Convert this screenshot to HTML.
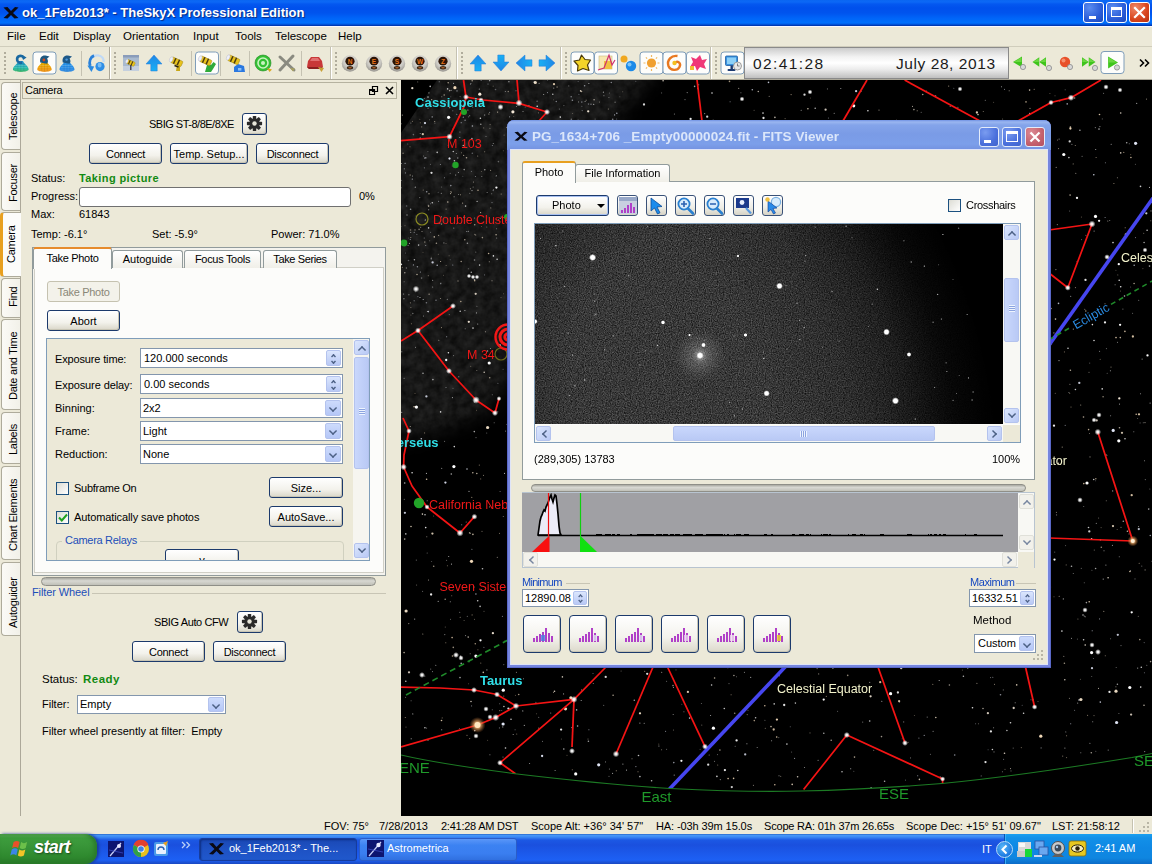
<!DOCTYPE html>
<html><head><meta charset="utf-8"><title>TheSkyX</title>
<style>
*{box-sizing:border-box;margin:0;padding:0}
html,body{width:1152px;height:864px;overflow:hidden;background:#ece9d8;font-family:"Liberation Sans",sans-serif;font-size:11px;color:#000}
.abs{position:absolute}
div,span,i,b{position:absolute;white-space:nowrap}
#title{left:0;top:0;width:1152px;height:26px;background:linear-gradient(#0a66f2 0,#0c68f6 2px,#0458f0 4px,#0050ec 8px,#0054ee 13px,#0064f8 18px,#0070fc 23px,#0046cc 25px,#002c98 26px)}
#title .t{left:22px;top:5px;color:#fff;font-weight:bold;font-size:13px;text-shadow:1px 1px 1px #0a2a80}
.wb{top:2px;width:21px;height:21px;border:1px solid #fff;border-radius:3px;background:radial-gradient(circle at 30% 25%,#5a8cf0,#2a5cd8 60%,#1c48b8)}
.wb.cl{background:radial-gradient(circle at 30% 25%,#f08868,#d8441c 60%,#b83010)}
#menu{left:0;top:26px;width:1152px;height:20px;background:#ece9d8;border-top:1px solid #f8f8ff}
#menu span{top:3px;font-size:11.5px}
#tb{left:0;top:46px;width:1152px;height:34px;background:#ece9d8;border-top:1px solid #d0cdbc}
#sky{left:401px;top:80px;width:751px;height:736px;background:#000;overflow:hidden}
#dock{left:0;top:80px;width:401px;height:736px;background:#ece9d8}
#status{left:0;top:816px;width:1152px;height:18px;background:#ece9d8}
#status span{top:4px;font-size:11px}
#task{left:0;top:834px;width:1152px;height:30px;background:linear-gradient(#1a54b8 0,#4a9af8 1px,#3a88f4 3px,#1c58e4 6px,#1a50de 11px,#1c5aec 20px,#1d60f4 26px,#1a48c0 30px)}
.btn{height:21px;border:1px solid #1c3a6c;border-radius:3px;background:linear-gradient(#fff,#f3f2ec 60%,#d9d6c8);text-align:center;font-size:11px;line-height:20px;box-shadow:inset -1px -1px 0 #c8c5b5}
.btn.dis{color:#8a8878;border-color:#c5c2b0;background:#f3f2ea;box-shadow:none}
.lbl{font-size:11px;line-height:13px}
.fld{background:#fff;border:1px solid #8396ad;height:20px;font-size:11px;line-height:18px;padding-left:3px}
.spin{right:1px;top:1px;width:15px;height:16px;background:linear-gradient(#dbe6fd,#b9c9f5);border:1px solid #b4c3ee;border-radius:2px}
.cb{width:13px;height:13px;border:1px solid #1c5180;background:linear-gradient(135deg,#dcdcd4,#fff)}
</style></head><body>
<div id="title">
<svg class="abs" style="left:3px;top:6px" width="16" height="14" viewBox="0 0 16 14"><path d="M0.5 1.5 L4.5 1 L8 5 L12 1 L15.5 1.5 L10 7 L15.5 12 L11.5 12.5 L8 9 L4.5 12.5 L0.5 12 L6 7 Z" fill="#0a0a14"/></svg>
<div class="t">ok_1Feb2013* - TheSkyX Professional Edition</div>
<div class="wb" style="left:1083px"><i style="position:absolute;left:5px;top:13px;width:7px;height:3px;background:#fff"></i></div>
<div class="wb" style="left:1106px"><i style="position:absolute;left:4px;top:4px;width:11px;height:10px;border:1px solid #fff;border-top:3px solid #fff"></i></div>
<div class="wb cl" style="left:1129px"><svg width="19" height="19" viewBox="0 0 19 19" style="position:absolute;left:0;top:0"><path d="M5 5 L14 14 M14 5 L5 14" stroke="#fff" stroke-width="2.2" stroke-linecap="square"/></svg></div>
</div>
<div id="menu">
<span style="left:7px">File</span><span style="left:39px">Edit</span><span style="left:73px">Display</span><span style="left:123px">Orientation</span><span style="left:193px">Input</span><span style="left:235px">Tools</span><span style="left:275px">Telescope</span><span style="left:338px">Help</span>
</div>
<div id="tb">
<svg class="abs" style="left:0;top:-1px" width="1152" height="34" viewBox="0 46 1152 34">
<defs>
<linearGradient id="gTeal" x1="0" y1="0" x2="0" y2="1"><stop offset="0" stop-color="#2a8fd0"/><stop offset="0.6" stop-color="#22b8b0"/><stop offset="1" stop-color="#1fae5c"/></linearGradient>
<linearGradient id="gOr" x1="0" y1="0" x2="0" y2="1"><stop offset="0" stop-color="#e8b800"/><stop offset="1" stop-color="#f08a00"/></linearGradient>
<linearGradient id="gBl" x1="0" y1="0" x2="0" y2="1"><stop offset="0" stop-color="#2d9cf0"/><stop offset="1" stop-color="#1c7fe0"/></linearGradient>
<linearGradient id="gArr" x1="0" y1="0" x2="0" y2="1"><stop offset="0" stop-color="#1f86e6"/><stop offset="1" stop-color="#18b0f4"/></linearGradient>
<radialGradient id="gBall" cx="0.5" cy="0.35" r="0.7"><stop offset="0" stop-color="#f4f4f2"/><stop offset="0.6" stop-color="#c8c6c0"/><stop offset="1" stop-color="#8c8a84"/></radialGradient>
<linearGradient id="gTime" x1="0" y1="0" x2="0" y2="1"><stop offset="0" stop-color="#c9c9c9"/><stop offset="0.3" stop-color="#f2f2f2"/><stop offset="0.5" stop-color="#ffffff"/><stop offset="0.7" stop-color="#ececec"/><stop offset="1" stop-color="#bdbdbd"/></linearGradient>
<g id="grip"><rect x="0" y="0" width="2" height="2" fill="#b0ac9c"/><rect x="0" y="4" width="2" height="2" fill="#b0ac9c"/><rect x="0" y="8" width="2" height="2" fill="#b0ac9c"/><rect x="0" y="12" width="2" height="2" fill="#b0ac9c"/><rect x="0" y="16" width="2" height="2" fill="#b0ac9c"/><rect x="0" y="20" width="2" height="2" fill="#b0ac9c"/></g>
<g id="pbox"><rect x="-11.5" y="-11" width="23" height="22" rx="3" fill="#fdfdfb" stroke="#7f9db9" stroke-width="1"/></g>
<g id="blob"><path d="M-2.2 -2 C-3 1 -7.8 3 -7.8 6.4 C-7.8 9.4 7.8 9.4 7.8 6.4 C7.8 3 3 1 2.2 -2 Z"/><path d="M-5.5 2.6 H5.5 M-6.8 4.8 H6.8 M-7 7 H7" stroke="#fff" stroke-opacity=".28" stroke-width=".8" fill="none"/><path d="M-3 0 V8.5 M0 -1 V8.8 M3 0 V8.5" stroke="#000" stroke-opacity=".12" stroke-width=".7" fill="none"/></g>
<g id="tele"><g transform="rotate(24) scale(.9)"><rect x="-7" y="-3.2" width="13" height="6.4" rx="1.2" fill="#e8c21c" stroke="#a88a08" stroke-width="0.6"/><rect x="-3.6" y="-3.4" width="1.6" height="6.8" fill="#4a3a10"/><rect x="0.8" y="-3.4" width="1.6" height="6.8" fill="#4a3a10"/><ellipse cx="-7" cy="0" rx="1.8" ry="3.2" fill="#eef0fa" stroke="#b8b8c8" stroke-width="0.5"/></g></g>
<g id="ball"><circle cx="0" cy="0.5" r="8.2" fill="url(#gBall)"/><ellipse cx="0" cy="-1.8" rx="4.6" ry="4.4" fill="#2c1406"/><ellipse cx="0" cy="4.8" rx="3.2" ry="1.7" fill="#3a2614"/><ellipse cx="0" cy="4.8" rx="1.8" ry="0.8" fill="#b0602a"/></g>
<g id="arrU"><path d="M0 -8 L8 1 L3.2 1 L3.2 8 L-3.2 8 L-3.2 1 L-8 1 Z" fill="url(#gArr)" stroke="#2a7ad8" stroke-width="0.5"/></g>
<g id="gtri"><path d="M-5 0 L4 -5.5 L4 5.5 Z" fill="#3fc41c"/><path d="M-4 0 L3.5 -4.5 L3.5 0 Z" fill="#7ee050" opacity=".7"/></g>
<g id="clk"><circle cx="0" cy="0" r="2.6" fill="#d8d8d8" stroke="#8a8a8a" stroke-width="0.8"/></g>
</defs>
<!-- lines -->
<rect x="0" y="79" width="1152" height="1" fill="#aca899"/>
<rect x="109" y="47" width="1" height="32" fill="#aca899"/><rect x="110" y="47" width="1" height="32" fill="#fff"/>
<rect x="330" y="47" width="1" height="32" fill="#c5c2b2"/><rect x="331" y="47" width="1" height="32" fill="#fff"/>
<rect x="456" y="47" width="1" height="32" fill="#c5c2b2"/><rect x="457" y="47" width="1" height="32" fill="#fff"/>
<rect x="560" y="47" width="1" height="32" fill="#c5c2b2"/><rect x="561" y="47" width="1" height="32" fill="#fff"/>
<rect x="710" y="47" width="1" height="32" fill="#c5c2b2"/><rect x="711" y="47" width="1" height="32" fill="#fff"/>
<use href="#grip" x="4" y="52"/><use href="#grip" x="114" y="52"/><use href="#grip" x="335" y="52"/><use href="#grip" x="461" y="52"/><use href="#grip" x="565" y="52"/><use href="#grip" x="715" y="52"/>
<!-- thin separators -->
<rect x="81" y="51" width="1" height="25" fill="#c5c2b2"/><rect x="191" y="51" width="1" height="25" fill="#c5c2b2"/><rect x="220" y="51" width="1" height="25" fill="#c5c2b2"/><rect x="249" y="51" width="1" height="25" fill="#c5c2b2"/><rect x="301" y="51" width="1" height="25" fill="#c5c2b2"/>
<!-- icon1 teal -->
<g transform="translate(20.8,63)"><use href="#blob" fill="url(#gTeal)"/><path d="M3.2 -5 C1 -8.6 -4.4 -7.2 -3.6 -2.8 C-3.2 -0.8 -1 0.2 1.4 -0.4" fill="none" stroke="#1a68a0" stroke-width="2.6"/><path d="M1.2 -8 L5.8 -5.6 L2.2 -3 Z" fill="#1a68a0"/></g>
<!-- icon2 orange pressed -->
<g transform="translate(44.5,63)"><use href="#pbox"/><g transform="scale(.92 1)"><use href="#blob" fill="url(#gOr)"/></g><path d="M-4.2 -0.5 C-5.4 -5.6 -2 -8 1 -7.4 L5 -6.6 L2.6 -4.4 C4 -2 3.6 0 2.2 0.8 Z" fill="#1d5880"/><circle cx="-0.6" cy="-3" r="1.4" fill="#d04a20"/></g>
<!-- icon3 blue -->
<g transform="translate(67,63)"><g transform="scale(.96 1)"><use href="#blob" fill="url(#gBl)"/></g><path d="M-4.2 -0.5 C-5.4 -5.6 -2 -8 1 -7.4 L5 -6.6 L2.6 -4.4 C4 -2 3.6 0 2.2 0.8 Z" fill="#1d5888"/><circle cx="-0.4" cy="-3.4" r="1.2" fill="#4a9ae0"/></g>
<!-- icon4 circular arrow -->
<g transform="translate(96,63)"><path d="M-6 2 C-7 -5 -2 -8 2 -7.6 C6 -7 8 -4 7.6 -1" fill="none" stroke="#c0daf6" stroke-width="2.4"/><path d="M-5.8 3 C-7.2 -2 -5.4 -6 -2 -7.4" fill="none" stroke="#2a80d8" stroke-width="2.8"/><path d="M-8.6 2.4 L-1.8 3.4 L-4.6 9 Z" fill="#2a8ae0"/><circle cx="4" cy="3.6" r="4.6" fill="#2f8fe6"/><ellipse cx="3.6" cy="2" rx="2" ry="2.6" fill="#8cc8f8" opacity=".8"/></g>
<!-- icon5 picture telescope -->
<g transform="translate(131,63)"><rect x="-8" y="-8" width="16" height="16" fill="#a9bacf"/><rect x="-8" y="-8" width="16" height="2.5" fill="#8a9cba"/><rect x="-8" y="3" width="16" height="5" fill="#c5d0de"/><g transform="scale(0.72)"><use href="#tele"/></g><rect x="-1" y="2" width="1.5" height="5" fill="#4a4a5a"/></g>
<!-- icon6 up arrow -->
<g transform="translate(154,63)"><use href="#arrU"/></g>
<!-- icon7 telescope -->
<g transform="translate(177,62)"><use href="#tele"/><path d="M0 3 L-1 9 L3 9 L3 3Z" fill="#c8a818"/><path d="M-2.5 3.5 L1.5 5" stroke="#2a2210" stroke-width="1.4"/></g>
<!-- icon8 telescope green pressed -->
<g transform="translate(207,63)"><use href="#pbox"/><path d="M-2 9 L0 2 L4 2 L6.5 -1 L9 1 L6 6 L4 9 Z" fill="#2eaa3a"/><g transform="translate(-1,-2)"><use href="#tele"/></g></g>
<!-- icon9 telescope blue -->
<g transform="translate(236,63)"><path d="M-2 9 L-2 4 L2 1 L8 3 L9 9 Z" fill="#2a78e0"/><rect x="2" y="5" width="3.4" height="2.6" fill="#8cc0f8"/><g transform="translate(-2,-3)"><use href="#tele"/></g></g>
<!-- icon10 green @ -->
<g transform="translate(263,63)"><circle r="8" fill="#34c034"/><circle r="8" fill="none" stroke="#228a22" stroke-width="0.6"/><circle r="5" fill="none" stroke="#c8f4c0" stroke-width="1.6"/><circle r="2" fill="#c8f4c0"/><path d="M4 5 L9 6.5 L6.5 9Z" fill="#d8a820"/></g>
<!-- icon11 gray X -->
<g transform="translate(287,63)"><path d="M-7 -6 L7 7 M6 -7 L-7 7" stroke="#8a8a80" stroke-width="3" stroke-linecap="round"/><path d="M3 5 L8 5.5 L6 8.5Z" fill="#a8a060"/></g>
<!-- icon12 red -->
<g transform="translate(315,63)"><path d="M-8 4 L-7 -2 L-4 -6 L4 -6 L7 -2 L8 4 L5 6 L-6 6 Z" fill="#c83838"/><path d="M-5 -2 L-3 -5 L3 -5 L5 -2Z" fill="#e07070"/><path d="M-8 4 L8 4 L5 6 L-6 6Z" fill="#8a2020"/><path d="M3 4 L9 5 L6.5 9Z" fill="#c8a038"/></g>
<!-- balls -->
<use href="#ball" x="350" y="63"/><text x="350" y="63.6" text-anchor="middle" font-family="Liberation Sans, sans-serif" font-weight="bold" font-size="6.5" fill="#e8741c">N</text><use href="#ball" x="374" y="63"/><text x="374" y="63.6" text-anchor="middle" font-family="Liberation Sans, sans-serif" font-weight="bold" font-size="6.5" fill="#e8741c">E</text><use href="#ball" x="397" y="63"/><text x="397" y="63.6" text-anchor="middle" font-family="Liberation Sans, sans-serif" font-weight="bold" font-size="6.5" fill="#e8741c">S</text><use href="#ball" x="420" y="63"/><text x="420" y="63.6" text-anchor="middle" font-family="Liberation Sans, sans-serif" font-weight="bold" font-size="6.5" fill="#e8741c">W</text><use href="#ball" x="443" y="63"/><text x="443" y="63.6" text-anchor="middle" font-family="Liberation Sans, sans-serif" font-weight="bold" font-size="6.5" fill="#e8741c">Z</text>
<!-- arrows -->
<g transform="translate(478,63)"><use href="#arrU"/></g>
<g transform="translate(501,63) rotate(180)"><use href="#arrU"/></g>
<g transform="translate(524,63) rotate(-90)"><use href="#arrU"/></g>
<g transform="translate(547,63) rotate(90)"><use href="#arrU"/></g>
<!-- star -->
<g transform="translate(582.5,63)"><use href="#pbox"/><path d="M-1 -8 L2.5 -3.5 L8 -3 L5 2 L6.5 7.5 L0.5 5.5 L-5 8 L-4.5 2.5 L-8.5 -2 L-3 -3 Z" fill="#f4d428" stroke="#4a3a08" stroke-width="1.2" stroke-linejoin="round"/></g>
<!-- chart -->
<g transform="translate(606,63)"><use href="#pbox"/><rect x="-7" y="-7" width="13" height="13" fill="#f8e8b0" stroke="#c8b880" stroke-width="0.6"/><rect x="-2" y="-2" width="8" height="8" fill="#f0c040"/><path d="M-8 7 L-2 5 L3 -8 L6 2 L9 -3" fill="none" stroke="#d03070" stroke-width="1.2"/></g>
<!-- two balls -->
<g transform="translate(628,63)"><circle cx="-4" cy="-4" r="3.5" fill="#f0a820"/><circle cx="3" cy="3" r="5.2" fill="#1c8ae8"/><circle cx="1.5" cy="1.5" r="2" fill="#7cc4f8"/></g>
<!-- sun -->
<g transform="translate(651.5,63)"><use href="#pbox"/><circle r="4.6" fill="#f0a030"/><g stroke="#f0b860" stroke-width="1.2"><path d="M0 -8 V-6 M0 8 V6 M-8 0 H-6 M8 0 H6 M-5.6 -5.6 L-4.4 -4.4 M5.6 5.6 L4.4 4.4 M-5.6 5.6 L-4.4 4.4 M5.6 -5.6 L4.4 -4.4"/></g></g>
<!-- spiral -->
<g transform="translate(674.5,63)"><use href="#pbox"/><path d="M0 0 C3 -3 7 0 5 4 C3 8 -4 8 -6 3 C-8 -3 -3 -8 3 -7" fill="none" stroke="#e87820" stroke-width="2.4"/><circle r="2.2" fill="#f4c020"/></g>
<!-- splat -->
<g transform="translate(698,63)"><use href="#pbox"/><path d="M-7 -6 L-2 -4 L2 -8 L4 -3 L9 -4 L6 1 L8 6 L2 4 L-1 8 L-3 3 L-8 4 L-5 -1 Z" fill="#f03878"/><rect x="-8" y="3" width="4" height="4" fill="#f0c030"/></g>
<!-- monitor -->
<g transform="translate(732.5,63)"><use href="#pbox"/><rect x="-7" y="-7" width="12" height="9.5" rx="1" fill="#3a94e0" stroke="#1c5aa0" stroke-width="0.8"/><rect x="-5.5" y="-5.5" width="9" height="6.5" fill="#8cd0f8"/><rect x="-2" y="2.5" width="2.4" height="4" fill="#1c3a70"/><rect x="-5" y="6" width="8" height="2" rx="1" fill="#1c3a70"/><circle cx="5" cy="3" r="4" fill="#e8e8e8" stroke="#8a8a8a" stroke-width="0.8"/><path d="M5 0.5 V3 H7" fill="none" stroke="#555" stroke-width="0.7"/></g>
<!-- time box -->
<rect x="744.5" y="47.5" width="264" height="31" fill="url(#gTime)" stroke="#8a8a8a" stroke-width="1"/>
<text x="753" y="68.5" font-family="Liberation Sans, sans-serif" font-size="15.5" fill="#1a1a1a" textLength="70">02:41:28</text>
<text x="896" y="68.5" font-family="Liberation Sans, sans-serif" font-size="15.5" fill="#1a1a1a" textLength="99">July 28, 2013</text>
<!-- right arrows -->
<g transform="translate(1018,62)"><use href="#gtri"/><use href="#clk" x="5" y="5"/></g>
<g transform="translate(1040,62) scale(0.75 0.85)"><use href="#gtri" x="-5"/><use href="#gtri" x="4"/></g><use href="#clk" x="1049" y="68"/>
<g transform="translate(1065,62)"><circle r="5.2" fill="#e8502a"/><circle cx="-1.5" cy="-1.5" r="2" fill="#f49070"/><use href="#clk" x="5" y="5"/></g>
<g transform="translate(1088,62) scale(-0.75 0.85)"><use href="#gtri" x="-5"/><use href="#gtri" x="4"/></g><use href="#clk" x="1095" y="68"/>
<g transform="translate(1112.5,62.5)"><use href="#pbox"/><g transform="scale(-1.1 1.1)"><use href="#gtri"/></g><use href="#clk" x="4.5" y="5"/></g>
<path d="M1140 59.5 L1143.5 63 L1140 66.5 M1145 59.5 L1148.5 63 L1145 66.5" fill="none" stroke="#000" stroke-width="1.6"/>
</svg>
</div>
<div id="dock">
<style>
.vt{left:1px;width:20px;background:linear-gradient(90deg,#fbfaf6,#f1f0e8);border:1px solid #aeab9b;border-right:none;border-radius:4px 0 0 4px}
.vt span{left:5px;font-size:11px;letter-spacing:-.25px;transform-origin:0 0;transform:rotate(-90deg);line-height:13px}
.tab{top:170px;height:18px;border:1px solid #919b9c;border-bottom:none;border-radius:3px 3px 0 0;background:linear-gradient(#fff,#f0efe8);font-size:11px;line-height:16px;text-align:center}
.dd{right:1px;top:1px;width:16px;height:16px;background:linear-gradient(#cddbfc,#b5c7f7);border:1px solid #b4c3ee;border-radius:2px}
.dd:after{content:"";position:absolute;left:3px;top:3px;width:6px;height:6px;border-right:2.6px solid #4d6185;border-bottom:2.6px solid #4d6185;transform:rotate(45deg) scale(.72)}
.sp i{left:3.5px;width:5px;height:5px;border-left:2.4px solid #4d6185;border-top:2.4px solid #4d6185}
</style>
<!-- vertical tabs -->
<div class="vt" style="top:2px;height:68px"><span style="top:57px">Telescope</span></div>
<div class="vt" style="top:72px;height:59px"><span style="top:49px">Focuser</span></div>
<div class="vt" style="top:132px;height:65px;background:#fcfcfa;border-left:3px solid #e8a020;width:21px;left:0;z-index:2"><span style="top:50px;left:2px">Camera</span></div>
<div class="vt" style="top:198px;height:40px"><span style="top:28px">Find</span></div>
<div class="vt" style="top:239px;height:91px"><span style="top:80px">Date and Time</span></div>
<div class="vt" style="top:332px;height:52px"><span style="top:42px">Labels</span></div>
<div class="vt" style="top:386px;height:94px"><span style="top:84px">Chart Elements</span></div>
<div class="vt" style="top:482px;height:74px"><span style="top:65px">Autoguider</span></div>
<div style="left:20px;top:0;width:1px;height:736px;background:#aca899"></div>
<!-- header -->
<div style="left:22px;top:2px;width:375px;height:17px;border:1px solid #b5b29f;background:#ece9d8"></div>
<span class="lbl" style="left:25px;top:4px;font-size:11px;letter-spacing:-.3px">Camera</span>
<svg class="abs" style="left:369px;top:6px" width="26" height="10" viewBox="0 0 26 10"><path d="M3.5 0.5 H8.5 V5.5 H3.5 Z M0.5 3.5 H5.5 V8.5 H0.5 Z" fill="#ece9d8" stroke="#000" stroke-width="1.2"/><rect x="0" y="3" width="6" height="2" fill="#000"/><path d="M17 1 L24 8 M24 1 L17 8" stroke="#000" stroke-width="1.6"/></svg>
<!-- camera -->
<span class="lbl" style="left:149px;top:38px;letter-spacing:-0.5px">SBIG ST-8/8E/8XE</span>
<div class="btn" style="left:242px;top:33px;width:25px;height:22px"></div>
<svg class="abs gear" style="left:246px;top:35px" width="17" height="17" viewBox="-8.5 -8.5 17 17"><g fill="#2a2a2a"><circle r="5.2"/><g id="gt"><rect x="-1.7" y="-7.6" width="3.4" height="15.2" rx=".6"/><rect x="-1.7" y="-7.6" width="3.4" height="15.2" rx=".6" transform="rotate(45)"/><rect x="-1.7" y="-7.6" width="3.4" height="15.2" rx=".6" transform="rotate(90)"/><rect x="-1.7" y="-7.6" width="3.4" height="15.2" rx=".6" transform="rotate(135)"/></g></g><circle r="2.2" fill="#e8e6da"/></svg>
<div class="btn" style="left:89px;top:63px;width:73px;letter-spacing:-0.3px">Connect</div>
<div class="btn" style="left:170px;top:63px;width:78px">Temp. Setup...</div>
<div class="btn" style="left:256px;top:63px;width:73px;letter-spacing:-0.27px">Disconnect</div>
<span class="lbl" style="left:31px;top:92px">Status:</span>
<span class="lbl" style="left:79px;top:92px;font-weight:bold;color:#128a12;letter-spacing:0.4px">Taking picture</span>
<span class="lbl" style="left:31px;top:110px">Progress:</span>
<div style="left:79px;top:107px;width:272px;height:20px;background:#fff;border:1px solid #707070;border-radius:3px"></div>
<span class="lbl" style="left:359px;top:110px">0%</span>
<span class="lbl" style="left:31px;top:128px">Max:</span><span class="lbl" style="left:79px;top:128px">61843</span>
<span class="lbl" style="left:31px;top:148px">Temp: -6.1°</span><span class="lbl" style="left:152px;top:148px">Set: -5.9°</span><span class="lbl" style="left:271px;top:148px">Power: 71.0%</span>
<!-- tab widget -->
<div style="left:32px;top:167px;width:354px;height:329px;border:1px solid #919b9c;background:#f4f3ee"></div>
<div style="left:34px;top:187px;width:350px;height:306px;border:1px solid #d0cfc6;background:#fcfcfa"></div>
<div class="tab" style="left:112px;width:71px">Autoguide</div>
<div class="tab" style="left:184px;width:77px;letter-spacing:-0.3px">Focus Tools</div>
<div class="tab" style="left:263px;width:74px;letter-spacing:-0.37px">Take Series</div>
<div class="tab" style="left:33px;top:167px;width:79px;height:22px;background:#fcfcfa;border-top:2px solid #e68b2c;line-height:18px;letter-spacing:-0.3px">Take Photo</div>
<div class="btn dis" style="left:47px;top:201px;width:73px;letter-spacing:-0.3px">Take Photo</div>
<div class="btn" style="left:47px;top:230px;width:73px">Abort</div>
<!-- scroll area -->
<div style="left:46px;top:258px;width:324px;height:223px;border:1px solid #7f9db9;background:#ece9d8;overflow:hidden">
 <span class="lbl" style="left:8px;top:14px;letter-spacing:-0.15px">Exposure time:</span>
 <div class="fld" style="left:93px;top:9px;width:203px">120.000 seconds<div class="spin sp"><i style="top:3px;transform:rotate(45deg) scale(.7)"></i><i style="top:8px;transform:rotate(225deg) scale(.7)"></i></div></div>
 <span class="lbl" style="left:8px;top:40px;letter-spacing:-0.1px">Exposure delay:</span>
 <div class="fld" style="left:93px;top:35px;width:203px">0.00 seconds<div class="spin sp"><i style="top:3px;transform:rotate(45deg) scale(.7)"></i><i style="top:8px;transform:rotate(225deg) scale(.7)"></i></div></div>
 <span class="lbl" style="left:8px;top:63px">Binning:</span>
 <div class="fld" style="left:93px;top:59px;width:203px;padding-left:2px">2x2<div class="dd"></div></div>
 <span class="lbl" style="left:8px;top:86px">Frame:</span>
 <div class="fld" style="left:93px;top:82px;width:203px;padding-left:2px">Light<div class="dd"></div></div>
 <span class="lbl" style="left:8px;top:109px">Reduction:</span>
 <div class="fld" style="left:93px;top:105px;width:203px;padding-left:2px">None<div class="dd"></div></div>
 <div class="cb" style="left:9px;top:143px"></div><span class="lbl" style="left:27px;top:143px;letter-spacing:-0.27px">Subframe On</span>
 <div class="btn" style="left:222px;top:138px;width:74px">Size...</div>
 <div class="cb" style="left:9px;top:172px"></div><svg class="abs" style="left:11px;top:174px" width="10" height="10" viewBox="0 0 10 10"><path d="M1 4.5 L3.8 7.5 L9 1.5" fill="none" stroke="#21a121" stroke-width="2"/></svg>
 <span class="lbl" style="left:27px;top:172px;letter-spacing:-0.1px">Automatically save photos</span>
 <div class="btn" style="left:222px;top:167px;width:74px">AutoSave...</div>
 <div style="left:9px;top:202px;width:288px;height:40px;border:1px solid #d0d0bf;border-radius:4px"></div>
 <span class="lbl" style="left:15px;top:195px;color:#1c4fb8;background:#ece9d8;padding:0 3px;letter-spacing:-0.3px">Camera Relays</span>
 <div class="btn" style="left:118px;top:210px;width:74px">v</div>
 <!-- scrollbar -->
 <div style="left:306px;top:0;width:17px;height:221px;background:#f6f5f0"></div>
 <div class="sbb" style="left:307px;top:1px"></div>
 <div class="sbb dn" style="left:307px;top:204px"></div>
 <div style="left:307px;top:18px;width:15px;height:112px;border:1px solid #b4c3ee;border-radius:2px;background:linear-gradient(90deg,#c9d7fc,#b9c9f5)"><i style="left:4px;top:50px;width:6px;height:1px;background:#eef4fe;box-shadow:0 2px #eef4fe,0 4px #eef4fe,0 6px #eef4fe,0 1px #8ca4e0,0 3px #8ca4e0,0 5px #8ca4e0"></i></div>
</div>
<style>
.sbb{width:15px;height:15px;border:1px solid #b4c3ee;border-radius:2px;background:linear-gradient(135deg,#dbe6fd,#b9c9f5)}
.sbb:after{content:"";position:absolute;left:3px;top:4.5px;width:6px;height:6px;border-left:2.6px solid #4d6185;border-top:2.6px solid #4d6185;transform:rotate(45deg) scale(.72)}
.sbb.dn:after{top:0.5px;transform:rotate(225deg) scale(.72)}
.sbb.lf:after{left:4.5px;top:2.5px;transform:rotate(-45deg) scale(.72)}
.sbb.rt:after{left:1px;top:2.5px;transform:rotate(135deg) scale(.72)}
</style>
<!-- splitter -->
<div style="left:41px;top:497px;width:335px;height:9px;border-radius:5px;background:linear-gradient(#a8a8a0,#d8d8d2 40%,#c0c0b8);border:1px solid #8f8f88"></div>
<!-- filter wheel -->
<div style="left:92px;top:513px;width:294px;height:1px;background:#c8c5b5"></div>
<span class="lbl" style="left:32px;top:506px;color:#1c4fb8;font-size:11px;letter-spacing:-.1px">Filter Wheel</span>
<span class="lbl" style="left:154px;top:536px;letter-spacing:-0.4px">SBIG Auto CFW</span>
<div class="btn" style="left:237px;top:531px;width:26px;height:22px"></div>
<svg class="abs" style="left:241px;top:533px" width="17" height="17" viewBox="-8.5 -8.5 17 17"><g fill="#2a2a2a"><circle r="5.2"/><rect x="-1.7" y="-7.6" width="3.4" height="15.2" rx=".6"/><rect x="-1.7" y="-7.6" width="3.4" height="15.2" rx=".6" transform="rotate(45)"/><rect x="-1.7" y="-7.6" width="3.4" height="15.2" rx=".6" transform="rotate(90)"/><rect x="-1.7" y="-7.6" width="3.4" height="15.2" rx=".6" transform="rotate(135)"/></g><circle r="2.2" fill="#e8e6da"/></svg>
<div class="btn" style="left:132px;top:561px;width:73px;letter-spacing:-0.3px">Connect</div>
<div class="btn" style="left:213px;top:561px;width:73px;letter-spacing:-0.27px">Disconnect</div>
<span class="lbl" style="left:42px;top:593px;font-size:11.5px">Status:</span><span class="lbl" style="left:83px;top:593px;font-weight:bold;color:#128a12;font-size:11.5px;letter-spacing:0.5px">Ready</span>
<span class="lbl" style="left:42px;top:618px">Filter:</span>
<div class="fld" style="left:77px;top:615px;width:149px;height:19px;line-height:17px;padding-left:2px">Empty<div class="dd" style="height:15px"></div></div>
<span class="lbl" style="left:42px;top:645px">Filter wheel presently at filter:&nbsp; Empty</span>
</div>
<div id="sky"><svg class="abs" style="left:0;top:0" width="751" height="736" viewBox="401 80 751 736">
<defs><filter id="bl" x="-20%" y="-20%" width="140%" height="140%"><feGaussianBlur stdDeviation="9"/></filter><filter id="b1" x="0" y="0" width="100%" height="100%"><feGaussianBlur stdDeviation="0.45"/></filter><radialGradient id="sg"><stop offset="0" stop-color="#fff"/><stop offset="0.35" stop-color="#fff" stop-opacity=".9"/><stop offset="1" stop-color="#fff" stop-opacity="0"/></radialGradient><radialGradient id="so"><stop offset="0" stop-color="#fff0d0"/><stop offset="0.35" stop-color="#f0b070" stop-opacity=".9"/><stop offset="1" stop-color="#c07030" stop-opacity="0"/></radialGradient><filter id="mw" x="0" y="0" width="100%" height="100%" color-interpolation-filters="sRGB"><feTurbulence type="fractalNoise" baseFrequency="0.12" numOctaves="3" seed="4"/><feColorMatrix type="matrix" values="0.14 0 0 0 0.022  0.14 0 0 0 0.022  0.14 0 0 0 0.020  0 0 0 0 1"/></filter><filter id="bl2" x="-20%" y="-20%" width="140%" height="140%"><feGaussianBlur stdDeviation="9"/></filter><mask id="mwm"><polygon points="380,60 665,60 625,110 565,180 528,300 512,370 488,410 445,430 380,445" fill="#fff" filter="url(#bl2)"/></mask></defs>
<clipPath id="mwc"><polygon points="437,80 1152,80 1152,816 401,816 401,133"/></clipPath>
<g clip-path="url(#mwc)"><g mask="url(#mwm)"><rect x="401" y="80" width="400" height="450" fill="#171717"/><rect x="401" y="80" width="400" height="450" filter="url(#mw)"/></g></g>
<g filter="url(#b1)"><circle cx="444.6" cy="441.3" r="0.55" fill="#fff" opacity="0.50"/><circle cx="445.4" cy="482.6" r="1.15" fill="#dfe4f4" opacity="0.93"/><circle cx="1112.7" cy="490.9" r="0.55" fill="#fff" opacity="0.69"/><circle cx="474.2" cy="587.0" r="0.55" fill="#e8d8c0" opacity="0.57"/><circle cx="795.4" cy="703.1" r="0.80" fill="#fff" opacity="0.69"/><circle cx="489.7" cy="377.7" r="0.80" fill="#e8d8c0" opacity="0.65"/><circle cx="717.7" cy="765.0" r="0.55" fill="#f0d8b8" opacity="0.55"/><circle cx="1058.5" cy="303.4" r="0.80" fill="#dfe4f4" opacity="0.78"/><circle cx="471.3" cy="272.2" r="0.80" fill="#fff" opacity="0.62"/><circle cx="1146.8" cy="665.2" r="0.55" fill="#fff" opacity="0.49"/><circle cx="661.6" cy="749.7" r="0.55" fill="#e8d8c0" opacity="0.56"/><circle cx="445.3" cy="627.0" r="0.55" fill="#e8d8c0" opacity="0.44"/><circle cx="1089.5" cy="433.5" r="0.55" fill="#f4e8d8" opacity="0.49"/><circle cx="1064.4" cy="663.3" r="0.80" fill="#e8d8c0" opacity="0.68"/><circle cx="1141.8" cy="566.1" r="0.55" fill="#fff" opacity="0.43"/><circle cx="404.1" cy="378.3" r="0.55" fill="#fff" opacity="0.55"/><circle cx="441.5" cy="720.5" r="0.80" fill="#f0d8b8" opacity="0.86"/><circle cx="1140.5" cy="393.7" r="0.55" fill="#fff" opacity="0.56"/><circle cx="401.2" cy="187.7" r="0.55" fill="#fff" opacity="0.48"/><circle cx="453.8" cy="228.1" r="0.55" fill="#f4e8d8" opacity="0.57"/><circle cx="487.6" cy="427.5" r="1.60" fill="#e8d8c0" opacity="1.00"/><circle cx="477.7" cy="324.0" r="0.55" fill="#fff" opacity="0.64"/><circle cx="1116.0" cy="337.6" r="0.80" fill="#f0d8b8" opacity="0.87"/><circle cx="797.6" cy="776.7" r="0.80" fill="#f4e8d8" opacity="0.81"/><circle cx="790.3" cy="726.7" r="0.55" fill="#dfe4f4" opacity="0.43"/><circle cx="1140.7" cy="687.1" r="0.80" fill="#fff" opacity="0.85"/><circle cx="1144.2" cy="642.6" r="0.55" fill="#dfe4f4" opacity="0.42"/><circle cx="1119.3" cy="398.4" r="1.15" fill="#f4e8d8" opacity="1.00"/><circle cx="461.5" cy="152.7" r="0.55" fill="#e8d8c0" opacity="0.47"/><circle cx="869.7" cy="721.0" r="0.80" fill="#fff" opacity="0.74"/><circle cx="550.7" cy="713.0" r="0.55" fill="#fff" opacity="0.57"/><circle cx="1002.4" cy="771.8" r="0.55" fill="#fff" opacity="0.49"/><circle cx="496.4" cy="187.6" r="1.15" fill="#fff" opacity="0.96"/><circle cx="757.2" cy="747.5" r="0.55" fill="#fff" opacity="0.54"/><circle cx="1102.2" cy="388.9" r="0.80" fill="#fff" opacity="0.85"/><circle cx="422.0" cy="231.5" r="0.55" fill="#f4e8d8" opacity="0.62"/><circle cx="499.4" cy="727.9" r="0.55" fill="#dfe4f4" opacity="0.51"/><circle cx="1022.2" cy="705.3" r="0.55" fill="#dfe4f4" opacity="0.40"/><circle cx="415.0" cy="393.4" r="0.55" fill="#f0d8b8" opacity="0.35"/><circle cx="447.4" cy="565.8" r="0.55" fill="#f0d8b8" opacity="0.52"/><circle cx="480.7" cy="478.9" r="0.55" fill="#f0d8b8" opacity="0.45"/><circle cx="474.4" cy="401.9" r="0.55" fill="#fff" opacity="0.66"/><circle cx="1108.1" cy="577.8" r="0.80" fill="#f4e8d8" opacity="0.88"/><circle cx="1094.0" cy="715.6" r="0.55" fill="#e8d8c0" opacity="0.51"/><circle cx="492.3" cy="394.8" r="0.55" fill="#fff" opacity="0.43"/><circle cx="492.9" cy="633.2" r="1.15" fill="#f4e8d8" opacity="0.93"/><circle cx="508.4" cy="708.6" r="1.15" fill="#fff" opacity="0.84"/><circle cx="1144.4" cy="672.7" r="0.55" fill="#dfe4f4" opacity="0.50"/><circle cx="622.9" cy="764.1" r="0.55" fill="#fff" opacity="0.67"/><circle cx="1130.7" cy="154.6" r="0.55" fill="#f0d8b8" opacity="0.36"/><circle cx="1016.7" cy="684.9" r="0.80" fill="#e8d8c0" opacity="0.88"/><circle cx="513.2" cy="734.5" r="0.55" fill="#fff" opacity="0.60"/><circle cx="538.7" cy="717.4" r="0.55" fill="#fff" opacity="0.36"/><circle cx="1048.9" cy="403.1" r="0.55" fill="#f4e8d8" opacity="0.54"/><circle cx="867.9" cy="110.8" r="0.80" fill="#fff" opacity="0.88"/><circle cx="1101.1" cy="527.6" r="0.55" fill="#e8d8c0" opacity="0.42"/><circle cx="661.6" cy="92.9" r="0.55" fill="#fff" opacity="0.36"/><circle cx="780.7" cy="776.4" r="0.55" fill="#e8d8c0" opacity="0.44"/><circle cx="480.8" cy="663.1" r="0.55" fill="#f0d8b8" opacity="0.52"/><circle cx="1063.3" cy="598.9" r="0.55" fill="#fff" opacity="0.70"/><circle cx="1029.6" cy="90.1" r="0.80" fill="#e8d8c0" opacity="0.86"/><circle cx="1032.8" cy="699.8" r="0.80" fill="#fff" opacity="0.68"/><circle cx="921.2" cy="112.2" r="0.55" fill="#fff" opacity="0.44"/><circle cx="598.7" cy="764.8" r="1.60" fill="#dfe4f4" opacity="1.00"/><circle cx="644.0" cy="104.5" r="1.15" fill="#fff" opacity="0.84"/><circle cx="401.8" cy="351.7" r="0.55" fill="#fff" opacity="0.53"/><circle cx="469.2" cy="661.7" r="0.55" fill="#e8d8c0" opacity="0.56"/><circle cx="417.9" cy="296.6" r="0.55" fill="#dfe4f4" opacity="0.55"/><circle cx="1071.5" cy="638.2" r="0.55" fill="#fff" opacity="0.62"/><circle cx="1140.5" cy="186.4" r="0.80" fill="#fff" opacity="0.79"/><circle cx="1084.3" cy="616.0" r="0.55" fill="#fff" opacity="0.63"/><circle cx="1071.5" cy="566.2" r="0.80" fill="#fff" opacity="0.67"/><circle cx="432.4" cy="533.6" r="1.15" fill="#e8d8c0" opacity="0.88"/><circle cx="768.5" cy="82.4" r="0.80" fill="#dfe4f4" opacity="0.82"/><circle cx="1075.3" cy="145.5" r="0.55" fill="#e8d8c0" opacity="0.61"/><circle cx="1133.8" cy="431.7" r="0.55" fill="#fff" opacity="0.52"/><circle cx="616.8" cy="113.3" r="0.80" fill="#dfe4f4" opacity="0.66"/><circle cx="827.4" cy="88.9" r="0.55" fill="#fff" opacity="0.44"/><circle cx="475.7" cy="235.0" r="0.55" fill="#f4e8d8" opacity="0.60"/><circle cx="490.0" cy="716.3" r="0.55" fill="#e8d8c0" opacity="0.69"/><circle cx="414.1" cy="406.8" r="0.80" fill="#e8d8c0" opacity="0.89"/><circle cx="1147.5" cy="355.4" r="1.15" fill="#fff" opacity="0.99"/><circle cx="794.6" cy="758.4" r="0.55" fill="#dfe4f4" opacity="0.64"/><circle cx="1059.0" cy="360.6" r="0.55" fill="#fff" opacity="0.68"/><circle cx="506.7" cy="324.9" r="0.55" fill="#fff" opacity="0.64"/><circle cx="700.1" cy="749.2" r="0.55" fill="#fff" opacity="0.35"/><circle cx="437.2" cy="152.4" r="0.80" fill="#fff" opacity="0.69"/><circle cx="681.4" cy="760.8" r="1.15" fill="#fff" opacity="0.96"/><circle cx="701.4" cy="703.5" r="0.55" fill="#fff" opacity="0.42"/><circle cx="438.2" cy="601.4" r="0.55" fill="#fff" opacity="0.61"/><circle cx="1054.0" cy="425.7" r="1.15" fill="#fff" opacity="0.91"/><circle cx="1134.2" cy="265.2" r="0.80" fill="#dfe4f4" opacity="0.69"/><circle cx="552.8" cy="94.3" r="0.80" fill="#fff" opacity="0.71"/><circle cx="609.4" cy="769.0" r="0.55" fill="#fff" opacity="0.53"/><circle cx="994.5" cy="684.2" r="0.55" fill="#e8d8c0" opacity="0.66"/><circle cx="1117.4" cy="684.3" r="0.80" fill="#fff" opacity="0.61"/><circle cx="1005.0" cy="769.4" r="0.55" fill="#f0d8b8" opacity="0.38"/><circle cx="1130.9" cy="157.5" r="0.80" fill="#f0d8b8" opacity="0.81"/><circle cx="815.2" cy="108.2" r="0.80" fill="#fff" opacity="0.67"/><circle cx="497.1" cy="259.3" r="0.80" fill="#fff" opacity="0.81"/><circle cx="475.7" cy="293.8" r="1.15" fill="#f4e8d8" opacity="0.84"/><circle cx="408.9" cy="294.7" r="0.55" fill="#fff" opacity="0.69"/><circle cx="423.0" cy="373.2" r="0.80" fill="#fff" opacity="0.62"/><circle cx="902.2" cy="738.7" r="0.55" fill="#f4e8d8" opacity="0.36"/><circle cx="698.7" cy="84.8" r="0.55" fill="#fff" opacity="0.65"/><circle cx="555.1" cy="770.5" r="0.55" fill="#fff" opacity="0.64"/><circle cx="1068.9" cy="157.6" r="0.80" fill="#fff" opacity="0.78"/><circle cx="765.3" cy="728.2" r="0.55" fill="#e8d8c0" opacity="0.56"/><circle cx="441.8" cy="96.8" r="0.55" fill="#fff" opacity="0.50"/><circle cx="446.2" cy="360.0" r="1.15" fill="#fff" opacity="0.98"/><circle cx="486.0" cy="136.5" r="0.55" fill="#fff" opacity="0.42"/><circle cx="1103.8" cy="611.4" r="0.55" fill="#e8d8c0" opacity="0.58"/><circle cx="459.8" cy="137.5" r="0.55" fill="#dfe4f4" opacity="0.66"/><circle cx="1125.2" cy="227.7" r="0.55" fill="#f0d8b8" opacity="0.64"/><circle cx="447.6" cy="218.8" r="0.55" fill="#f4e8d8" opacity="0.56"/><circle cx="605.5" cy="761.9" r="0.55" fill="#fff" opacity="0.44"/><circle cx="918.9" cy="738.1" r="0.55" fill="#dfe4f4" opacity="0.60"/><circle cx="1089.3" cy="531.4" r="1.15" fill="#fff" opacity="0.80"/><circle cx="481.6" cy="589.5" r="0.55" fill="#f0d8b8" opacity="0.62"/><circle cx="771.6" cy="740.8" r="0.55" fill="#fff" opacity="0.63"/><circle cx="1047.8" cy="408.1" r="0.80" fill="#dfe4f4" opacity="0.78"/><circle cx="426.4" cy="473.4" r="0.55" fill="#fff" opacity="0.69"/><circle cx="1142.9" cy="268.6" r="0.55" fill="#e8d8c0" opacity="0.38"/><circle cx="747.2" cy="714.6" r="0.55" fill="#f0d8b8" opacity="0.54"/><circle cx="516.1" cy="709.5" r="0.55" fill="#e8d8c0" opacity="0.46"/><circle cx="476.5" cy="410.3" r="0.55" fill="#f0d8b8" opacity="0.35"/><circle cx="681.8" cy="704.3" r="0.55" fill="#dfe4f4" opacity="0.37"/><circle cx="1131.7" cy="495.2" r="1.15" fill="#f0d8b8" opacity="0.87"/><circle cx="405.8" cy="533.9" r="0.80" fill="#fff" opacity="0.70"/><circle cx="553.8" cy="88.1" r="0.55" fill="#fff" opacity="0.59"/><circle cx="424.6" cy="432.9" r="0.55" fill="#f0d8b8" opacity="0.49"/><circle cx="632.0" cy="758.7" r="0.55" fill="#f4e8d8" opacity="0.55"/><circle cx="712.0" cy="93.0" r="0.80" fill="#fff" opacity="0.84"/><circle cx="554.0" cy="84.2" r="1.15" fill="#f0d8b8" opacity="0.88"/><circle cx="469.0" cy="491.4" r="0.55" fill="#fff" opacity="0.62"/><circle cx="412.1" cy="472.7" r="0.80" fill="#fff" opacity="0.87"/><circle cx="831.2" cy="740.2" r="0.80" fill="#f4e8d8" opacity="0.65"/><circle cx="1096.1" cy="157.5" r="0.55" fill="#f0d8b8" opacity="0.63"/><circle cx="763.5" cy="118.0" r="1.15" fill="#fff" opacity="0.88"/><circle cx="866.9" cy="667.1" r="0.55" fill="#fff" opacity="0.63"/><circle cx="825.6" cy="109.7" r="1.15" fill="#f4e8d8" opacity="0.83"/><circle cx="493.4" cy="255.9" r="0.80" fill="#fff" opacity="0.87"/><circle cx="1064.8" cy="679.8" r="0.80" fill="#f4e8d8" opacity="0.80"/><circle cx="489.4" cy="506.9" r="0.55" fill="#f4e8d8" opacity="0.57"/><circle cx="535.3" cy="82.5" r="1.60" fill="#e8d8c0" opacity="1.00"/><circle cx="481.4" cy="171.5" r="0.55" fill="#e8d8c0" opacity="0.38"/><circle cx="431.5" cy="172.8" r="1.15" fill="#fff" opacity="0.86"/><circle cx="785.1" cy="118.6" r="0.55" fill="#f0d8b8" opacity="0.48"/><circle cx="503.3" cy="690.2" r="1.60" fill="#fff" opacity="1.00"/><circle cx="499.8" cy="710.6" r="0.55" fill="#f0d8b8" opacity="0.63"/><circle cx="1099.9" cy="126.6" r="0.55" fill="#fff" opacity="0.61"/><circle cx="1080.7" cy="405.0" r="0.55" fill="#e8d8c0" opacity="0.69"/><circle cx="428.7" cy="209.7" r="0.55" fill="#fff" opacity="0.68"/><circle cx="978.0" cy="114.6" r="0.80" fill="#e8d8c0" opacity="0.89"/><circle cx="1063.8" cy="154.5" r="1.60" fill="#fff" opacity="1.00"/><circle cx="1120.4" cy="291.0" r="0.55" fill="#f0d8b8" opacity="0.46"/><circle cx="635.8" cy="81.3" r="0.55" fill="#dfe4f4" opacity="0.40"/><circle cx="674.4" cy="114.0" r="0.55" fill="#fff" opacity="0.56"/><circle cx="417.7" cy="81.9" r="0.55" fill="#f4e8d8" opacity="0.39"/><circle cx="676.0" cy="669.9" r="0.55" fill="#f0d8b8" opacity="0.35"/><circle cx="472.9" cy="534.4" r="0.80" fill="#e8d8c0" opacity="0.83"/><circle cx="1010.5" cy="768.6" r="0.55" fill="#f4e8d8" opacity="0.64"/><circle cx="401.3" cy="123.8" r="0.55" fill="#fff" opacity="0.41"/><circle cx="444.8" cy="634.6" r="0.55" fill="#fff" opacity="0.54"/><circle cx="507.8" cy="222.1" r="0.55" fill="#fff" opacity="0.53"/><circle cx="871.1" cy="787.8" r="0.80" fill="#dfe4f4" opacity="0.74"/><circle cx="405.8" cy="681.2" r="0.80" fill="#fff" opacity="0.74"/><circle cx="1149.5" cy="266.1" r="0.80" fill="#fff" opacity="0.64"/><circle cx="1095.8" cy="751.3" r="0.55" fill="#fff" opacity="0.37"/><circle cx="1125.8" cy="234.5" r="1.15" fill="#f4e8d8" opacity="0.80"/><circle cx="1080.4" cy="679.3" r="0.55" fill="#f4e8d8" opacity="0.41"/><circle cx="1040.8" cy="736.2" r="1.60" fill="#f0d8b8" opacity="1.00"/><circle cx="1136.2" cy="414.3" r="0.80" fill="#f0d8b8" opacity="0.81"/><circle cx="576.6" cy="709.9" r="0.80" fill="#dfe4f4" opacity="0.72"/><circle cx="459.4" cy="728.5" r="0.55" fill="#fff" opacity="0.36"/><circle cx="1135.0" cy="578.9" r="0.55" fill="#fff" opacity="0.40"/><circle cx="1070.4" cy="127.0" r="0.80" fill="#e8d8c0" opacity="0.87"/><circle cx="481.4" cy="226.5" r="0.55" fill="#f0d8b8" opacity="0.36"/><circle cx="1085.2" cy="616.7" r="0.55" fill="#fff" opacity="0.61"/><circle cx="474.5" cy="619.2" r="0.55" fill="#e8d8c0" opacity="0.46"/><circle cx="1099.5" cy="114.5" r="0.80" fill="#f0d8b8" opacity="0.87"/><circle cx="1125.0" cy="438.7" r="0.80" fill="#fff" opacity="0.79"/><circle cx="993.6" cy="102.2" r="0.55" fill="#e8d8c0" opacity="0.38"/><circle cx="563.6" cy="693.9" r="0.55" fill="#fff" opacity="0.64"/><circle cx="441.5" cy="327.6" r="0.55" fill="#f0d8b8" opacity="0.59"/><circle cx="661.7" cy="672.3" r="0.55" fill="#f4e8d8" opacity="0.68"/><circle cx="1013.2" cy="748.1" r="0.55" fill="#fff" opacity="0.41"/><circle cx="1145.3" cy="479.6" r="0.55" fill="#fff" opacity="0.46"/><circle cx="1069.7" cy="141.4" r="1.15" fill="#fff" opacity="0.81"/><circle cx="1138.8" cy="529.1" r="1.15" fill="#dfe4f4" opacity="0.83"/><circle cx="748.0" cy="710.2" r="0.55" fill="#f4e8d8" opacity="0.42"/><circle cx="967.8" cy="668.5" r="0.55" fill="#fff" opacity="0.60"/><circle cx="1118.8" cy="264.2" r="1.15" fill="#fff" opacity="1.00"/><circle cx="1123.8" cy="152.4" r="0.55" fill="#f0d8b8" opacity="0.69"/><circle cx="1085.5" cy="279.9" r="1.15" fill="#fff" opacity="0.89"/><circle cx="507.5" cy="509.8" r="0.55" fill="#f0d8b8" opacity="0.61"/><circle cx="1061.9" cy="631.1" r="0.80" fill="#fff" opacity="0.86"/><circle cx="927.2" cy="717.1" r="0.55" fill="#fff" opacity="0.49"/><circle cx="908.1" cy="742.3" r="0.55" fill="#f0d8b8" opacity="0.58"/><circle cx="409.0" cy="672.3" r="1.15" fill="#f4e8d8" opacity="0.82"/><circle cx="988.1" cy="749.7" r="0.55" fill="#dfe4f4" opacity="0.39"/><circle cx="758.3" cy="91.5" r="0.80" fill="#f4e8d8" opacity="0.71"/><circle cx="709.2" cy="755.0" r="0.55" fill="#e8d8c0" opacity="0.59"/><circle cx="786.9" cy="744.1" r="0.80" fill="#fff" opacity="0.78"/><circle cx="443.5" cy="275.3" r="0.55" fill="#e8d8c0" opacity="0.35"/><circle cx="1088.5" cy="527.5" r="0.80" fill="#fff" opacity="0.77"/><circle cx="1106.9" cy="455.3" r="0.55" fill="#e8d8c0" opacity="0.63"/><circle cx="1099.0" cy="129.1" r="0.80" fill="#fff" opacity="0.66"/><circle cx="1124.9" cy="331.4" r="0.80" fill="#f0d8b8" opacity="0.85"/><circle cx="1139.2" cy="563.3" r="0.55" fill="#f0d8b8" opacity="0.63"/><circle cx="1098.5" cy="688.4" r="0.55" fill="#f4e8d8" opacity="0.64"/><circle cx="412.3" cy="88.2" r="1.15" fill="#f4e8d8" opacity="0.93"/><circle cx="917.7" cy="775.7" r="0.55" fill="#dfe4f4" opacity="0.67"/><circle cx="992.8" cy="677.2" r="0.55" fill="#dfe4f4" opacity="0.59"/><circle cx="460.0" cy="677.6" r="0.80" fill="#fff" opacity="0.64"/><circle cx="505.6" cy="431.1" r="0.55" fill="#fff" opacity="0.51"/><circle cx="1152.0" cy="561.3" r="0.55" fill="#fff" opacity="0.48"/><circle cx="422.4" cy="514.1" r="0.80" fill="#f4e8d8" opacity="0.88"/><circle cx="471.9" cy="549.2" r="0.55" fill="#dfe4f4" opacity="0.62"/><circle cx="817.1" cy="668.6" r="0.55" fill="#e8d8c0" opacity="0.64"/><circle cx="651.6" cy="780.8" r="0.80" fill="#fff" opacity="0.70"/><circle cx="431.1" cy="594.5" r="1.15" fill="#fff" opacity="0.91"/><circle cx="435.8" cy="665.2" r="0.55" fill="#fff" opacity="0.62"/><circle cx="993.6" cy="727.8" r="0.55" fill="#fff" opacity="0.57"/><circle cx="1059.1" cy="139.1" r="0.55" fill="#fff" opacity="0.57"/><circle cx="537.2" cy="106.3" r="0.80" fill="#fff" opacity="0.87"/><circle cx="411.1" cy="700.8" r="0.55" fill="#fff" opacity="0.46"/><circle cx="1102.3" cy="118.9" r="0.55" fill="#fff" opacity="0.36"/><circle cx="451.5" cy="564.1" r="0.55" fill="#fff" opacity="0.70"/><circle cx="1137.6" cy="418.5" r="0.55" fill="#fff" opacity="0.39"/><circle cx="755.6" cy="717.8" r="0.80" fill="#fff" opacity="0.73"/><circle cx="1126.7" cy="142.8" r="0.80" fill="#fff" opacity="0.64"/><circle cx="1094.0" cy="340.5" r="0.80" fill="#fff" opacity="0.81"/><circle cx="746.9" cy="743.8" r="0.55" fill="#fff" opacity="0.69"/><circle cx="425.0" cy="123.1" r="1.15" fill="#dfe4f4" opacity="0.94"/><circle cx="460.8" cy="301.5" r="0.80" fill="#f0d8b8" opacity="0.65"/><circle cx="638.5" cy="755.5" r="0.80" fill="#fff" opacity="0.74"/><circle cx="1110.6" cy="638.7" r="0.55" fill="#fff" opacity="0.45"/><circle cx="1054.0" cy="596.7" r="0.55" fill="#f0d8b8" opacity="0.40"/><circle cx="1068.0" cy="348.2" r="0.80" fill="#fff" opacity="0.78"/><circle cx="402.3" cy="267.3" r="0.55" fill="#f0d8b8" opacity="0.56"/><circle cx="1138.7" cy="300.3" r="0.55" fill="#fff" opacity="0.49"/><circle cx="1074.6" cy="710.2" r="0.55" fill="#dfe4f4" opacity="0.52"/><circle cx="470.2" cy="653.8" r="0.55" fill="#f4e8d8" opacity="0.55"/><circle cx="512.9" cy="111.8" r="1.60" fill="#f4e8d8" opacity="1.00"/><circle cx="1051.6" cy="344.6" r="0.55" fill="#f4e8d8" opacity="0.38"/><circle cx="791.1" cy="94.6" r="0.55" fill="#f0d8b8" opacity="0.70"/><circle cx="561.4" cy="739.0" r="0.55" fill="#e8d8c0" opacity="0.38"/><circle cx="1124.6" cy="260.8" r="0.55" fill="#fff" opacity="0.42"/><circle cx="685.0" cy="99.6" r="0.55" fill="#fff" opacity="0.48"/><circle cx="745.2" cy="754.4" r="1.15" fill="#dfe4f4" opacity="0.81"/><circle cx="881.5" cy="736.6" r="0.80" fill="#f4e8d8" opacity="0.63"/><circle cx="1119.3" cy="556.8" r="0.55" fill="#fff" opacity="0.51"/><circle cx="1108.2" cy="750.1" r="0.55" fill="#fff" opacity="0.54"/><circle cx="1029.8" cy="113.5" r="0.80" fill="#fff" opacity="0.81"/><circle cx="476.9" cy="306.2" r="0.55" fill="#fff" opacity="0.42"/><circle cx="494.2" cy="422.7" r="0.55" fill="#fff" opacity="0.43"/><circle cx="1087.6" cy="715.2" r="0.55" fill="#f0d8b8" opacity="0.67"/><circle cx="428.0" cy="740.5" r="0.55" fill="#f0d8b8" opacity="0.68"/><circle cx="985.5" cy="762.1" r="1.15" fill="#fff" opacity="0.88"/><circle cx="656.2" cy="666.0" r="0.55" fill="#fff" opacity="0.57"/><circle cx="1068.9" cy="392.5" r="0.55" fill="#fff" opacity="0.50"/><circle cx="639.9" cy="723.1" r="0.55" fill="#fff" opacity="0.69"/><circle cx="1095.8" cy="478.7" r="0.80" fill="#f0d8b8" opacity="0.64"/><circle cx="1095.7" cy="149.5" r="0.55" fill="#fff" opacity="0.66"/><circle cx="994.0" cy="751.9" r="0.55" fill="#fff" opacity="0.48"/><circle cx="1085.9" cy="235.4" r="0.55" fill="#fff" opacity="0.40"/><circle cx="1023.6" cy="713.2" r="0.80" fill="#fff" opacity="0.83"/><circle cx="450.3" cy="601.7" r="0.55" fill="#fff" opacity="0.60"/><circle cx="1111.2" cy="144.3" r="0.55" fill="#fff" opacity="0.62"/><circle cx="1055.9" cy="269.6" r="0.55" fill="#f4e8d8" opacity="0.64"/><circle cx="428.5" cy="580.0" r="0.55" fill="#f4e8d8" opacity="0.65"/><circle cx="1051.0" cy="308.5" r="0.80" fill="#f0d8b8" opacity="0.71"/><circle cx="1075.4" cy="287.6" r="0.55" fill="#e8d8c0" opacity="0.61"/><circle cx="804.5" cy="94.7" r="1.15" fill="#fff" opacity="0.84"/><circle cx="818.1" cy="760.2" r="0.55" fill="#fff" opacity="0.67"/><circle cx="547.5" cy="92.6" r="0.55" fill="#dfe4f4" opacity="0.55"/><circle cx="492.3" cy="709.7" r="0.55" fill="#fff" opacity="0.43"/><circle cx="1021.3" cy="747.6" r="0.55" fill="#f0d8b8" opacity="0.50"/><circle cx="853.7" cy="105.8" r="1.60" fill="#fff" opacity="1.00"/><circle cx="728.1" cy="778.6" r="0.80" fill="#f0d8b8" opacity="0.87"/><circle cx="1054.7" cy="552.1" r="0.55" fill="#fff" opacity="0.39"/><circle cx="453.0" cy="388.3" r="0.55" fill="#fff" opacity="0.36"/><circle cx="1150.1" cy="403.1" r="0.55" fill="#fff" opacity="0.69"/><circle cx="426.8" cy="536.8" r="0.55" fill="#f4e8d8" opacity="0.59"/><circle cx="427.9" cy="151.6" r="0.55" fill="#fff" opacity="0.35"/><circle cx="1115.1" cy="284.7" r="0.55" fill="#fff" opacity="0.58"/><circle cx="1092.7" cy="721.8" r="0.55" fill="#fff" opacity="0.56"/><circle cx="1065.8" cy="731.9" r="0.55" fill="#fff" opacity="0.45"/><circle cx="467.0" cy="469.0" r="0.80" fill="#dfe4f4" opacity="0.78"/><circle cx="1070.7" cy="296.2" r="0.55" fill="#fff" opacity="0.64"/><circle cx="840.8" cy="88.5" r="0.55" fill="#fff" opacity="0.65"/><circle cx="603.7" cy="705.4" r="0.55" fill="#fff" opacity="0.37"/><circle cx="1055.3" cy="393.3" r="0.55" fill="#e8d8c0" opacity="0.49"/><circle cx="792.2" cy="784.4" r="0.80" fill="#e8d8c0" opacity="0.88"/><circle cx="933.1" cy="731.3" r="0.55" fill="#fff" opacity="0.65"/><circle cx="489.2" cy="363.0" r="1.60" fill="#fff" opacity="1.00"/><circle cx="1056.4" cy="512.4" r="0.55" fill="#e8d8c0" opacity="0.51"/><circle cx="406.1" cy="611.0" r="1.60" fill="#e8d8c0" opacity="1.00"/><circle cx="467.0" cy="735.2" r="0.55" fill="#f0d8b8" opacity="0.65"/><circle cx="1131.1" cy="714.6" r="1.15" fill="#f4e8d8" opacity="0.81"/><circle cx="1092.2" cy="630.7" r="0.55" fill="#dfe4f4" opacity="0.70"/><circle cx="431.6" cy="561.5" r="0.55" fill="#fff" opacity="0.35"/><circle cx="639.9" cy="776.6" r="0.80" fill="#fff" opacity="0.75"/><circle cx="658.9" cy="746.0" r="0.55" fill="#fff" opacity="0.69"/><circle cx="879.0" cy="110.1" r="0.55" fill="#f4e8d8" opacity="0.63"/><circle cx="1089.7" cy="363.1" r="0.55" fill="#fff" opacity="0.36"/><circle cx="1149.8" cy="489.0" r="0.55" fill="#fff" opacity="0.39"/><circle cx="422.8" cy="134.2" r="1.15" fill="#e8d8c0" opacity="0.90"/><circle cx="447.6" cy="88.9" r="0.80" fill="#fff" opacity="0.70"/><circle cx="425.7" cy="527.6" r="0.80" fill="#fff" opacity="0.88"/><circle cx="690.6" cy="118.9" r="1.15" fill="#fff" opacity="0.92"/><circle cx="588.2" cy="111.3" r="1.15" fill="#f4e8d8" opacity="0.97"/><circle cx="405.6" cy="697.3" r="0.55" fill="#f4e8d8" opacity="0.50"/><circle cx="1122.0" cy="432.8" r="1.15" fill="#e8d8c0" opacity="0.85"/><circle cx="935.5" cy="96.0" r="0.80" fill="#fff" opacity="0.63"/><circle cx="1130.6" cy="287.0" r="0.55" fill="#dfe4f4" opacity="0.39"/><circle cx="1055.5" cy="319.1" r="0.80" fill="#e8d8c0" opacity="0.89"/><circle cx="427.2" cy="553.0" r="0.55" fill="#fff" opacity="0.40"/><circle cx="498.5" cy="219.8" r="0.55" fill="#dfe4f4" opacity="0.63"/><circle cx="733.9" cy="675.5" r="0.80" fill="#f4e8d8" opacity="0.65"/><circle cx="554.5" cy="691.2" r="0.80" fill="#f4e8d8" opacity="0.88"/><circle cx="1144.5" cy="460.7" r="0.55" fill="#fff" opacity="0.53"/><circle cx="1056.2" cy="167.4" r="0.55" fill="#f4e8d8" opacity="0.54"/><circle cx="422.6" cy="591.4" r="0.55" fill="#fff" opacity="0.36"/><circle cx="465.6" cy="206.1" r="0.80" fill="#fff" opacity="0.70"/><circle cx="1070.4" cy="128.5" r="1.15" fill="#f0d8b8" opacity="0.96"/><circle cx="495.7" cy="590.3" r="0.55" fill="#e8d8c0" opacity="0.49"/><circle cx="983.0" cy="708.5" r="0.80" fill="#f4e8d8" opacity="0.64"/><circle cx="1074.6" cy="98.0" r="0.80" fill="#f0d8b8" opacity="0.74"/><circle cx="701.8" cy="725.1" r="0.55" fill="#f4e8d8" opacity="0.45"/><circle cx="1086.4" cy="602.6" r="0.80" fill="#fff" opacity="0.61"/><circle cx="873.7" cy="750.4" r="0.55" fill="#e8d8c0" opacity="0.43"/><circle cx="663.1" cy="80.7" r="0.80" fill="#f4e8d8" opacity="0.83"/><circle cx="1077.7" cy="703.1" r="0.55" fill="#fff" opacity="0.59"/><circle cx="912.5" cy="106.4" r="0.55" fill="#f4e8d8" opacity="0.62"/><circle cx="962.4" cy="670.1" r="0.55" fill="#e8d8c0" opacity="0.38"/><circle cx="1116.2" cy="667.5" r="0.55" fill="#fff" opacity="0.41"/><circle cx="1129.0" cy="533.9" r="0.55" fill="#fff" opacity="0.44"/><circle cx="470.5" cy="533.2" r="0.55" fill="#e8d8c0" opacity="0.59"/><circle cx="735.2" cy="746.3" r="0.55" fill="#fff" opacity="0.45"/><circle cx="507.6" cy="481.0" r="0.55" fill="#dfe4f4" opacity="0.64"/><circle cx="719.9" cy="750.1" r="0.80" fill="#e8d8c0" opacity="0.65"/><circle cx="410.3" cy="426.5" r="0.55" fill="#f4e8d8" opacity="0.66"/><circle cx="454.9" cy="87.7" r="1.60" fill="#f0d8b8" opacity="1.00"/><circle cx="1119.5" cy="427.7" r="0.80" fill="#f4e8d8" opacity="0.70"/><circle cx="1091.6" cy="538.9" r="0.80" fill="#fff" opacity="0.88"/><circle cx="459.7" cy="612.2" r="0.55" fill="#fff" opacity="0.49"/><circle cx="880.2" cy="682.2" r="1.15" fill="#f0d8b8" opacity="0.83"/><circle cx="1091.7" cy="676.5" r="0.55" fill="#fff" opacity="0.37"/><circle cx="1080.8" cy="752.8" r="0.55" fill="#fff" opacity="0.52"/><circle cx="1148.7" cy="509.1" r="0.80" fill="#fff" opacity="0.64"/><circle cx="1129.3" cy="143.8" r="0.55" fill="#fff" opacity="0.50"/><circle cx="425.0" cy="514.8" r="0.80" fill="#fff" opacity="0.75"/><circle cx="901.2" cy="668.2" r="1.15" fill="#f4e8d8" opacity="0.83"/><circle cx="404.1" cy="652.6" r="0.80" fill="#e8d8c0" opacity="0.77"/><circle cx="464.9" cy="310.5" r="0.55" fill="#fff" opacity="0.69"/><circle cx="1123.3" cy="521.3" r="0.80" fill="#fff" opacity="0.62"/><circle cx="503.8" cy="696.1" r="0.55" fill="#f0d8b8" opacity="0.57"/><circle cx="536.6" cy="713.7" r="0.55" fill="#f0d8b8" opacity="0.39"/><circle cx="1083.8" cy="483.6" r="0.80" fill="#f0d8b8" opacity="0.80"/><circle cx="731.1" cy="694.8" r="0.55" fill="#f0d8b8" opacity="0.60"/><circle cx="1113.0" cy="526.1" r="1.15" fill="#e8d8c0" opacity="0.90"/><circle cx="529.6" cy="763.5" r="0.55" fill="#fff" opacity="0.62"/><circle cx="704.7" cy="113.6" r="0.55" fill="#fff" opacity="0.60"/><circle cx="502.8" cy="726.9" r="0.55" fill="#fff" opacity="0.70"/><circle cx="823.8" cy="733.3" r="0.80" fill="#fff" opacity="0.65"/><circle cx="953.8" cy="88.3" r="0.55" fill="#dfe4f4" opacity="0.43"/><circle cx="954.7" cy="755.0" r="0.80" fill="#dfe4f4" opacity="0.61"/><circle cx="426.6" cy="728.1" r="0.55" fill="#fff" opacity="0.47"/><circle cx="736.5" cy="676.8" r="0.55" fill="#fff" opacity="0.39"/><circle cx="1100.3" cy="702.1" r="0.80" fill="#dfe4f4" opacity="0.85"/><circle cx="1058.4" cy="463.4" r="0.80" fill="#e8d8c0" opacity="0.84"/><circle cx="411.4" cy="323.8" r="0.55" fill="#f0d8b8" opacity="0.53"/><circle cx="424.8" cy="676.1" r="0.55" fill="#fff" opacity="0.57"/><circle cx="1056.6" cy="514.9" r="0.55" fill="#fff" opacity="0.47"/><circle cx="1105.0" cy="303.8" r="0.55" fill="#fff" opacity="0.52"/><circle cx="416.4" cy="407.1" r="1.60" fill="#fff" opacity="1.00"/><circle cx="508.9" cy="353.7" r="0.55" fill="#f4e8d8" opacity="0.70"/><circle cx="426.6" cy="479.2" r="0.80" fill="#f0d8b8" opacity="0.86"/><circle cx="475.3" cy="643.8" r="0.80" fill="#f0d8b8" opacity="0.67"/><circle cx="1105.9" cy="565.1" r="0.55" fill="#fff" opacity="0.62"/><circle cx="673.4" cy="687.5" r="0.55" fill="#fff" opacity="0.66"/><circle cx="1143.3" cy="422.8" r="0.55" fill="#fff" opacity="0.44"/><circle cx="1149.5" cy="187.4" r="0.55" fill="#fff" opacity="0.66"/><circle cx="1105.0" cy="322.4" r="1.15" fill="#fff" opacity="0.92"/><circle cx="1129.9" cy="571.5" r="0.80" fill="#f0d8b8" opacity="0.88"/><circle cx="764.9" cy="720.2" r="0.55" fill="#fff" opacity="0.44"/><circle cx="578.9" cy="94.3" r="0.55" fill="#dfe4f4" opacity="0.51"/><circle cx="475.8" cy="252.1" r="0.55" fill="#fff" opacity="0.40"/><circle cx="460.6" cy="656.3" r="0.80" fill="#fff" opacity="0.70"/><circle cx="404.8" cy="272.7" r="0.80" fill="#f4e8d8" opacity="0.60"/><circle cx="1094.1" cy="231.1" r="0.55" fill="#fff" opacity="0.61"/><circle cx="1049.3" cy="646.9" r="0.55" fill="#f0d8b8" opacity="0.56"/><circle cx="411.2" cy="738.8" r="0.55" fill="#fff" opacity="0.70"/><circle cx="415.0" cy="229.9" r="0.55" fill="#f4e8d8" opacity="0.64"/><circle cx="981.2" cy="775.9" r="0.55" fill="#dfe4f4" opacity="0.45"/><circle cx="475.9" cy="656.1" r="1.60" fill="#fff" opacity="1.00"/><circle cx="1144.1" cy="242.5" r="0.80" fill="#fff" opacity="0.63"/><circle cx="1079.0" cy="700.0" r="0.80" fill="#dfe4f4" opacity="0.83"/><circle cx="422.8" cy="634.0" r="0.55" fill="#e8d8c0" opacity="0.69"/><circle cx="561.1" cy="729.6" r="1.15" fill="#fff" opacity="0.88"/><circle cx="644.2" cy="723.3" r="0.55" fill="#fff" opacity="0.61"/><circle cx="1006.9" cy="730.5" r="0.80" fill="#fff" opacity="0.71"/><circle cx="1091.3" cy="752.8" r="0.80" fill="#f4e8d8" opacity="0.67"/><circle cx="416.6" cy="585.0" r="0.55" fill="#f4e8d8" opacity="0.47"/><circle cx="518.7" cy="694.5" r="0.80" fill="#f0d8b8" opacity="0.68"/><circle cx="503.5" cy="293.7" r="0.55" fill="#f0d8b8" opacity="0.35"/><circle cx="1070.1" cy="195.1" r="0.80" fill="#e8d8c0" opacity="0.78"/><circle cx="560.3" cy="117.1" r="0.80" fill="#fff" opacity="0.86"/><circle cx="1049.4" cy="209.8" r="0.80" fill="#f4e8d8" opacity="0.90"/><circle cx="515.1" cy="729.8" r="0.55" fill="#dfe4f4" opacity="0.46"/><circle cx="468.8" cy="321.8" r="1.15" fill="#f4e8d8" opacity="0.94"/><circle cx="1136.7" cy="103.4" r="0.55" fill="#fff" opacity="0.63"/><circle cx="412.5" cy="176.0" r="0.55" fill="#fff" opacity="0.55"/><circle cx="479.8" cy="94.2" r="1.60" fill="#f4e8d8" opacity="1.00"/><circle cx="449.5" cy="158.6" r="1.15" fill="#dfe4f4" opacity="0.99"/><circle cx="485.4" cy="331.7" r="0.55" fill="#f4e8d8" opacity="0.67"/><circle cx="1129.8" cy="687.5" r="1.60" fill="#fff" opacity="1.00"/><circle cx="452.8" cy="110.8" r="0.55" fill="#dfe4f4" opacity="0.49"/><circle cx="1115.9" cy="270.3" r="0.55" fill="#e8d8c0" opacity="0.36"/><circle cx="919.4" cy="779.4" r="0.80" fill="#e8d8c0" opacity="0.82"/><circle cx="972.5" cy="707.8" r="0.80" fill="#fff" opacity="0.87"/><circle cx="404.9" cy="512.8" r="1.15" fill="#dfe4f4" opacity="0.85"/><circle cx="466.2" cy="522.0" r="0.55" fill="#e8d8c0" opacity="0.60"/><circle cx="638.0" cy="771.8" r="0.55" fill="#f0d8b8" opacity="0.61"/><circle cx="1053.9" cy="332.9" r="0.55" fill="#f4e8d8" opacity="0.69"/><circle cx="1083.5" cy="417.0" r="0.80" fill="#e8d8c0" opacity="0.76"/><circle cx="450.5" cy="619.2" r="0.55" fill="#fff" opacity="0.42"/><circle cx="530.4" cy="665.2" r="0.55" fill="#f0d8b8" opacity="0.57"/><circle cx="1084.8" cy="309.2" r="0.55" fill="#e8d8c0" opacity="0.65"/><circle cx="493.4" cy="189.5" r="0.55" fill="#f4e8d8" opacity="0.39"/><circle cx="405.4" cy="172.9" r="0.55" fill="#dfe4f4" opacity="0.58"/><circle cx="687.2" cy="92.6" r="0.55" fill="#fff" opacity="0.55"/><circle cx="810.0" cy="732.9" r="0.55" fill="#e8d8c0" opacity="0.44"/><circle cx="469.6" cy="532.9" r="0.80" fill="#e8d8c0" opacity="0.66"/><circle cx="1120.7" cy="286.8" r="0.80" fill="#fff" opacity="0.88"/><circle cx="1095.5" cy="216.4" r="1.60" fill="#fff" opacity="1.00"/><circle cx="553.5" cy="692.4" r="0.55" fill="#e8d8c0" opacity="0.51"/><circle cx="1077.9" cy="619.0" r="0.55" fill="#e8d8c0" opacity="0.56"/><circle cx="1103.2" cy="579.1" r="0.55" fill="#fff" opacity="0.70"/><circle cx="1069.7" cy="393.2" r="0.55" fill="#f0d8b8" opacity="0.53"/><circle cx="408.1" cy="245.5" r="0.55" fill="#fff" opacity="0.54"/><circle cx="468.6" cy="683.7" r="0.55" fill="#e8d8c0" opacity="0.36"/><circle cx="467.3" cy="616.4" r="0.55" fill="#fff" opacity="0.37"/><circle cx="1049.1" cy="471.9" r="0.80" fill="#fff" opacity="0.85"/><circle cx="1150.6" cy="661.6" r="0.80" fill="#f4e8d8" opacity="0.64"/><circle cx="1066.2" cy="564.9" r="0.55" fill="#e8d8c0" opacity="0.44"/><circle cx="1003.3" cy="689.9" r="0.55" fill="#fff" opacity="0.42"/><circle cx="1101.3" cy="547.3" r="0.80" fill="#f0d8b8" opacity="0.64"/><circle cx="948.7" cy="86.1" r="0.55" fill="#f0d8b8" opacity="0.68"/><circle cx="1103.1" cy="396.8" r="0.80" fill="#e8d8c0" opacity="0.62"/><circle cx="503.9" cy="706.5" r="0.80" fill="#fff" opacity="0.75"/><circle cx="1093.7" cy="479.5" r="0.80" fill="#fff" opacity="0.75"/><circle cx="469.7" cy="115.8" r="0.55" fill="#fff" opacity="0.64"/><circle cx="1081.3" cy="568.4" r="0.55" fill="#fff" opacity="0.37"/><circle cx="501.2" cy="194.0" r="0.55" fill="#f0d8b8" opacity="0.62"/><circle cx="1085.8" cy="311.0" r="0.80" fill="#f0d8b8" opacity="0.65"/><circle cx="1132.6" cy="313.3" r="0.55" fill="#fff" opacity="0.45"/><circle cx="486.9" cy="669.9" r="0.55" fill="#fff" opacity="0.67"/><circle cx="1106.5" cy="454.8" r="0.55" fill="#f0d8b8" opacity="0.47"/><circle cx="987.9" cy="713.2" r="1.15" fill="#f4e8d8" opacity="0.84"/><circle cx="1049.9" cy="505.6" r="0.55" fill="#fff" opacity="0.38"/><circle cx="975.6" cy="723.8" r="0.55" fill="#dfe4f4" opacity="0.45"/><circle cx="850.7" cy="768.8" r="0.55" fill="#fff" opacity="0.68"/><circle cx="483.3" cy="672.4" r="0.80" fill="#e8d8c0" opacity="0.82"/><circle cx="472.8" cy="472.7" r="0.80" fill="#e8d8c0" opacity="0.78"/><circle cx="428.0" cy="108.2" r="0.55" fill="#fff" opacity="0.49"/><circle cx="500.1" cy="491.5" r="0.55" fill="#fff" opacity="0.48"/><circle cx="404.7" cy="539.1" r="0.80" fill="#f4e8d8" opacity="0.69"/><circle cx="471.6" cy="705.9" r="0.55" fill="#dfe4f4" opacity="0.52"/><circle cx="432.6" cy="262.4" r="1.15" fill="#dfe4f4" opacity="0.86"/><circle cx="581.2" cy="700.5" r="0.55" fill="#fff" opacity="0.66"/><circle cx="480.4" cy="118.2" r="0.80" fill="#fff" opacity="0.81"/><circle cx="599.4" cy="102.0" r="0.55" fill="#f4e8d8" opacity="0.53"/><circle cx="464.1" cy="620.5" r="0.55" fill="#f4e8d8" opacity="0.41"/><circle cx="1107.2" cy="373.3" r="0.55" fill="#fff" opacity="0.38"/><circle cx="1095.6" cy="568.5" r="0.80" fill="#fff" opacity="0.62"/><circle cx="1083.0" cy="615.0" r="0.80" fill="#fff" opacity="0.66"/><circle cx="438.8" cy="340.3" r="0.55" fill="#f4e8d8" opacity="0.58"/><circle cx="440.6" cy="411.9" r="0.80" fill="#fff" opacity="0.80"/><circle cx="727.9" cy="667.5" r="0.80" fill="#f4e8d8" opacity="0.86"/><circle cx="452.1" cy="637.6" r="0.80" fill="#f0d8b8" opacity="0.83"/><circle cx="771.0" cy="726.6" r="0.80" fill="#e8d8c0" opacity="0.81"/><circle cx="1113.0" cy="242.6" r="0.80" fill="#fff" opacity="0.84"/><circle cx="847.7" cy="675.4" r="0.80" fill="#e8d8c0" opacity="0.60"/><circle cx="854.5" cy="757.1" r="0.80" fill="#e8d8c0" opacity="0.74"/><circle cx="666.6" cy="681.3" r="0.55" fill="#fff" opacity="0.45"/><circle cx="1146.3" cy="213.3" r="1.15" fill="#dfe4f4" opacity="0.88"/><circle cx="913.9" cy="109.6" r="0.80" fill="#f4e8d8" opacity="0.66"/><circle cx="1013.7" cy="708.0" r="1.15" fill="#f4e8d8" opacity="0.86"/><circle cx="1118.8" cy="440.8" r="1.60" fill="#fff" opacity="1.00"/><circle cx="694.6" cy="86.4" r="0.80" fill="#fff" opacity="0.63"/><circle cx="476.8" cy="473.5" r="0.80" fill="#e8d8c0" opacity="0.75"/><circle cx="502.4" cy="616.4" r="0.55" fill="#dfe4f4" opacity="0.50"/><circle cx="1120.3" cy="337.6" r="0.80" fill="#e8d8c0" opacity="0.79"/><circle cx="1105.3" cy="655.8" r="0.55" fill="#e8d8c0" opacity="0.58"/><circle cx="674.2" cy="775.1" r="0.55" fill="#fff" opacity="0.64"/><circle cx="490.4" cy="348.5" r="0.55" fill="#fff" opacity="0.53"/><circle cx="427.4" cy="311.5" r="0.55" fill="#f4e8d8" opacity="0.68"/><circle cx="834.2" cy="113.2" r="0.55" fill="#fff" opacity="0.61"/><circle cx="1138.6" cy="526.6" r="0.55" fill="#fff" opacity="0.62"/><circle cx="716.9" cy="776.4" r="0.80" fill="#fff" opacity="0.84"/><circle cx="1132.9" cy="336.5" r="1.15" fill="#f0d8b8" opacity="0.86"/><circle cx="832.9" cy="668.0" r="0.80" fill="#fff" opacity="0.70"/><circle cx="447.3" cy="299.3" r="0.55" fill="#fff" opacity="0.59"/><circle cx="842.0" cy="771.7" r="0.80" fill="#fff" opacity="0.71"/><circle cx="1109.7" cy="220.5" r="0.55" fill="#fff" opacity="0.50"/><circle cx="1096.3" cy="523.4" r="0.55" fill="#fff" opacity="0.49"/><circle cx="1090.0" cy="456.9" r="0.55" fill="#f4e8d8" opacity="0.57"/><circle cx="738.7" cy="88.4" r="0.55" fill="#f4e8d8" opacity="0.59"/><circle cx="666.6" cy="749.2" r="0.55" fill="#fff" opacity="0.44"/><circle cx="1058.6" cy="148.6" r="0.55" fill="#f0d8b8" opacity="0.64"/><circle cx="1127.4" cy="531.3" r="0.80" fill="#e8d8c0" opacity="0.83"/><circle cx="1050.6" cy="587.1" r="0.55" fill="#e8d8c0" opacity="0.61"/><circle cx="903.7" cy="721.9" r="0.55" fill="#fff" opacity="0.47"/><circle cx="1095.3" cy="127.6" r="0.55" fill="#fff" opacity="0.55"/><circle cx="776.9" cy="719.6" r="1.15" fill="#f0d8b8" opacity="0.95"/><circle cx="1099.6" cy="351.2" r="0.55" fill="#fff" opacity="0.58"/><circle cx="689.6" cy="718.1" r="0.80" fill="#dfe4f4" opacity="0.83"/><circle cx="471.5" cy="561.3" r="1.60" fill="#f0d8b8" opacity="1.00"/><circle cx="460.1" cy="96.6" r="0.55" fill="#f4e8d8" opacity="0.39"/><circle cx="779.0" cy="775.8" r="0.55" fill="#fff" opacity="0.56"/><circle cx="430.7" cy="669.1" r="0.55" fill="#fff" opacity="0.43"/><circle cx="612.6" cy="773.4" r="0.55" fill="#fff" opacity="0.60"/><circle cx="985.3" cy="100.2" r="0.55" fill="#fff" opacity="0.50"/><circle cx="1117.8" cy="274.9" r="0.55" fill="#e8d8c0" opacity="0.39"/><circle cx="570.9" cy="697.8" r="1.60" fill="#f0d8b8" opacity="1.00"/><circle cx="724.9" cy="770.1" r="1.15" fill="#fff" opacity="0.92"/><circle cx="1131.7" cy="612.3" r="1.15" fill="#fff" opacity="0.98"/><circle cx="861.4" cy="91.2" r="0.55" fill="#f0d8b8" opacity="0.50"/><circle cx="1049.5" cy="594.1" r="0.80" fill="#f4e8d8" opacity="0.68"/><circle cx="480.1" cy="606.4" r="0.80" fill="#fff" opacity="0.73"/><circle cx="477.7" cy="156.0" r="0.55" fill="#e8d8c0" opacity="0.62"/><circle cx="1105.1" cy="217.5" r="0.55" fill="#dfe4f4" opacity="0.64"/><circle cx="410.7" cy="232.4" r="0.55" fill="#fff" opacity="0.48"/><circle cx="465.6" cy="635.6" r="0.55" fill="#fff" opacity="0.55"/><circle cx="978.5" cy="723.7" r="0.55" fill="#f4e8d8" opacity="0.42"/><circle cx="451.7" cy="595.8" r="0.55" fill="#e8d8c0" opacity="0.51"/><circle cx="890.6" cy="693.7" r="1.60" fill="#fff" opacity="1.00"/><circle cx="1083.7" cy="506.5" r="0.55" fill="#fff" opacity="0.43"/><circle cx="404.7" cy="483.0" r="0.80" fill="#fff" opacity="0.67"/><circle cx="957.9" cy="107.3" r="0.55" fill="#f0d8b8" opacity="0.69"/><circle cx="401.7" cy="412.2" r="0.55" fill="#fff" opacity="0.68"/><circle cx="983.3" cy="111.5" r="0.55" fill="#e8d8c0" opacity="0.55"/><circle cx="414.7" cy="619.1" r="0.55" fill="#fff" opacity="0.69"/><circle cx="473.5" cy="182.0" r="0.55" fill="#f4e8d8" opacity="0.57"/><circle cx="480.5" cy="640.3" r="1.15" fill="#fff" opacity="0.98"/><circle cx="455.2" cy="101.2" r="0.80" fill="#dfe4f4" opacity="0.63"/><circle cx="441.7" cy="468.4" r="0.55" fill="#fff" opacity="0.49"/><circle cx="905.5" cy="780.1" r="0.55" fill="#dfe4f4" opacity="0.38"/><circle cx="949.4" cy="685.0" r="0.80" fill="#f4e8d8" opacity="0.63"/><circle cx="433.7" cy="566.2" r="0.80" fill="#e8d8c0" opacity="0.66"/><circle cx="1089.2" cy="601.7" r="0.80" fill="#f0d8b8" opacity="0.87"/><circle cx="445.2" cy="599.2" r="0.80" fill="#e8d8c0" opacity="0.64"/><circle cx="1002.6" cy="119.0" r="0.55" fill="#f4e8d8" opacity="0.45"/><circle cx="733.6" cy="778.4" r="0.80" fill="#f0d8b8" opacity="0.88"/><circle cx="1004.5" cy="89.4" r="0.55" fill="#dfe4f4" opacity="0.47"/><circle cx="1066.6" cy="735.7" r="0.55" fill="#f0d8b8" opacity="0.62"/><circle cx="460.5" cy="194.8" r="0.55" fill="#e8d8c0" opacity="0.65"/><circle cx="804.5" cy="767.5" r="0.55" fill="#fff" opacity="0.54"/><circle cx="1089.9" cy="743.2" r="0.55" fill="#fff" opacity="0.62"/><circle cx="468.3" cy="231.2" r="0.55" fill="#fff" opacity="0.67"/><circle cx="489.9" cy="754.7" r="0.55" fill="#fff" opacity="0.56"/><circle cx="594.1" cy="99.7" r="0.80" fill="#f4e8d8" opacity="0.66"/><circle cx="453.1" cy="128.4" r="0.55" fill="#fff" opacity="0.38"/><circle cx="451.3" cy="90.4" r="0.55" fill="#fff" opacity="0.40"/><circle cx="784.2" cy="705.0" r="1.15" fill="#fff" opacity="0.89"/><circle cx="1144.0" cy="705.2" r="0.80" fill="#f4e8d8" opacity="0.74"/><circle cx="1026.0" cy="101.9" r="0.80" fill="#f0d8b8" opacity="0.67"/><circle cx="468.2" cy="637.1" r="0.80" fill="#f4e8d8" opacity="0.69"/><circle cx="449.7" cy="90.6" r="0.80" fill="#f4e8d8" opacity="0.64"/><circle cx="504.9" cy="641.0" r="0.55" fill="#dfe4f4" opacity="0.48"/><circle cx="899.1" cy="701.2" r="1.15" fill="#f0d8b8" opacity="0.83"/><circle cx="755.3" cy="699.2" r="0.55" fill="#f0d8b8" opacity="0.58"/><circle cx="483.5" cy="475.4" r="0.55" fill="#e8d8c0" opacity="0.49"/><circle cx="489.9" cy="128.3" r="0.55" fill="#f4e8d8" opacity="0.51"/><circle cx="823.7" cy="699.6" r="1.15" fill="#fff" opacity="0.97"/><circle cx="446.0" cy="387.5" r="0.55" fill="#dfe4f4" opacity="0.53"/><circle cx="1050.4" cy="231.2" r="0.55" fill="#e8d8c0" opacity="0.44"/><circle cx="474.5" cy="279.8" r="0.80" fill="#fff" opacity="0.62"/><circle cx="1140.1" cy="422.9" r="0.55" fill="#fff" opacity="0.35"/><circle cx="1010.5" cy="722.7" r="0.80" fill="#fff" opacity="0.81"/><circle cx="1004.5" cy="753.3" r="0.80" fill="#f4e8d8" opacity="0.86"/><circle cx="926.5" cy="91.1" r="0.55" fill="#e8d8c0" opacity="0.60"/><circle cx="563.9" cy="105.6" r="0.55" fill="#fff" opacity="0.40"/><circle cx="419.8" cy="197.6" r="0.55" fill="#fff" opacity="0.52"/><circle cx="1113.2" cy="430.4" r="1.60" fill="#dfe4f4" opacity="1.00"/><circle cx="1081.4" cy="217.0" r="0.55" fill="#f0d8b8" opacity="0.46"/><circle cx="1122.9" cy="309.1" r="0.55" fill="#fff" opacity="0.47"/><circle cx="713.4" cy="728.2" r="1.60" fill="#fff" opacity="1.00"/><circle cx="837.6" cy="711.2" r="0.55" fill="#fff" opacity="0.43"/><circle cx="461.2" cy="663.4" r="0.80" fill="#dfe4f4" opacity="0.68"/><circle cx="897.9" cy="692.5" r="1.15" fill="#fff" opacity="0.85"/><circle cx="707.2" cy="116.7" r="1.15" fill="#fff" opacity="0.82"/><circle cx="1079.9" cy="130.2" r="0.80" fill="#fff" opacity="0.65"/><circle cx="488.6" cy="253.5" r="0.80" fill="#f0d8b8" opacity="0.78"/><circle cx="687.9" cy="691.9" r="1.15" fill="#e8d8c0" opacity="0.93"/><circle cx="1001.5" cy="86.8" r="0.55" fill="#fff" opacity="0.59"/><circle cx="1118.9" cy="713.5" r="0.55" fill="#fff" opacity="0.46"/><circle cx="1135.6" cy="143.3" r="1.60" fill="#dfe4f4" opacity="1.00"/><circle cx="708.2" cy="764.7" r="1.15" fill="#fff" opacity="0.85"/><circle cx="1150.3" cy="535.5" r="0.80" fill="#dfe4f4" opacity="0.63"/><circle cx="503.1" cy="369.2" r="0.55" fill="#dfe4f4" opacity="0.38"/><circle cx="976.9" cy="112.5" r="1.15" fill="#e8d8c0" opacity="0.92"/><circle cx="453.6" cy="83.4" r="0.55" fill="#fff" opacity="0.59"/><circle cx="1077.4" cy="639.1" r="0.55" fill="#fff" opacity="0.36"/><circle cx="595.1" cy="119.1" r="0.55" fill="#fff" opacity="0.41"/><circle cx="448.6" cy="117.3" r="1.60" fill="#fff" opacity="1.00"/><circle cx="542.5" cy="741.4" r="0.55" fill="#fff" opacity="0.37"/><circle cx="622.7" cy="91.8" r="0.55" fill="#e8d8c0" opacity="0.38"/><circle cx="471.8" cy="497.4" r="0.55" fill="#f0d8b8" opacity="0.60"/><circle cx="868.5" cy="667.3" r="0.55" fill="#fff" opacity="0.50"/><circle cx="482.0" cy="531.4" r="0.55" fill="#e8d8c0" opacity="0.44"/><circle cx="443.9" cy="242.9" r="0.55" fill="#fff" opacity="0.53"/><circle cx="862.7" cy="722.1" r="0.55" fill="#fff" opacity="0.46"/><circle cx="1075.8" cy="173.4" r="0.55" fill="#f4e8d8" opacity="0.51"/><circle cx="1121.0" cy="645.6" r="0.55" fill="#fff" opacity="0.46"/><circle cx="585.1" cy="101.5" r="0.55" fill="#fff" opacity="0.62"/><circle cx="453.6" cy="355.6" r="0.55" fill="#fff" opacity="0.44"/><circle cx="1041.1" cy="747.9" r="0.55" fill="#dfe4f4" opacity="0.60"/><circle cx="736.6" cy="740.4" r="1.15" fill="#fff" opacity="0.92"/><circle cx="1093.8" cy="174.7" r="0.80" fill="#dfe4f4" opacity="0.88"/><circle cx="497.8" cy="411.7" r="0.55" fill="#fff" opacity="0.45"/><circle cx="424.9" cy="727.8" r="0.80" fill="#fff" opacity="0.76"/><circle cx="454.1" cy="196.8" r="0.55" fill="#fff" opacity="0.64"/><circle cx="673.2" cy="714.5" r="0.55" fill="#fff" opacity="0.54"/><circle cx="1070.7" cy="723.8" r="0.55" fill="#dfe4f4" opacity="0.68"/><circle cx="1088.6" cy="429.6" r="0.80" fill="#f0d8b8" opacity="0.75"/><circle cx="753.4" cy="785.3" r="0.55" fill="#f4e8d8" opacity="0.65"/><circle cx="896.4" cy="120.1" r="0.55" fill="#f4e8d8" opacity="0.43"/><circle cx="408.8" cy="623.6" r="0.55" fill="#f4e8d8" opacity="0.66"/><circle cx="1062.7" cy="756.1" r="0.55" fill="#e8d8c0" opacity="0.57"/><circle cx="571.6" cy="727.6" r="0.55" fill="#dfe4f4" opacity="0.57"/><circle cx="1091.6" cy="652.6" r="1.60" fill="#fff" opacity="1.00"/><circle cx="442.2" cy="717.9" r="0.55" fill="#f0d8b8" opacity="0.46"/><circle cx="505.5" cy="748.0" r="0.80" fill="#fff" opacity="0.80"/><circle cx="1085.2" cy="645.0" r="0.80" fill="#f4e8d8" opacity="0.89"/><circle cx="963.4" cy="676.2" r="0.80" fill="#fff" opacity="0.71"/><circle cx="476.4" cy="312.9" r="0.55" fill="#fff" opacity="0.63"/><circle cx="774.9" cy="117.4" r="0.80" fill="#f4e8d8" opacity="0.79"/><circle cx="1003.6" cy="759.3" r="0.55" fill="#dfe4f4" opacity="0.57"/><circle cx="754.3" cy="720.6" r="0.80" fill="#f0d8b8" opacity="0.69"/><circle cx="665.6" cy="731.2" r="0.55" fill="#dfe4f4" opacity="0.70"/><circle cx="452.4" cy="397.6" r="0.55" fill="#fff" opacity="0.68"/><circle cx="673.8" cy="762.6" r="0.80" fill="#dfe4f4" opacity="0.64"/><circle cx="427.2" cy="500.7" r="0.55" fill="#e8d8c0" opacity="0.60"/><circle cx="1151.0" cy="210.9" r="0.55" fill="#fff" opacity="0.53"/><circle cx="565.5" cy="708.8" r="1.60" fill="#e8d8c0" opacity="1.00"/><circle cx="458.8" cy="376.8" r="0.55" fill="#dfe4f4" opacity="0.70"/><circle cx="538.7" cy="728.1" r="0.55" fill="#f0d8b8" opacity="0.62"/><circle cx="828.4" cy="118.0" r="0.55" fill="#dfe4f4" opacity="0.53"/><circle cx="730.1" cy="101.7" r="0.55" fill="#dfe4f4" opacity="0.59"/><circle cx="470.4" cy="84.0" r="0.55" fill="#fff" opacity="0.60"/><circle cx="575.3" cy="665.2" r="0.55" fill="#f0d8b8" opacity="0.41"/><circle cx="605.7" cy="676.9" r="1.15" fill="#fff" opacity="0.81"/><circle cx="453.3" cy="647.4" r="0.80" fill="#e8d8c0" opacity="0.64"/><circle cx="572.0" cy="698.9" r="0.55" fill="#f4e8d8" opacity="0.50"/><circle cx="464.8" cy="217.5" r="0.55" fill="#fff" opacity="0.53"/><circle cx="714.6" cy="678.0" r="0.80" fill="#e8d8c0" opacity="0.78"/><circle cx="1110.6" cy="415.7" r="0.55" fill="#fff" opacity="0.56"/><circle cx="453.3" cy="151.5" r="0.80" fill="#fff" opacity="0.70"/><circle cx="515.4" cy="695.4" r="0.55" fill="#f0d8b8" opacity="0.35"/><circle cx="910.5" cy="757.9" r="0.55" fill="#fff" opacity="0.40"/><circle cx="1113.9" cy="183.5" r="0.55" fill="#f0d8b8" opacity="0.65"/><circle cx="503.1" cy="724.0" r="1.60" fill="#dfe4f4" opacity="1.00"/><circle cx="1073.3" cy="329.1" r="0.55" fill="#fff" opacity="0.68"/><circle cx="1105.4" cy="162.8" r="0.55" fill="#dfe4f4" opacity="0.56"/><circle cx="673.5" cy="730.0" r="0.55" fill="#f4e8d8" opacity="0.45"/><circle cx="1106.4" cy="348.6" r="0.55" fill="#fff" opacity="0.42"/><circle cx="572.2" cy="121.0" r="0.55" fill="#fff" opacity="0.61"/><circle cx="1082.1" cy="156.3" r="0.55" fill="#fff" opacity="0.54"/><circle cx="1030.0" cy="108.4" r="0.55" fill="#e8d8c0" opacity="0.61"/><circle cx="471.0" cy="701.5" r="0.80" fill="#f4e8d8" opacity="0.78"/><circle cx="429.6" cy="119.8" r="0.55" fill="#fff" opacity="0.36"/><circle cx="1107.8" cy="221.0" r="0.55" fill="#f4e8d8" opacity="0.65"/><circle cx="575.7" cy="773.9" r="1.60" fill="#fff" opacity="1.00"/><circle cx="1077.0" cy="197.9" r="1.15" fill="#fff" opacity="0.96"/><circle cx="954.6" cy="122.0" r="0.55" fill="#fff" opacity="0.59"/><circle cx="1065.2" cy="89.8" r="0.55" fill="#fff" opacity="0.36"/><circle cx="1109.5" cy="691.9" r="1.15" fill="#fff" opacity="0.91"/><circle cx="776.7" cy="737.0" r="0.80" fill="#f0d8b8" opacity="0.88"/><circle cx="1098.6" cy="518.0" r="0.55" fill="#f4e8d8" opacity="0.48"/><circle cx="1147.1" cy="230.2" r="0.80" fill="#fff" opacity="0.78"/><circle cx="1145.1" cy="569.9" r="0.55" fill="#f4e8d8" opacity="0.62"/><circle cx="1116.0" cy="691.2" r="1.60" fill="#e8d8c0" opacity="1.00"/><circle cx="1099.6" cy="618.9" r="0.55" fill="#dfe4f4" opacity="0.62"/><circle cx="404.3" cy="499.3" r="0.55" fill="#fff" opacity="0.48"/><circle cx="1063.8" cy="656.4" r="0.55" fill="#f4e8d8" opacity="0.51"/><circle cx="474.3" cy="431.6" r="0.80" fill="#fff" opacity="0.66"/><circle cx="1120.7" cy="113.0" r="0.80" fill="#f4e8d8" opacity="0.84"/><circle cx="499.5" cy="533.4" r="0.55" fill="#f0d8b8" opacity="0.44"/><circle cx="420.2" cy="138.2" r="0.80" fill="#fff" opacity="0.87"/><circle cx="658.8" cy="744.1" r="0.55" fill="#f0d8b8" opacity="0.40"/><circle cx="524.3" cy="725.4" r="0.55" fill="#fff" opacity="0.65"/><circle cx="588.9" cy="729.8" r="0.55" fill="#dfe4f4" opacity="0.67"/><circle cx="448.4" cy="352.8" r="0.80" fill="#fff" opacity="0.89"/><circle cx="474.8" cy="730.6" r="0.80" fill="#fff" opacity="0.80"/><circle cx="640.0" cy="713.3" r="1.15" fill="#e8d8c0" opacity="0.98"/><circle cx="522.8" cy="710.9" r="0.55" fill="#fff" opacity="0.69"/><circle cx="1119.5" cy="404.1" r="0.55" fill="#fff" opacity="0.62"/><circle cx="1099.1" cy="220.8" r="1.15" fill="#fff" opacity="0.93"/><circle cx="626.5" cy="770.1" r="0.55" fill="#fff" opacity="0.69"/><circle cx="454.3" cy="446.6" r="0.80" fill="#fff" opacity="0.83"/><circle cx="402.3" cy="115.1" r="0.55" fill="#f4e8d8" opacity="0.69"/><circle cx="1073.3" cy="573.5" r="0.55" fill="#fff" opacity="0.47"/><circle cx="843.7" cy="666.9" r="0.55" fill="#fff" opacity="0.42"/><circle cx="1081.5" cy="239.6" r="0.55" fill="#dfe4f4" opacity="0.39"/><circle cx="1062.2" cy="447.1" r="0.55" fill="#e8d8c0" opacity="0.69"/><circle cx="1146.5" cy="99.1" r="0.55" fill="#e8d8c0" opacity="0.59"/><circle cx="484.0" cy="611.3" r="0.55" fill="#f4e8d8" opacity="0.40"/><circle cx="1055.0" cy="95.7" r="0.55" fill="#e8d8c0" opacity="0.37"/><circle cx="1077.0" cy="261.6" r="0.55" fill="#fff" opacity="0.41"/><circle cx="483.9" cy="647.4" r="0.55" fill="#dfe4f4" opacity="0.46"/><circle cx="412.4" cy="121.4" r="0.55" fill="#f0d8b8" opacity="0.43"/><circle cx="405.3" cy="717.5" r="0.55" fill="#f0d8b8" opacity="0.62"/><circle cx="778.8" cy="737.6" r="0.55" fill="#fff" opacity="0.41"/><circle cx="460.2" cy="617.2" r="0.55" fill="#e8d8c0" opacity="0.62"/><circle cx="1084.3" cy="582.8" r="0.55" fill="#fff" opacity="0.41"/><circle cx="774.8" cy="784.8" r="0.80" fill="#f0d8b8" opacity="0.82"/><circle cx="870.5" cy="121.6" r="0.55" fill="#fff" opacity="0.47"/><circle cx="476.8" cy="370.5" r="0.55" fill="#f4e8d8" opacity="0.45"/><circle cx="453.9" cy="466.6" r="1.60" fill="#fff" opacity="1.00"/><circle cx="476.0" cy="437.6" r="0.55" fill="#fff" opacity="0.42"/><circle cx="1095.6" cy="480.7" r="0.55" fill="#dfe4f4" opacity="0.37"/><circle cx="507.1" cy="424.4" r="0.55" fill="#fff" opacity="0.59"/><circle cx="567.0" cy="755.3" r="0.55" fill="#f0d8b8" opacity="0.41"/><circle cx="609.0" cy="776.4" r="0.55" fill="#fff" opacity="0.35"/><circle cx="577.6" cy="726.0" r="0.80" fill="#fff" opacity="0.68"/><circle cx="487.5" cy="351.0" r="0.80" fill="#fff" opacity="0.60"/><circle cx="1057.5" cy="140.0" r="0.55" fill="#f0d8b8" opacity="0.56"/><circle cx="1083.6" cy="639.7" r="0.80" fill="#fff" opacity="0.78"/><circle cx="990.6" cy="677.6" r="0.55" fill="#fff" opacity="0.46"/><circle cx="588.0" cy="739.0" r="0.55" fill="#f4e8d8" opacity="0.48"/><circle cx="621.1" cy="671.0" r="0.55" fill="#f4e8d8" opacity="0.44"/><circle cx="446.7" cy="336.8" r="0.55" fill="#dfe4f4" opacity="0.69"/><circle cx="1069.4" cy="698.3" r="0.55" fill="#f4e8d8" opacity="0.63"/><circle cx="935.8" cy="717.5" r="0.80" fill="#e8d8c0" opacity="0.86"/><circle cx="446.6" cy="560.4" r="0.55" fill="#fff" opacity="0.36"/><circle cx="1069.9" cy="384.2" r="0.55" fill="#f4e8d8" opacity="0.62"/><circle cx="1142.1" cy="359.1" r="0.55" fill="#fff" opacity="0.62"/><circle cx="416.3" cy="560.1" r="0.55" fill="#fff" opacity="0.45"/><circle cx="932.8" cy="684.4" r="0.55" fill="#f0d8b8" opacity="0.51"/><circle cx="428.3" cy="311.6" r="0.80" fill="#dfe4f4" opacity="0.78"/><circle cx="731.8" cy="787.1" r="1.15" fill="#fff" opacity="0.80"/><circle cx="581.5" cy="689.9" r="0.55" fill="#e8d8c0" opacity="0.56"/><circle cx="752.3" cy="89.7" r="0.80" fill="#dfe4f4" opacity="0.74"/><circle cx="479.6" cy="265.1" r="0.80" fill="#fff" opacity="0.73"/><circle cx="634.3" cy="700.3" r="0.80" fill="#fff" opacity="0.62"/><circle cx="539.1" cy="83.4" r="0.55" fill="#fff" opacity="0.51"/><circle cx="939.2" cy="680.5" r="0.55" fill="#fff" opacity="0.69"/><circle cx="714.5" cy="761.3" r="0.55" fill="#fff" opacity="0.49"/><circle cx="1150.8" cy="220.8" r="0.55" fill="#f4e8d8" opacity="0.48"/><circle cx="744.4" cy="672.3" r="0.55" fill="#fff" opacity="0.61"/><circle cx="683.9" cy="711.8" r="0.55" fill="#fff" opacity="0.49"/><circle cx="503.3" cy="516.5" r="0.55" fill="#f4e8d8" opacity="0.53"/><circle cx="484.6" cy="274.9" r="0.55" fill="#dfe4f4" opacity="0.42"/><circle cx="992.4" cy="749.5" r="0.80" fill="#fff" opacity="0.80"/><circle cx="737.8" cy="770.5" r="0.80" fill="#fff" opacity="0.80"/><circle cx="461.7" cy="524.8" r="0.55" fill="#dfe4f4" opacity="0.59"/><circle cx="412.8" cy="713.9" r="0.55" fill="#fff" opacity="0.64"/><circle cx="499.9" cy="345.4" r="1.15" fill="#fff" opacity="0.80"/><circle cx="491.7" cy="193.7" r="0.55" fill="#fff" opacity="0.45"/><circle cx="1080.9" cy="699.5" r="1.60" fill="#e8d8c0" opacity="1.00"/><circle cx="853.8" cy="771.2" r="0.55" fill="#fff" opacity="0.35"/><circle cx="469.7" cy="738.6" r="0.55" fill="#f0d8b8" opacity="0.56"/><circle cx="1064.4" cy="351.9" r="0.55" fill="#f0d8b8" opacity="0.48"/><circle cx="1119.2" cy="280.2" r="0.80" fill="#fff" opacity="0.85"/><circle cx="501.0" cy="297.6" r="0.55" fill="#e8d8c0" opacity="0.38"/><circle cx="1117.5" cy="342.2" r="0.55" fill="#fff" opacity="0.53"/><circle cx="773.7" cy="729.5" r="1.15" fill="#f0d8b8" opacity="0.83"/><circle cx="516.7" cy="734.0" r="0.55" fill="#f0d8b8" opacity="0.53"/><circle cx="1112.4" cy="545.4" r="0.55" fill="#fff" opacity="0.55"/><circle cx="492.0" cy="280.7" r="0.55" fill="#f4e8d8" opacity="0.64"/><circle cx="729.5" cy="81.4" r="0.80" fill="#f0d8b8" opacity="0.68"/><circle cx="504.5" cy="473.4" r="0.55" fill="#fff" opacity="0.66"/><circle cx="1048.9" cy="639.9" r="0.80" fill="#e8d8c0" opacity="0.84"/><circle cx="729.0" cy="683.6" r="0.55" fill="#fff" opacity="0.41"/><circle cx="475.9" cy="594.0" r="0.80" fill="#dfe4f4" opacity="0.65"/><circle cx="779.3" cy="675.8" r="0.55" fill="#fff" opacity="0.68"/><circle cx="734.7" cy="713.3" r="0.80" fill="#e8d8c0" opacity="0.63"/><circle cx="1031.0" cy="699.7" r="0.55" fill="#fff" opacity="0.44"/><circle cx="593.0" cy="673.5" r="0.55" fill="#fff" opacity="0.41"/><circle cx="568.8" cy="85.9" r="0.55" fill="#fff" opacity="0.39"/><circle cx="769.2" cy="96.4" r="0.55" fill="#f4e8d8" opacity="0.47"/><circle cx="1100.2" cy="359.4" r="0.55" fill="#f0d8b8" opacity="0.38"/><circle cx="1070.4" cy="370.3" r="0.80" fill="#e8d8c0" opacity="0.77"/><circle cx="1116.6" cy="722.5" r="1.60" fill="#dfe4f4" opacity="1.00"/><circle cx="1050.4" cy="136.9" r="0.55" fill="#fff" opacity="0.66"/><circle cx="411.0" cy="526.5" r="0.80" fill="#e8d8c0" opacity="0.85"/><circle cx="1015.2" cy="702.8" r="0.55" fill="#fff" opacity="0.57"/><circle cx="508.2" cy="359.9" r="0.55" fill="#e8d8c0" opacity="0.45"/><circle cx="497.3" cy="557.3" r="0.55" fill="#f4e8d8" opacity="0.63"/><circle cx="883.4" cy="788.8" r="0.55" fill="#f4e8d8" opacity="0.62"/><circle cx="1073.2" cy="163.9" r="0.55" fill="#e8d8c0" opacity="0.52"/><circle cx="572.3" cy="769.8" r="0.55" fill="#f0d8b8" opacity="0.58"/><circle cx="818.7" cy="673.9" r="0.55" fill="#f4e8d8" opacity="0.58"/><circle cx="1057.3" cy="224.6" r="0.55" fill="#f4e8d8" opacity="0.62"/><circle cx="605.9" cy="676.7" r="0.55" fill="#fff" opacity="0.36"/><circle cx="426.4" cy="396.4" r="1.15" fill="#dfe4f4" opacity="0.86"/><circle cx="477.9" cy="649.8" r="0.55" fill="#f0d8b8" opacity="0.53"/><circle cx="415.5" cy="347.3" r="0.55" fill="#fff" opacity="0.52"/><circle cx="421.3" cy="438.7" r="0.80" fill="#dfe4f4" opacity="0.84"/><circle cx="503.8" cy="664.6" r="0.55" fill="#fff" opacity="0.44"/><circle cx="635.9" cy="766.6" r="0.55" fill="#dfe4f4" opacity="0.69"/><circle cx="1110.4" cy="370.7" r="0.55" fill="#fff" opacity="0.65"/><circle cx="562.4" cy="676.9" r="0.80" fill="#f4e8d8" opacity="0.80"/><circle cx="710.6" cy="715.5" r="0.55" fill="#fff" opacity="0.69"/><circle cx="1144.7" cy="751.6" r="0.55" fill="#dfe4f4" opacity="0.64"/><circle cx="1009.2" cy="90.8" r="0.55" fill="#f4e8d8" opacity="0.60"/><circle cx="917.2" cy="110.7" r="0.55" fill="#e8d8c0" opacity="0.69"/><circle cx="1134.1" cy="283.5" r="0.80" fill="#e8d8c0" opacity="0.72"/><circle cx="542.1" cy="756.0" r="1.15" fill="#dfe4f4" opacity="0.96"/><circle cx="750.7" cy="677.4" r="0.55" fill="#fff" opacity="0.61"/><circle cx="1071.0" cy="407.0" r="0.55" fill="#f0d8b8" opacity="0.56"/><circle cx="1069.6" cy="211.0" r="0.55" fill="#fff" opacity="0.41"/><circle cx="478.0" cy="190.2" r="0.80" fill="#f0d8b8" opacity="0.67"/><circle cx="1011.0" cy="770.9" r="0.55" fill="#fff" opacity="0.38"/><circle cx="697.5" cy="88.6" r="0.55" fill="#fff" opacity="0.48"/><circle cx="1111.0" cy="367.1" r="0.55" fill="#e8d8c0" opacity="0.56"/><circle cx="616.3" cy="770.7" r="0.55" fill="#f0d8b8" opacity="0.70"/><circle cx="494.6" cy="683.9" r="0.55" fill="#f0d8b8" opacity="0.60"/><circle cx="1065.2" cy="425.4" r="0.55" fill="#dfe4f4" opacity="0.49"/><circle cx="1139.8" cy="639.6" r="0.80" fill="#e8d8c0" opacity="0.70"/><circle cx="1093.4" cy="658.5" r="0.55" fill="#dfe4f4" opacity="0.46"/><circle cx="1100.4" cy="539.7" r="0.80" fill="#f0d8b8" opacity="0.88"/><circle cx="1091.9" cy="570.3" r="0.55" fill="#fff" opacity="0.39"/><circle cx="914.4" cy="715.5" r="0.55" fill="#e8d8c0" opacity="0.40"/><circle cx="763.0" cy="113.1" r="0.80" fill="#fff" opacity="0.84"/><circle cx="740.9" cy="92.7" r="0.55" fill="#fff" opacity="0.49"/><circle cx="711.6" cy="685.0" r="0.80" fill="#fff" opacity="0.78"/><circle cx="713.2" cy="120.8" r="1.15" fill="#fff" opacity="0.80"/><circle cx="410.0" cy="146.8" r="0.55" fill="#f0d8b8" opacity="0.50"/><circle cx="1121.0" cy="527.2" r="0.55" fill="#e8d8c0" opacity="0.69"/><circle cx="477.7" cy="600.8" r="0.80" fill="#fff" opacity="0.78"/><circle cx="976.9" cy="683.4" r="0.55" fill="#e8d8c0" opacity="0.56"/><circle cx="1092.0" cy="668.2" r="1.15" fill="#dfe4f4" opacity="0.85"/><circle cx="440.4" cy="298.5" r="0.55" fill="#e8d8c0" opacity="0.64"/><circle cx="1087.0" cy="483.0" r="1.60" fill="#fff" opacity="1.00"/><circle cx="724.3" cy="708.5" r="0.80" fill="#fff" opacity="0.77"/><circle cx="930.4" cy="754.2" r="0.55" fill="#fff" opacity="0.46"/><circle cx="445.8" cy="642.7" r="0.55" fill="#f0d8b8" opacity="0.58"/><circle cx="940.2" cy="777.4" r="0.80" fill="#fff" opacity="0.78"/><circle cx="1117.8" cy="634.8" r="1.15" fill="#dfe4f4" opacity="0.85"/><circle cx="1066.6" cy="757.6" r="0.55" fill="#f0d8b8" opacity="0.51"/><circle cx="1103.6" cy="93.3" r="0.55" fill="#fff" opacity="0.52"/><circle cx="523.5" cy="678.7" r="0.55" fill="#fff" opacity="0.54"/><circle cx="449.3" cy="314.6" r="0.55" fill="#f4e8d8" opacity="0.40"/><circle cx="807.9" cy="108.8" r="0.80" fill="#e8d8c0" opacity="0.86"/><circle cx="563.8" cy="749.0" r="0.80" fill="#fff" opacity="0.67"/><circle cx="441.7" cy="729.8" r="0.55" fill="#fff" opacity="0.66"/><circle cx="647.2" cy="673.8" r="1.15" fill="#fff" opacity="0.86"/><circle cx="922.7" cy="94.5" r="0.80" fill="#f4e8d8" opacity="0.66"/><circle cx="474.7" cy="280.7" r="0.80" fill="#f0d8b8" opacity="0.74"/><circle cx="470.7" cy="366.2" r="0.55" fill="#f0d8b8" opacity="0.42"/><circle cx="406.0" cy="727.1" r="0.55" fill="#e8d8c0" opacity="0.39"/><circle cx="899.4" cy="702.0" r="0.55" fill="#fff" opacity="0.51"/><circle cx="673.0" cy="685.6" r="0.80" fill="#e8d8c0" opacity="0.62"/><circle cx="613.1" cy="695.2" r="0.80" fill="#e8d8c0" opacity="0.74"/><circle cx="490.1" cy="124.6" r="0.55" fill="#e8d8c0" opacity="0.50"/><circle cx="1145.0" cy="422.6" r="0.55" fill="#f4e8d8" opacity="0.64"/><circle cx="1094.3" cy="550.0" r="0.55" fill="#f4e8d8" opacity="0.53"/><circle cx="644.7" cy="671.3" r="0.55" fill="#f0d8b8" opacity="0.65"/><circle cx="1096.7" cy="420.4" r="1.15" fill="#f4e8d8" opacity="0.83"/><circle cx="881.8" cy="701.2" r="0.55" fill="#fff" opacity="0.70"/><circle cx="774.2" cy="703.9" r="0.80" fill="#fff" opacity="0.73"/><circle cx="1135.5" cy="237.6" r="0.55" fill="#dfe4f4" opacity="0.50"/><circle cx="1104.0" cy="550.7" r="0.55" fill="#fff" opacity="0.57"/><circle cx="1106.3" cy="500.8" r="0.55" fill="#f4e8d8" opacity="0.50"/><circle cx="950.2" cy="106.5" r="0.55" fill="#fff" opacity="0.53"/><circle cx="441.3" cy="193.3" r="0.55" fill="#fff" opacity="0.62"/><circle cx="801.2" cy="110.3" r="0.55" fill="#fff" opacity="0.58"/><circle cx="470.4" cy="188.8" r="0.55" fill="#f4e8d8" opacity="0.61"/><circle cx="451.3" cy="474.0" r="0.80" fill="#fff" opacity="0.67"/><circle cx="460.2" cy="311.3" r="0.80" fill="#fff" opacity="0.72"/><circle cx="1034.2" cy="89.2" r="0.55" fill="#f0d8b8" opacity="0.65"/><circle cx="924.2" cy="735.4" r="0.55" fill="#dfe4f4" opacity="0.65"/><circle cx="1059.8" cy="101.2" r="0.55" fill="#f0d8b8" opacity="0.49"/><circle cx="1139.0" cy="414.3" r="1.15" fill="#f0d8b8" opacity="0.87"/><circle cx="401.4" cy="264.4" r="0.80" fill="#fff" opacity="0.83"/><circle cx="869.7" cy="682.4" r="0.55" fill="#fff" opacity="0.52"/><circle cx="473.0" cy="328.1" r="0.80" fill="#fff" opacity="0.77"/><circle cx="1124.5" cy="296.0" r="0.80" fill="#fff" opacity="0.72"/><circle cx="1064.9" cy="748.1" r="0.55" fill="#fff" opacity="0.61"/><circle cx="1092.4" cy="324.6" r="0.80" fill="#fff" opacity="0.89"/><circle cx="410.9" cy="315.0" r="0.55" fill="#e8d8c0" opacity="0.42"/><circle cx="1117.4" cy="177.8" r="0.55" fill="#f4e8d8" opacity="0.57"/><circle cx="490.8" cy="207.9" r="0.55" fill="#e8d8c0" opacity="0.55"/><circle cx="432.9" cy="379.6" r="0.80" fill="#fff" opacity="0.68"/><circle cx="501.7" cy="710.5" r="0.55" fill="#fff" opacity="0.38"/><circle cx="1067.2" cy="103.9" r="0.80" fill="#dfe4f4" opacity="0.67"/><circle cx="1047.5" cy="345.9" r="0.55" fill="#fff" opacity="0.58"/><circle cx="720.3" cy="779.6" r="0.55" fill="#fff" opacity="0.60"/><circle cx="465.2" cy="328.7" r="0.55" fill="#fff" opacity="0.53"/><circle cx="1117.2" cy="529.5" r="0.55" fill="#e8d8c0" opacity="0.40"/><circle cx="496.1" cy="234.8" r="0.80" fill="#e8d8c0" opacity="0.74"/><circle cx="1120.1" cy="324.8" r="1.15" fill="#fff" opacity="0.98"/><circle cx="1130.4" cy="570.7" r="0.55" fill="#fff" opacity="0.69"/><circle cx="1120.7" cy="152.9" r="0.80" fill="#f4e8d8" opacity="0.82"/><circle cx="479.3" cy="465.1" r="0.55" fill="#f0d8b8" opacity="0.57"/><circle cx="810.4" cy="98.0" r="0.55" fill="#f0d8b8" opacity="0.38"/><circle cx="448.7" cy="556.5" r="0.55" fill="#fff" opacity="0.65"/><circle cx="856.1" cy="91.2" r="1.15" fill="#dfe4f4" opacity="0.89"/><circle cx="1089.0" cy="372.3" r="0.55" fill="#f4e8d8" opacity="0.53"/><circle cx="511.0" cy="719.2" r="0.80" fill="#fff" opacity="0.77"/><circle cx="1075.4" cy="389.5" r="0.80" fill="#fff" opacity="0.75"/><circle cx="1038.0" cy="701.5" r="0.55" fill="#f0d8b8" opacity="0.40"/><circle cx="499.7" cy="703.8" r="0.55" fill="#fff" opacity="0.44"/><circle cx="487.6" cy="740.3" r="0.55" fill="#f0d8b8" opacity="0.38"/><circle cx="1143.7" cy="233.2" r="0.55" fill="#f4e8d8" opacity="0.46"/><circle cx="572.6" cy="113.5" r="0.55" fill="#e8d8c0" opacity="0.38"/><circle cx="764.8" cy="705.7" r="0.80" fill="#f0d8b8" opacity="0.82"/><circle cx="754.1" cy="110.2" r="0.55" fill="#f4e8d8" opacity="0.42"/><circle cx="1135.4" cy="164.2" r="0.55" fill="#fff" opacity="0.39"/><circle cx="791.6" cy="752.0" r="0.55" fill="#fff" opacity="0.40"/><circle cx="497.9" cy="383.2" r="0.55" fill="#dfe4f4" opacity="0.50"/><circle cx="486.7" cy="433.0" r="0.55" fill="#fff" opacity="0.39"/><circle cx="580.6" cy="90.9" r="0.80" fill="#f4e8d8" opacity="0.88"/><circle cx="1054.5" cy="559.6" r="1.15" fill="#fff" opacity="0.98"/><circle cx="1000.5" cy="694.8" r="0.80" fill="#dfe4f4" opacity="0.63"/><circle cx="990.9" cy="731.4" r="1.15" fill="#fff" opacity="0.88"/><circle cx="452.5" cy="656.0" r="0.80" fill="#f0d8b8" opacity="0.74"/><circle cx="588.4" cy="741.2" r="0.80" fill="#fff" opacity="0.64"/><circle cx="1071.9" cy="144.3" r="0.55" fill="#fff" opacity="0.65"/><circle cx="484.2" cy="372.2" r="0.80" fill="#f4e8d8" opacity="0.79"/><circle cx="1049.6" cy="461.5" r="0.55" fill="#f4e8d8" opacity="0.69"/><circle cx="730.4" cy="726.6" r="0.55" fill="#fff" opacity="0.42"/><circle cx="1059.2" cy="596.3" r="0.55" fill="#f4e8d8" opacity="0.64"/><circle cx="1079.3" cy="382.9" r="1.15" fill="#dfe4f4" opacity="0.85"/><circle cx="1137.7" cy="668.1" r="0.55" fill="#fff" opacity="0.67"/><circle cx="884.6" cy="781.2" r="0.80" fill="#fff" opacity="0.68"/><circle cx="452.8" cy="265.0" r="0.55" fill="#dfe4f4" opacity="0.64"/><circle cx="1141.3" cy="667.2" r="0.80" fill="#fff" opacity="0.80"/><circle cx="1065.6" cy="545.6" r="0.55" fill="#fff" opacity="0.37"/><circle cx="826.3" cy="696.4" r="0.55" fill="#f0d8b8" opacity="0.57"/><circle cx="1138.3" cy="616.4" r="0.55" fill="#f4e8d8" opacity="0.37"/><circle cx="593.3" cy="683.5" r="0.55" fill="#f4e8d8" opacity="0.58"/><circle cx="1115.9" cy="686.8" r="0.55" fill="#f4e8d8" opacity="0.60"/><circle cx="433.6" cy="516.0" r="0.55" fill="#e8d8c0" opacity="0.42"/><circle cx="870.6" cy="696.3" r="1.15" fill="#f4e8d8" opacity="0.90"/><circle cx="535.9" cy="702.4" r="0.55" fill="#fff" opacity="0.41"/><circle cx="503.0" cy="757.0" r="0.55" fill="#fff" opacity="0.55"/><circle cx="432.5" cy="671.6" r="0.55" fill="#fff" opacity="0.46"/><circle cx="420.3" cy="122.7" r="0.55" fill="#f0d8b8" opacity="0.46"/><circle cx="482.5" cy="568.7" r="0.80" fill="#fff" opacity="0.72"/><circle cx="472.1" cy="614.9" r="0.55" fill="#f0d8b8" opacity="0.57"/><circle cx="489.3" cy="261.8" r="0.55" fill="#f4e8d8" opacity="0.66"/><circle cx="1049.9" cy="93.5" r="0.55" fill="#f0d8b8" opacity="0.41"/><circle cx="717.5" cy="754.6" r="0.55" fill="#fff" opacity="0.37"/><circle cx="516.4" cy="672.3" r="0.55" fill="#f4e8d8" opacity="0.63"/><circle cx="423.2" cy="190.1" r="0.50" fill="#f0e0c8" opacity="0.62"/><circle cx="431.2" cy="104.6" r="0.60" fill="#e0e4f0" opacity="0.34"/><circle cx="523.0" cy="111.5" r="0.50" fill="#fff" opacity="0.61"/><circle cx="401.3" cy="163.4" r="0.50" fill="#fff" opacity="0.63"/><circle cx="578.1" cy="81.6" r="0.50" fill="#e0e4f0" opacity="0.44"/><circle cx="603.4" cy="92.2" r="0.60" fill="#fff" opacity="0.61"/><circle cx="611.3" cy="82.5" r="0.80" fill="#e0e4f0" opacity="0.52"/><circle cx="410.9" cy="123.1" r="0.50" fill="#fff" opacity="0.56"/><circle cx="471.5" cy="171.4" r="0.60" fill="#e0e4f0" opacity="0.34"/><circle cx="581.9" cy="106.3" r="0.50" fill="#e0e4f0" opacity="0.46"/><circle cx="428.6" cy="227.9" r="0.80" fill="#fff" opacity="0.73"/><circle cx="449.5" cy="157.6" r="0.50" fill="#f0e0c8" opacity="0.42"/><circle cx="413.4" cy="264.9" r="0.60" fill="#e0e4f0" opacity="0.65"/><circle cx="488.9" cy="114.1" r="0.80" fill="#f0e0c8" opacity="0.38"/><circle cx="508.0" cy="141.5" r="0.60" fill="#f0e0c8" opacity="0.63"/><circle cx="616.6" cy="118.9" r="0.50" fill="#e0e4f0" opacity="0.46"/><circle cx="473.1" cy="186.9" r="0.50" fill="#fff" opacity="0.57"/><circle cx="581.8" cy="102.1" r="0.80" fill="#e0e4f0" opacity="0.44"/><circle cx="449.1" cy="255.7" r="0.50" fill="#f0e0c8" opacity="0.40"/><circle cx="490.6" cy="170.3" r="0.60" fill="#f0e0c8" opacity="0.54"/><circle cx="417.4" cy="266.7" r="0.80" fill="#e0e4f0" opacity="0.59"/><circle cx="417.0" cy="274.5" r="0.80" fill="#f0e0c8" opacity="0.69"/><circle cx="405.0" cy="225.7" r="0.60" fill="#f0e0c8" opacity="0.31"/><circle cx="456.8" cy="114.3" r="0.50" fill="#e0e4f0" opacity="0.75"/><circle cx="461.2" cy="261.5" r="0.80" fill="#f0e0c8" opacity="0.60"/><circle cx="406.4" cy="268.0" r="0.80" fill="#fff" opacity="0.37"/><circle cx="441.5" cy="224.1" r="0.80" fill="#f0e0c8" opacity="0.49"/><circle cx="439.2" cy="81.8" r="0.50" fill="#e0e4f0" opacity="0.68"/><circle cx="471.1" cy="101.1" r="0.60" fill="#fff" opacity="0.41"/><circle cx="424.2" cy="237.9" r="0.50" fill="#e0e4f0" opacity="0.61"/><circle cx="424.6" cy="158.0" r="0.60" fill="#e0e4f0" opacity="0.74"/><circle cx="472.0" cy="190.6" r="0.60" fill="#fff" opacity="0.66"/><circle cx="504.1" cy="135.1" r="0.60" fill="#f0e0c8" opacity="0.38"/><circle cx="423.2" cy="299.5" r="0.60" fill="#e0e4f0" opacity="0.71"/><circle cx="429.1" cy="294.2" r="0.60" fill="#f0e0c8" opacity="0.74"/><circle cx="483.7" cy="127.9" r="0.60" fill="#f0e0c8" opacity="0.38"/><circle cx="415.3" cy="187.2" r="0.60" fill="#fff" opacity="0.64"/><circle cx="547.7" cy="80.5" r="0.50" fill="#e0e4f0" opacity="0.32"/><circle cx="495.5" cy="89.5" r="0.80" fill="#e0e4f0" opacity="0.36"/><circle cx="472.3" cy="153.3" r="0.80" fill="#e0e4f0" opacity="0.39"/><circle cx="586.2" cy="100.3" r="0.80" fill="#f0e0c8" opacity="0.31"/><circle cx="584.6" cy="85.8" r="0.80" fill="#e0e4f0" opacity="0.58"/><circle cx="416.9" cy="234.6" r="0.50" fill="#e0e4f0" opacity="0.49"/><circle cx="472.2" cy="80.7" r="0.80" fill="#f0e0c8" opacity="0.61"/><circle cx="437.2" cy="265.3" r="0.80" fill="#e0e4f0" opacity="0.73"/><circle cx="450.6" cy="193.6" r="0.60" fill="#f0e0c8" opacity="0.74"/><circle cx="414.2" cy="232.2" r="0.50" fill="#e0e4f0" opacity="0.75"/><circle cx="474.7" cy="224.7" r="0.80" fill="#f0e0c8" opacity="0.62"/><circle cx="525.2" cy="106.9" r="0.50" fill="#fff" opacity="0.44"/><circle cx="428.0" cy="97.1" r="0.80" fill="#fff" opacity="0.63"/><circle cx="459.9" cy="132.0" r="0.60" fill="#e0e4f0" opacity="0.51"/><circle cx="450.8" cy="185.6" r="0.80" fill="#e0e4f0" opacity="0.59"/><circle cx="481.2" cy="80.2" r="0.80" fill="#e0e4f0" opacity="0.36"/><circle cx="425.5" cy="157.8" r="0.80" fill="#e0e4f0" opacity="0.36"/><circle cx="405.4" cy="253.0" r="0.50" fill="#e0e4f0" opacity="0.42"/><circle cx="484.7" cy="151.8" r="0.50" fill="#f0e0c8" opacity="0.61"/><circle cx="458.6" cy="194.4" r="0.50" fill="#fff" opacity="0.53"/><circle cx="418.6" cy="245.1" r="0.80" fill="#fff" opacity="0.67"/><circle cx="507.0" cy="127.5" r="0.80" fill="#f0e0c8" opacity="0.55"/><circle cx="426.7" cy="191.8" r="0.80" fill="#e0e4f0" opacity="0.60"/><circle cx="483.8" cy="104.1" r="0.50" fill="#fff" opacity="0.68"/><circle cx="438.6" cy="201.2" r="0.50" fill="#e0e4f0" opacity="0.69"/><circle cx="458.0" cy="281.0" r="0.80" fill="#f0e0c8" opacity="0.41"/><circle cx="484.6" cy="115.1" r="0.80" fill="#fff" opacity="0.37"/><circle cx="441.5" cy="216.8" r="0.60" fill="#f0e0c8" opacity="0.61"/><circle cx="615.1" cy="102.3" r="0.80" fill="#fff" opacity="0.31"/><circle cx="421.6" cy="278.1" r="0.80" fill="#fff" opacity="0.35"/><circle cx="603.9" cy="95.7" r="0.60" fill="#fff" opacity="0.40"/><circle cx="479.3" cy="89.1" r="0.60" fill="#fff" opacity="0.54"/><circle cx="468.5" cy="116.8" r="0.60" fill="#fff" opacity="0.33"/><circle cx="438.6" cy="235.4" r="0.60" fill="#f0e0c8" opacity="0.53"/><circle cx="430.2" cy="86.4" r="0.80" fill="#fff" opacity="0.74"/><circle cx="462.6" cy="203.1" r="0.60" fill="#f0e0c8" opacity="0.63"/><circle cx="446.1" cy="209.1" r="0.60" fill="#f0e0c8" opacity="0.47"/><circle cx="481.8" cy="176.5" r="0.50" fill="#fff" opacity="0.52"/><circle cx="423.0" cy="252.3" r="0.50" fill="#f0e0c8" opacity="0.34"/><circle cx="450.2" cy="173.2" r="0.50" fill="#fff" opacity="0.48"/><circle cx="463.3" cy="117.2" r="0.60" fill="#e0e4f0" opacity="0.68"/><circle cx="403.1" cy="153.3" r="0.80" fill="#f0e0c8" opacity="0.44"/><circle cx="416.1" cy="216.0" r="0.60" fill="#fff" opacity="0.42"/><circle cx="431.3" cy="257.2" r="0.50" fill="#f0e0c8" opacity="0.38"/><circle cx="469.8" cy="193.3" r="0.60" fill="#fff" opacity="0.38"/><circle cx="403.6" cy="293.9" r="0.50" fill="#fff" opacity="0.64"/><circle cx="450.8" cy="96.7" r="0.50" fill="#e0e4f0" opacity="0.33"/><circle cx="408.5" cy="260.5" r="0.80" fill="#e0e4f0" opacity="0.34"/><circle cx="424.2" cy="98.3" r="0.60" fill="#e0e4f0" opacity="0.59"/><circle cx="532.2" cy="121.4" r="0.50" fill="#e0e4f0" opacity="0.36"/><circle cx="588.9" cy="83.6" r="0.50" fill="#fff" opacity="0.74"/><circle cx="458.4" cy="172.5" r="0.50" fill="#fff" opacity="0.66"/><circle cx="534.3" cy="82.1" r="0.80" fill="#fff" opacity="0.58"/><circle cx="425.9" cy="157.9" r="0.80" fill="#fff" opacity="0.34"/><circle cx="424.4" cy="167.8" r="0.60" fill="#e0e4f0" opacity="0.48"/><circle cx="505.3" cy="91.4" r="0.50" fill="#fff" opacity="0.55"/><circle cx="440.7" cy="283.7" r="0.60" fill="#e0e4f0" opacity="0.51"/><circle cx="557.1" cy="87.1" r="0.80" fill="#f0e0c8" opacity="0.44"/><circle cx="464.2" cy="169.6" r="0.80" fill="#fff" opacity="0.54"/><circle cx="455.3" cy="104.9" r="0.80" fill="#e0e4f0" opacity="0.31"/><circle cx="474.8" cy="234.5" r="0.80" fill="#f0e0c8" opacity="0.37"/><circle cx="423.6" cy="156.0" r="0.60" fill="#fff" opacity="0.44"/><circle cx="493.2" cy="86.2" r="0.60" fill="#f0e0c8" opacity="0.31"/><circle cx="487.1" cy="192.6" r="0.50" fill="#fff" opacity="0.58"/><circle cx="408.8" cy="238.1" r="0.50" fill="#e0e4f0" opacity="0.37"/><circle cx="440.9" cy="283.1" r="0.60" fill="#fff" opacity="0.35"/><circle cx="432.2" cy="116.9" r="0.80" fill="#e0e4f0" opacity="0.47"/><circle cx="466.5" cy="157.7" r="0.80" fill="#f0e0c8" opacity="0.71"/><circle cx="468.3" cy="268.7" r="0.50" fill="#fff" opacity="0.43"/><circle cx="480.6" cy="212.6" r="0.60" fill="#f0e0c8" opacity="0.74"/><circle cx="467.9" cy="110.0" r="0.60" fill="#fff" opacity="0.69"/><circle cx="571.2" cy="96.8" r="0.80" fill="#e0e4f0" opacity="0.49"/><circle cx="528.9" cy="105.7" r="0.60" fill="#fff" opacity="0.60"/><circle cx="465.1" cy="120.2" r="0.80" fill="#e0e4f0" opacity="0.51"/><circle cx="484.8" cy="169.8" r="0.80" fill="#fff" opacity="0.59"/><circle cx="456.7" cy="223.7" r="0.60" fill="#e0e4f0" opacity="0.33"/><circle cx="593.7" cy="104.4" r="0.60" fill="#fff" opacity="0.61"/><circle cx="457.7" cy="158.0" r="0.80" fill="#fff" opacity="0.45"/><circle cx="513.7" cy="116.5" r="0.60" fill="#f0e0c8" opacity="0.33"/><circle cx="588.5" cy="104.1" r="0.80" fill="#e0e4f0" opacity="0.40"/><circle cx="404.1" cy="281.8" r="0.50" fill="#fff" opacity="0.44"/><circle cx="430.6" cy="203.8" r="0.50" fill="#e0e4f0" opacity="0.51"/><circle cx="591.0" cy="104.2" r="0.60" fill="#e0e4f0" opacity="0.65"/><circle cx="472.8" cy="107.0" r="0.50" fill="#f0e0c8" opacity="0.75"/><circle cx="481.0" cy="104.2" r="0.50" fill="#e0e4f0" opacity="0.70"/><circle cx="446.1" cy="265.4" r="0.50" fill="#f0e0c8" opacity="0.49"/><circle cx="410.9" cy="307.4" r="0.50" fill="#f0e0c8" opacity="0.53"/><circle cx="424.8" cy="242.1" r="0.80" fill="#f0e0c8" opacity="0.45"/><circle cx="414.4" cy="259.7" r="0.80" fill="#fff" opacity="0.65"/><circle cx="477.1" cy="201.4" r="0.60" fill="#fff" opacity="0.72"/><circle cx="466.7" cy="231.5" r="0.60" fill="#e0e4f0" opacity="0.54"/><circle cx="464.8" cy="239.8" r="0.80" fill="#f0e0c8" opacity="0.62"/><circle cx="419.8" cy="119.3" r="0.50" fill="#f0e0c8" opacity="0.38"/><circle cx="452.2" cy="166.0" r="0.50" fill="#f0e0c8" opacity="0.36"/><circle cx="497.6" cy="112.1" r="0.60" fill="#f0e0c8" opacity="0.73"/><circle cx="456.3" cy="153.5" r="0.50" fill="#fff" opacity="0.61"/><circle cx="496.6" cy="228.7" r="0.50" fill="#e0e4f0" opacity="0.55"/><circle cx="461.2" cy="122.7" r="0.60" fill="#e0e4f0" opacity="0.56"/><circle cx="543.7" cy="94.6" r="0.50" fill="#fff" opacity="0.68"/><circle cx="413.4" cy="134.6" r="0.80" fill="#e0e4f0" opacity="0.39"/><circle cx="441.6" cy="186.9" r="0.50" fill="#fff" opacity="0.40"/><circle cx="431.3" cy="258.8" r="0.80" fill="#e0e4f0" opacity="0.52"/><circle cx="425.7" cy="245.5" r="0.60" fill="#e0e4f0" opacity="0.55"/><circle cx="463.3" cy="145.5" r="0.80" fill="#f0e0c8" opacity="0.72"/><circle cx="412.8" cy="313.5" r="0.80" fill="#fff" opacity="0.36"/><circle cx="612.7" cy="119.4" r="0.80" fill="#e0e4f0" opacity="0.50"/><circle cx="439.7" cy="223.4" r="0.60" fill="#fff" opacity="0.40"/><circle cx="608.3" cy="109.0" r="0.50" fill="#f0e0c8" opacity="0.66"/><circle cx="410.3" cy="239.4" r="0.60" fill="#e0e4f0" opacity="0.52"/><circle cx="419.1" cy="229.4" r="0.80" fill="#f0e0c8" opacity="0.51"/><circle cx="410.6" cy="209.2" r="0.80" fill="#e0e4f0" opacity="0.64"/><circle cx="500.5" cy="218.3" r="0.60" fill="#e0e4f0" opacity="0.68"/><circle cx="428.9" cy="92.9" r="0.80" fill="#fff" opacity="0.34"/><circle cx="406.6" cy="206.0" r="0.80" fill="#e0e4f0" opacity="0.35"/><circle cx="492.3" cy="145.4" r="0.50" fill="#e0e4f0" opacity="0.62"/><circle cx="538.4" cy="112.8" r="0.60" fill="#f0e0c8" opacity="0.47"/><circle cx="503.3" cy="150.7" r="0.50" fill="#f0e0c8" opacity="0.38"/><circle cx="474.5" cy="260.0" r="0.80" fill="#fff" opacity="0.50"/><circle cx="486.8" cy="226.9" r="0.50" fill="#f0e0c8" opacity="0.50"/><circle cx="447.8" cy="202.0" r="0.80" fill="#f0e0c8" opacity="0.73"/><circle cx="446.3" cy="102.4" r="0.50" fill="#f0e0c8" opacity="0.37"/><circle cx="410.2" cy="175.1" r="0.80" fill="#f0e0c8" opacity="0.38"/><circle cx="498.4" cy="161.6" r="0.80" fill="#fff" opacity="0.35"/><circle cx="420.4" cy="272.0" r="0.60" fill="#e0e4f0" opacity="0.64"/><circle cx="578.5" cy="101.9" r="0.60" fill="#fff" opacity="0.43"/><circle cx="609.5" cy="93.1" r="0.50" fill="#fff" opacity="0.33"/><circle cx="553.6" cy="99.8" r="0.50" fill="#f0e0c8" opacity="0.30"/><circle cx="428.1" cy="205.1" r="0.50" fill="#e0e4f0" opacity="0.51"/><circle cx="438.2" cy="192.3" r="0.50" fill="#e0e4f0" opacity="0.39"/><circle cx="582.2" cy="110.6" r="0.60" fill="#e0e4f0" opacity="0.46"/><circle cx="436.4" cy="243.2" r="0.80" fill="#f0e0c8" opacity="0.64"/><circle cx="438.3" cy="254.2" r="0.50" fill="#f0e0c8" opacity="0.42"/><circle cx="425.3" cy="219.7" r="0.50" fill="#fff" opacity="0.66"/><circle cx="457.0" cy="90.9" r="0.80" fill="#e0e4f0" opacity="0.39"/><circle cx="471.9" cy="138.6" r="0.80" fill="#e0e4f0" opacity="0.74"/><circle cx="475.4" cy="176.5" r="0.50" fill="#e0e4f0" opacity="0.59"/><circle cx="440.6" cy="261.5" r="0.60" fill="#f0e0c8" opacity="0.74"/><circle cx="446.0" cy="243.6" r="0.50" fill="#f0e0c8" opacity="0.41"/><circle cx="581.5" cy="91.5" r="0.80" fill="#f0e0c8" opacity="0.69"/><circle cx="482.4" cy="237.6" r="0.80" fill="#f0e0c8" opacity="0.61"/><circle cx="458.9" cy="117.0" r="0.50" fill="#e0e4f0" opacity="0.73"/><circle cx="516.4" cy="106.6" r="0.50" fill="#fff" opacity="0.56"/><circle cx="429.0" cy="193.8" r="0.80" fill="#f0e0c8" opacity="0.55"/><circle cx="430.5" cy="164.3" r="0.60" fill="#fff" opacity="0.31"/><circle cx="410.8" cy="237.4" r="0.50" fill="#f0e0c8" opacity="0.70"/><circle cx="493.3" cy="190.5" r="0.80" fill="#e0e4f0" opacity="0.35"/><circle cx="472.4" cy="126.0" r="0.80" fill="#e0e4f0" opacity="0.70"/><circle cx="462.8" cy="176.2" r="0.50" fill="#e0e4f0" opacity="0.35"/><circle cx="428.6" cy="206.1" r="0.80" fill="#f0e0c8" opacity="0.75"/><circle cx="467.5" cy="103.3" r="0.50" fill="#fff" opacity="0.53"/><circle cx="404.3" cy="168.8" r="0.60" fill="#e0e4f0" opacity="0.61"/><circle cx="434.9" cy="123.1" r="0.60" fill="#fff" opacity="0.36"/><circle cx="425.2" cy="220.4" r="0.60" fill="#fff" opacity="0.35"/><circle cx="480.8" cy="124.3" r="0.80" fill="#fff" opacity="0.56"/><circle cx="507.1" cy="219.9" r="0.50" fill="#f0e0c8" opacity="0.69"/><circle cx="537.1" cy="101.3" r="0.80" fill="#e0e4f0" opacity="0.39"/><circle cx="501.2" cy="217.0" r="0.80" fill="#e0e4f0" opacity="0.37"/><circle cx="556.3" cy="101.5" r="0.80" fill="#e0e4f0" opacity="0.51"/><circle cx="410.5" cy="230.0" r="0.80" fill="#f0e0c8" opacity="0.48"/><circle cx="463.7" cy="155.3" r="0.60" fill="#f0e0c8" opacity="0.75"/><circle cx="436.0" cy="300.2" r="0.60" fill="#e0e4f0" opacity="0.69"/><circle cx="492.0" cy="202.6" r="0.60" fill="#e0e4f0" opacity="0.49"/><circle cx="431.7" cy="99.7" r="0.60" fill="#f0e0c8" opacity="0.71"/><circle cx="450.4" cy="191.4" r="0.50" fill="#f0e0c8" opacity="0.42"/><circle cx="489.7" cy="80.6" r="0.80" fill="#fff" opacity="0.55"/><circle cx="412.3" cy="179.1" r="0.60" fill="#e0e4f0" opacity="0.74"/><circle cx="432.7" cy="287.1" r="0.50" fill="#fff" opacity="0.64"/><circle cx="440.4" cy="164.4" r="0.50" fill="#e0e4f0" opacity="0.63"/><circle cx="420.2" cy="133.5" r="0.50" fill="#fff" opacity="0.60"/><circle cx="420.0" cy="297.5" r="0.60" fill="#fff" opacity="0.68"/><circle cx="401.4" cy="180.4" r="0.60" fill="#e0e4f0" opacity="0.32"/><circle cx="444.5" cy="177.7" r="0.50" fill="#e0e4f0" opacity="0.62"/><circle cx="409.5" cy="243.3" r="0.60" fill="#fff" opacity="0.64"/><circle cx="444.2" cy="95.0" r="0.80" fill="#f0e0c8" opacity="0.61"/><circle cx="508.3" cy="91.5" r="0.80" fill="#f0e0c8" opacity="0.49"/><circle cx="474.4" cy="218.0" r="0.50" fill="#f0e0c8" opacity="0.66"/><circle cx="450.2" cy="259.8" r="0.50" fill="#e0e4f0" opacity="0.40"/><circle cx="407.7" cy="144.0" r="0.60" fill="#e0e4f0" opacity="0.37"/><circle cx="432.7" cy="280.2" r="0.50" fill="#fff" opacity="0.72"/><circle cx="467.6" cy="220.2" r="0.50" fill="#f0e0c8" opacity="0.65"/><circle cx="403.9" cy="298.8" r="0.80" fill="#fff" opacity="0.43"/><circle cx="559.3" cy="109.0" r="0.50" fill="#e0e4f0" opacity="0.57"/><circle cx="432.3" cy="202.7" r="0.80" fill="#fff" opacity="0.73"/><circle cx="401.0" cy="226.5" r="0.50" fill="#fff" opacity="0.36"/><circle cx="578.1" cy="120.1" r="0.60" fill="#e0e4f0" opacity="0.54"/><circle cx="516.0" cy="90.7" r="0.50" fill="#fff" opacity="0.60"/><circle cx="489.6" cy="112.3" r="0.60" fill="#e0e4f0" opacity="0.47"/><circle cx="619.9" cy="96.8" r="0.50" fill="#fff" opacity="0.33"/><circle cx="571.3" cy="119.2" r="0.80" fill="#e0e4f0" opacity="0.46"/><circle cx="420.7" cy="227.2" r="0.50" fill="#f0e0c8" opacity="0.67"/><circle cx="488.0" cy="84.1" r="0.50" fill="#e0e4f0" opacity="0.63"/><circle cx="454.4" cy="160.8" r="0.80" fill="#fff" opacity="0.73"/><circle cx="614.6" cy="114.9" r="0.60" fill="#e0e4f0" opacity="0.74"/><circle cx="415.7" cy="291.8" r="0.50" fill="#fff" opacity="0.38"/><circle cx="471.0" cy="83.5" r="0.50" fill="#e0e4f0" opacity="0.48"/><circle cx="448.4" cy="145.3" r="0.60" fill="#e0e4f0" opacity="0.71"/><circle cx="508.9" cy="81.7" r="0.60" fill="#fff" opacity="0.67"/><circle cx="410.4" cy="302.8" r="0.60" fill="#f0e0c8" opacity="0.49"/><circle cx="429.7" cy="240.7" r="0.50" fill="#fff" opacity="0.38"/><circle cx="430.6" cy="232.3" r="0.50" fill="#e0e4f0" opacity="0.42"/><circle cx="451.3" cy="192.1" r="0.60" fill="#f0e0c8" opacity="0.74"/><circle cx="426.4" cy="302.8" r="0.80" fill="#e0e4f0" opacity="0.48"/><circle cx="509.6" cy="116.8" r="0.60" fill="#e0e4f0" opacity="0.57"/><circle cx="496.5" cy="175.6" r="0.60" fill="#fff" opacity="0.36"/><circle cx="405.1" cy="163.3" r="0.60" fill="#e0e4f0" opacity="0.68"/><circle cx="423.4" cy="315.9" r="0.50" fill="#fff" opacity="0.64"/><circle cx="493.3" cy="143.5" r="0.60" fill="#fff" opacity="0.49"/><circle cx="421.6" cy="126.9" r="0.80" fill="#f0e0c8" opacity="0.31"/><circle cx="434.3" cy="236.9" r="0.80" fill="#f0e0c8" opacity="0.74"/><circle cx="467.4" cy="243.2" r="0.80" fill="#fff" opacity="0.54"/><circle cx="608.9" cy="97.5" r="0.60" fill="#fff" opacity="0.36"/><circle cx="449.7" cy="107.6" r="0.80" fill="#f0e0c8" opacity="0.50"/><circle cx="428.3" cy="275.7" r="0.60" fill="#f0e0c8" opacity="0.42"/><circle cx="496.6" cy="238.0" r="0.60" fill="#fff" opacity="0.46"/><circle cx="448.2" cy="82.8" r="0.80" fill="#f0e0c8" opacity="0.65"/><circle cx="496.1" cy="176.0" r="0.60" fill="#e0e4f0" opacity="0.54"/><circle cx="414.2" cy="300.8" r="0.80" fill="#e0e4f0" opacity="0.34"/><circle cx="455.7" cy="174.9" r="0.50" fill="#fff" opacity="0.74"/><circle cx="434.7" cy="121.5" r="0.60" fill="#f0e0c8" opacity="0.66"/><circle cx="572.4" cy="100.3" r="0.80" fill="#e0e4f0" opacity="0.56"/><circle cx="463.7" cy="217.4" r="0.80" fill="#f0e0c8" opacity="0.37"/><circle cx="407.0" cy="215.0" r="0.80" fill="#fff" opacity="0.43"/><circle cx="470.5" cy="104.2" r="0.80" fill="#f0e0c8" opacity="0.72"/></g>
<polyline points="401.0,140.7 449.5,136.7 463.5,108.0 466.0,97.0 463.5,80.0" fill="none" stroke="#f41414" stroke-width="1.75" stroke-linejoin="round"/>
<polyline points="466.0,97.0 483.0,100.0 519.0,103.4 547.0,112.0 538.0,122.0" fill="none" stroke="#f41414" stroke-width="1.75" stroke-linejoin="round"/>
<polyline points="519.0,103.0 517.0,80.0" fill="none" stroke="#f41414" stroke-width="1.75" stroke-linejoin="round"/>
<polyline points="697.0,80.0 702.0,121.0" fill="none" stroke="#f41414" stroke-width="1.75" stroke-linejoin="round"/>
<polyline points="867.0,80.0 843.0,121.0" fill="none" stroke="#f41414" stroke-width="1.75" stroke-linejoin="round"/>
<polyline points="904.6,80.0 980.0,121.0" fill="none" stroke="#f41414" stroke-width="1.75" stroke-linejoin="round"/>
<polyline points="1018.0,121.0 1051.0,102.5 1071.0,97.7 1101.0,80.0" fill="none" stroke="#f41414" stroke-width="1.75" stroke-linejoin="round"/>
<polyline points="401.0,341.0 418.0,330.5 453.0,306.0" fill="none" stroke="#f41414" stroke-width="1.75" stroke-linejoin="round"/>
<polyline points="418.0,330.5 449.0,371.0 476.0,400.0 495.0,413.0 499.0,398.6" fill="none" stroke="#f41414" stroke-width="1.75" stroke-linejoin="round"/>
<polyline points="403.0,418.0 409.0,431.0 404.0,455.0 403.6,467.0 412.0,486.0 427.0,507.0 460.0,533.0 474.4,516.7" fill="none" stroke="#f41414" stroke-width="1.75" stroke-linejoin="round"/>
<polyline points="401.0,687.0 440.0,688.0 474.0,690.0 497.0,694.5 516.0,706.0 574.0,699.4" fill="none" stroke="#f41414" stroke-width="1.75" stroke-linejoin="round"/>
<polyline points="516.0,706.0 495.7,717.5 477.5,725.0 401.0,747.0" fill="none" stroke="#f41414" stroke-width="1.75" stroke-linejoin="round"/>
<polyline points="574.0,699.4 606.0,667.0" fill="none" stroke="#f41414" stroke-width="1.75" stroke-linejoin="round"/>
<polyline points="574.0,699.4 572.0,747.0" fill="none" stroke="#f41414" stroke-width="1.75" stroke-linejoin="round"/>
<polyline points="574.0,699.4 500.0,762.8 515.5,773.7" fill="none" stroke="#f41414" stroke-width="1.75" stroke-linejoin="round"/>
<polyline points="653.0,667.0 616.0,754.0" fill="none" stroke="#f41414" stroke-width="1.75" stroke-linejoin="round"/>
<polyline points="667.5,667.0 705.0,746.6" fill="none" stroke="#f41414" stroke-width="1.75" stroke-linejoin="round"/>
<polyline points="878.0,667.0 905.0,743.0" fill="none" stroke="#f41414" stroke-width="1.75" stroke-linejoin="round"/>
<polyline points="803.6,789.5 846.8,735.0 942.6,779.0 942.6,784.0" fill="none" stroke="#f41414" stroke-width="1.75" stroke-linejoin="round"/>
<polyline points="1025.5,667.0 1034.6,707.0" fill="none" stroke="#f41414" stroke-width="1.75" stroke-linejoin="round"/>
<polyline points="1049.0,230.0 1092.0,224.0 1067.8,287.8 1049.0,273.0" fill="none" stroke="#f41414" stroke-width="1.75" stroke-linejoin="round"/>
<polyline points="1097.8,432.0 1132.8,541.0 1049.0,538.0" fill="none" stroke="#f41414" stroke-width="1.75" stroke-linejoin="round"/>
<line x1="669.5" y1="789" x2="786" y2="666" stroke="#4646f0" stroke-width="3.6"/>
<line x1="1047" y1="348" x2="1153" y2="198" stroke="#4646f0" stroke-width="3.6"/>
<line x1="406" y1="695" x2="508" y2="640" stroke="#1f8a2a" stroke-width="1.6" stroke-dasharray="6 4"/>
<line x1="1049" y1="339.7" x2="1072" y2="326.6" stroke="#1f8a2a" stroke-width="1.6" stroke-dasharray="5 4"/>
<line x1="1111" y1="304.4" x2="1153" y2="280.5" stroke="#1f8a2a" stroke-width="1.6" stroke-dasharray="5 4"/>
<path d="M401 755 C440 764 480 769 515 773.7 C560 779 630 786 670 788.5 C720 791 760 792 801 791 C850 790 900 787 942 783.5 C1010 777 1080 766 1132 757.5 L1152 753.5 L1152 816 L401 816 Z" fill="#000" stroke="none"/>
<path d="M401 755 C440 764 480 769 515 773.7 C560 779 630 786 670 788.5 C720 791 760 792 801 791 C850 790 900 787 942 783.5 C1010 777 1080 766 1132 757.5 L1152 753.5" fill="none" stroke="#1c7a24" stroke-width="1.15"/>
<circle cx="449.5" cy="136.7" r="3.3" fill="url(#sg)"/>
<circle cx="466.0" cy="97.0" r="3.0" fill="url(#sg)"/>
<circle cx="519.0" cy="103.0" r="3.5" fill="url(#sg)"/>
<circle cx="547.0" cy="112.0" r="3.1" fill="url(#sg)"/>
<circle cx="500.5" cy="107.0" r="3.1" fill="url(#sg)"/>
<circle cx="481.0" cy="100.0" r="2.7" fill="url(#sg)"/>
<circle cx="418.0" cy="330.5" r="3.0" fill="url(#sg)"/>
<circle cx="453.0" cy="306.0" r="3.0" fill="url(#sg)"/>
<circle cx="449.0" cy="371.0" r="3.0" fill="url(#sg)"/>
<circle cx="476.0" cy="400.0" r="3.8" fill="url(#sg)"/>
<circle cx="495.0" cy="413.0" r="3.1" fill="url(#sg)"/>
<circle cx="499.0" cy="398.6" r="2.5" fill="url(#sg)"/>
<circle cx="409.0" cy="431.0" r="2.8" fill="url(#sg)"/>
<circle cx="403.6" cy="467.0" r="3.3" fill="url(#sg)"/>
<circle cx="427.0" cy="507.0" r="2.7" fill="url(#sg)"/>
<circle cx="460.0" cy="533.0" r="3.6" fill="url(#sg)"/>
<circle cx="474.4" cy="516.7" r="3.0" fill="url(#sg)"/>
<circle cx="474.0" cy="690.0" r="3.0" fill="url(#sg)"/>
<circle cx="497.0" cy="694.5" r="3.0" fill="url(#sg)"/>
<circle cx="516.0" cy="706.0" r="3.3" fill="url(#sg)"/>
<circle cx="574.0" cy="699.4" r="3.5" fill="url(#sg)"/>
<circle cx="495.7" cy="717.5" r="3.6" fill="url(#sg)"/>
<circle cx="572.0" cy="751.0" r="3.0" fill="url(#sg)"/>
<circle cx="500.0" cy="762.8" r="3.0" fill="url(#sg)"/>
<circle cx="616.0" cy="754.0" r="3.3" fill="url(#sg)"/>
<circle cx="705.0" cy="746.6" r="3.0" fill="url(#sg)"/>
<circle cx="905.0" cy="743.0" r="3.0" fill="url(#sg)"/>
<circle cx="846.8" cy="735.0" r="3.1" fill="url(#sg)"/>
<circle cx="942.6" cy="779.0" r="2.7" fill="url(#sg)"/>
<circle cx="1034.6" cy="707.0" r="2.8" fill="url(#sg)"/>
<circle cx="1092.0" cy="224.0" r="3.5" fill="url(#sg)"/>
<circle cx="1067.8" cy="287.8" r="3.0" fill="url(#sg)"/>
<circle cx="1097.8" cy="432.0" r="3.3" fill="url(#sg)"/>
<circle cx="1051.0" cy="102.5" r="2.8" fill="url(#sg)"/>
<circle cx="1071.0" cy="97.7" r="3.3" fill="url(#sg)"/>
<circle cx="416.0" cy="289.0" r="3.3" fill="url(#sg)"/>
<circle cx="486.0" cy="709.0" r="2.7" fill="url(#sg)"/>
<circle cx="490.0" cy="717.0" r="2.7" fill="url(#sg)"/>
<circle cx="476.0" cy="736.0" r="2.7" fill="url(#sg)"/>
<circle cx="422.0" cy="675.0" r="3.0" fill="url(#sg)"/>
<circle cx="456.0" cy="655.0" r="3.0" fill="url(#sg)"/>
<circle cx="461.0" cy="658.0" r="2.7" fill="url(#sg)"/>
<circle cx="1107.0" cy="257.0" r="2.8" fill="url(#sg)"/>
<circle cx="1120.0" cy="90.0" r="2.5" fill="url(#sg)"/>
<circle cx="1080.0" cy="500.0" r="2.8" fill="url(#sg)"/>
<circle cx="1098.0" cy="652.0" r="3.0" fill="url(#sg)"/>
<circle cx="1092.0" cy="645.0" r="2.7" fill="url(#sg)"/>
<circle cx="1085.0" cy="610.0" r="2.7" fill="url(#sg)"/>
<circle cx="1099.0" cy="415.0" r="2.7" fill="url(#sg)"/>
<circle cx="1094.0" cy="420.0" r="2.5" fill="url(#sg)"/>
<circle cx="1145.0" cy="250.0" r="2.5" fill="url(#sg)"/>
<circle cx="810.0" cy="92.0" r="2.5" fill="url(#sg)"/>
<circle cx="742.0" cy="99.0" r="2.5" fill="url(#sg)"/>
<circle cx="960.0" cy="89.0" r="2.5" fill="url(#sg)"/>
<circle cx="1106.0" cy="87.0" r="2.7" fill="url(#sg)"/>
<circle cx="469.0" cy="276.0" r="2.3" fill="url(#sg)"/>
<circle cx="473.0" cy="277.0" r="2.3" fill="url(#sg)"/>
<circle cx="477.0" cy="277.0" r="2.3" fill="url(#sg)"/>
<circle cx="477.5" cy="725" r="8" fill="url(#so)"/><circle cx="477.5" cy="725" r="3" fill="#ffe8c0"/>
<circle cx="1132.8" cy="541" r="5.5" fill="url(#so)"/><circle cx="1132.8" cy="541" r="2" fill="#fff0d8"/>
<circle cx="464.0" cy="112.0" r="3.0" fill="#22a428"/>
<circle cx="455.5" cy="165.0" r="3.2" fill="#22a428"/>
<circle cx="404.0" cy="243.0" r="3.4" fill="#22a428"/>
<circle cx="419.0" cy="503.0" r="5.2" fill="#22a428"/>
<circle cx="507.0" cy="217.0" r="3.0" fill="#22a428"/>
<circle cx="422" cy="219" r="6" fill="none" stroke="#8a8a22" stroke-width="1.2"/>
<circle cx="501" cy="354" r="6" fill="none" stroke="#6a6a1c" stroke-width="1.2"/>
<g fill="none" stroke="#f01818"><circle cx="508" cy="337" r="3.2" stroke-width="3"/><circle cx="508" cy="337" r="8" stroke-width="3"/><circle cx="508" cy="337" r="12.5" stroke-width="2.4"/></g>
<text x="415.0" y="107.0" font-family="Liberation Sans, sans-serif" font-size="13" fill="#2fdfe8" font-weight="bold" textLength="70">Cassiopeia</text>
<text x="447.0" y="148.0" font-family="Liberation Sans, sans-serif" font-size="12.5" fill="#f01818">M 103</text>
<text x="433.0" y="223.5" font-family="Liberation Sans, sans-serif" font-size="12.5" fill="#f01818">Double Cluster</text>
<text x="467.0" y="359.0" font-family="Liberation Sans, sans-serif" font-size="12.5" fill="#f01818">M 34</text>
<text x="388.0" y="446.5" font-family="Liberation Sans, sans-serif" font-size="13" fill="#2fdfe8" font-weight="bold">Perseus</text>
<text x="429.0" y="509.0" font-family="Liberation Sans, sans-serif" font-size="12.5" fill="#f01818">California Nebula</text>
<text x="439.5" y="590.5" font-family="Liberation Sans, sans-serif" font-size="12.5" fill="#f01818">Seven Sisters</text>
<text x="480.0" y="684.5" font-family="Liberation Sans, sans-serif" font-size="13" fill="#2fdfe8" font-weight="bold">Taurus</text>
<text x="399.0" y="772.5" font-family="Liberation Sans, sans-serif" font-size="15" fill="#1f9a2a">ENE</text>
<text x="641.5" y="801.5" font-family="Liberation Sans, sans-serif" font-size="15" fill="#1f9a2a">East</text>
<text x="879.0" y="798.5" font-family="Liberation Sans, sans-serif" font-size="15" fill="#1f9a2a">ESE</text>
<text x="1134.0" y="766.0" font-family="Liberation Sans, sans-serif" font-size="15" fill="#1f9a2a">SE</text>
<text x="777.0" y="692.5" font-family="Liberation Sans, sans-serif" font-size="12.5" fill="#f4f4cc">Celestial Equator</text>
<text x="1121.0" y="261.5" font-family="Liberation Sans, sans-serif" font-size="12.5" fill="#f4f4cc">Celestial Equator</text>
<text x="1067.0" y="464.5" font-family="Liberation Sans, sans-serif" font-size="12.5" fill="#f4f4cc" text-anchor="end">Celestial Equator</text>
<text x="1091" y="320.3" text-anchor="middle" font-family="Liberation Sans, sans-serif" font-size="12.5" fill="#2a8ae0" transform="rotate(-29.7 1091 316)">Ecliptic</text>
</svg></div>
<div id="fits" style="left:507px;top:120px;width:544px;height:548px;border-radius:7px 7px 0 0;background:#7686de;overflow:hidden;box-shadow:inset 0 0 0 1px #5a68c8">
<style>
#fits .tb{left:0;top:0;width:544px;height:30px;background:linear-gradient(#7193e4 0,#9ab6f0 2px,#84a4ea 5px,#7a9be6 14px,#7c9fea 24px,#7391e0 30px)}
#fits .tt{left:25px;top:9px;color:#dbe6fa;font-weight:bold;font-size:13.5px;letter-spacing:.05px}
#fits .wb{top:7px;width:20px;height:20px;border:1px solid #e4ecfa;border-radius:3px;background:radial-gradient(circle at 30% 25%,#7a9cf0,#4a70dc 60%,#4064cc)}
#fits .wb.cl{background:radial-gradient(circle at 30% 25%,#dc8a94,#c4606c 60%,#b45060)}
#fits .body{left:4px;top:30px;width:536px;height:514px;background:#ece9d8;box-shadow:0 0 0 1px #dfe4f8}
.ib{top:45px;width:21px;height:21px;border:1px solid #3a5278;border-radius:3px;background:linear-gradient(#fff,#eeede6 60%,#d6d3c5)}
.hb{top:465px;width:38px;height:38px;border:1px solid #1c3a6c;border-radius:4px;background:linear-gradient(#fff,#f3f2ec 60%,#dcd9cb);box-shadow:inset -1px -1px 0 #c8c5b5}
</style>
<div class="tb"></div>
<svg class="abs" style="left:7px;top:11px" width="14" height="11" viewBox="0 0 16 14" preserveAspectRatio="none"><path d="M0.5 1.5 L4.5 1 L8 5 L12 1 L15.5 1.5 L10 7 L15.5 12 L11.5 12.5 L8 9 L4.5 12.5 L0.5 12 L6 7 Z" fill="#0a0a14"/></svg>
<div class="tt">PG_1634+706 _Empty00000024.fit - FITS Viewer</div>
<div class="wb" style="left:472px"><i style="left:4px;top:12px;width:7px;height:3px;background:#fff"></i></div>
<div class="wb" style="left:495px"><i style="left:3px;top:3px;width:12px;height:11px;border:1px solid #fff;border-top:3px solid #fff"></i></div>
<div class="wb cl" style="left:518px"><svg width="18" height="18" viewBox="0 0 18 18" class="abs" style="left:0;top:0"><path d="M4.5 4.5 L13.5 13.5 M13.5 4.5 L4.5 13.5" stroke="#fff" stroke-width="2.2"/></svg></div>
<div class="body">

<div style="left:11px;top:31px;width:513px;height:299px;border:1px solid #919b9c;background:#fcfcfa"></div>
<div style="left:64px;top:14px;width:95px;height:18px;border:1px solid #919b9c;border-bottom:none;border-radius:3px 3px 0 0;background:linear-gradient(#fff,#f0efe8);font-size:11px;line-height:17px;text-align:center">File Information</div>
<div style="left:11px;top:11px;width:54px;height:22px;border:1px solid #919b9c;border-bottom:none;border-top:2px solid #e8a020;border-radius:3px 3px 0 0;background:#fcfcfa;font-size:11px;line-height:19px;text-align:center">Photo</div>
<div style="left:25px;top:45px;width:73px;height:21px;border:1px solid #1c3a6c;border-radius:3px;background:linear-gradient(#fff,#f3f2ec 60%,#d9d6c8);font-size:11px;line-height:19px;box-shadow:0 0 0 1px #a8c0f0 inset"><span style="left:15px;top:0">Photo</span><i style="left:60px;top:8px;border:4px solid transparent;border-top:4px solid #000;border-bottom:none"></i></div>
<div class="ib" style="left:106px"></div>
<div class="ib" style="left:135px"></div>
<div class="ib" style="left:164px"></div>
<div class="ib" style="left:193px"></div>
<div class="ib" style="left:222px"></div>
<div class="ib" style="left:251px"></div>
<svg class="abs" style="left:106px;top:45px" width="180" height="21" viewBox="617 195 180 21">
<rect x="619" y="197" width="18" height="17" fill="#c8d0e0"/><rect x="619" y="197" width="18" height="4" fill="#98a8c8"/><g fill="#b040c8"><rect x="621" y="210" width="2" height="3"/><rect x="624" y="208" width="2" height="5"/><rect x="627" y="205" width="2" height="8"/><rect x="630" y="203" width="2" height="10"/><rect x="633" y="207" width="2" height="6"/></g>
<path d="M651 198 L651 211 L654.5 208 L657.5 214 L660 212.8 L657 207 L662 206.5 Z" fill="#1c8cec" stroke="#0c4c98" stroke-width="0.8"/>
<circle cx="684" cy="204" r="5.6" fill="#d8ecfc" stroke="#2a80d0" stroke-width="1.8"/><path d="M688 208.5 L693 213.5" stroke="#2a80d0" stroke-width="2.6" stroke-linecap="round"/>
<path d="M681 204 H687" stroke="#2a60b0" stroke-width="1.6"/>
<path d="M684 201 V207" stroke="#2a60b0" stroke-width="1.6"/>
<circle cx="713" cy="204" r="5.6" fill="#d8ecfc" stroke="#2a80d0" stroke-width="1.8"/><path d="M717 208.5 L722 213.5" stroke="#2a80d0" stroke-width="2.6" stroke-linecap="round"/>
<path d="M710 204 H716" stroke="#2a60b0" stroke-width="1.6"/>
<rect x="736" y="198" width="13" height="10" fill="#1c3a8c"/><circle cx="742" cy="202.5" r="2.4" fill="#e8f0ff"/><path d="M746 208 L751 213.5" stroke="#5a9ae0" stroke-width="2.2"/>
<circle cx="776" cy="202" r="4.6" fill="#d8ecfc" stroke="#7ab0e0" stroke-width="1.2"/><path d="M768 201 L768 212 L771 209.5 L773.5 214 L775.5 213 L773 208.5 L777 208 Z" fill="#2a8ae8" stroke="#0c3c90" stroke-width="0.6"/><circle cx="767.5" cy="199.5" r="2.2" fill="#f0c040"/>
</svg>
<div class="cb" style="left:437px;top:49px"></div><span class="lbl" style="left:455px;top:49px;letter-spacing:-.3px">Crosshairs</span>
<svg class="abs" style="left:24px;top:74px" width="468" height="200" viewBox="0 0 468 200">
<defs><linearGradient id="ig" x1="0" y1="0" x2="1" y2="0"><stop offset="0" stop-color="#363636"/><stop offset="0.3" stop-color="#3a3a3a"/><stop offset="0.62" stop-color="#2e2e2e"/><stop offset="0.8" stop-color="#1a1a1a"/><stop offset="0.92" stop-color="#040404"/><stop offset="1" stop-color="#000"/></linearGradient>
<radialGradient id="gal"><stop offset="0" stop-color="#fff" stop-opacity=".55"/><stop offset="0.3" stop-color="#ddd" stop-opacity=".22"/><stop offset="1" stop-color="#aaa" stop-opacity="0"/></radialGradient>
<radialGradient id="st"><stop offset="0" stop-color="#fff"/><stop offset="0.55" stop-color="#fff"/><stop offset="1" stop-color="#fff" stop-opacity="0"/></radialGradient>
<filter id="gr" x="0" y="0" width="100%" height="100%" color-interpolation-filters="sRGB"><feTurbulence type="fractalNoise" baseFrequency="0.85" numOctaves="2" seed="3"/><feColorMatrix type="matrix" values="0.44 0 0 0 0.0  0.44 0 0 0 0.0  0.44 0 0 0 0.0  0 0 0 0 1"/></filter>
<radialGradient id="gm" gradientUnits="userSpaceOnUse" cx="-98" cy="256" r="561"><stop offset="0" stop-color="#fff"/><stop offset="0.6" stop-color="#fff"/><stop offset="0.74" stop-color="#d4d4d4"/><stop offset="0.85" stop-color="#8a8a8a"/><stop offset="0.93" stop-color="#303030"/><stop offset="1" stop-color="#000"/></radialGradient>
<mask id="gmm"><rect width="468" height="200" fill="url(#gm)"/></mask>
<radialGradient id="vg" gradientUnits="userSpaceOnUse" cx="190" cy="150" r="260"><stop offset="0" stop-color="#000" stop-opacity="0"/><stop offset="0.6" stop-color="#000" stop-opacity="0"/><stop offset="1" stop-color="#000" stop-opacity=".4"/></radialGradient>
</defs>
<rect width="468" height="200" fill="#000"/>
<g mask="url(#gmm)"><rect width="468" height="200" filter="url(#gr)"/></g><rect width="468" height="200" fill="url(#vg)"/>
<circle cx="165.0" cy="131.5" r="26" fill="url(#gal)"/>
<circle cx="57.6" cy="33.5" r="3.6" fill="url(#st)"/>
<circle cx="244.5" cy="62.0" r="3.4" fill="url(#st)"/>
<circle cx="128.0" cy="98.4" r="2.2" fill="url(#st)"/>
<circle cx="210.5" cy="111.0" r="2.0" fill="url(#st)"/>
<circle cx="168.5" cy="121.0" r="2.4" fill="url(#st)"/>
<circle cx="165.0" cy="131.5" r="3.6" fill="url(#st)"/>
<circle cx="351.5" cy="108.0" r="3.4" fill="url(#st)"/>
<circle cx="374.0" cy="130.5" r="2.4" fill="url(#st)"/>
<circle cx="231.6" cy="169.4" r="3.2" fill="url(#st)"/>
<circle cx="360.5" cy="176.8" r="3.6" fill="url(#st)"/>
<circle cx="0.0" cy="97.5" r="2.6" fill="url(#st)"/>
<circle cx="154.5" cy="111.0" r="1.4" fill="url(#st)"/>
<circle cx="203.0" cy="32.0" r="1.2" fill="url(#st)"/>
<circle cx="199.0" cy="112.0" r="0.6" fill="#fff" opacity="0.63"/>
<circle cx="376.2" cy="38.0" r="0.7" fill="#fff" opacity="0.64"/>
<circle cx="270.1" cy="37.2" r="0.6" fill="#fff" opacity="0.55"/>
<circle cx="39.9" cy="161.9" r="0.7" fill="#fff" opacity="0.72"/>
<circle cx="262.0" cy="79.2" r="0.6" fill="#fff" opacity="0.73"/>
<circle cx="270.8" cy="31.5" r="0.5" fill="#fff" opacity="0.82"/>
<circle cx="27.8" cy="7.1" r="0.5" fill="#fff" opacity="0.70"/>
<circle cx="342.4" cy="65.3" r="0.7" fill="#fff" opacity="0.82"/>
<circle cx="228.4" cy="128.1" r="0.6" fill="#fff" opacity="0.40"/>
<circle cx="37.4" cy="131.0" r="0.6" fill="#fff" opacity="0.90"/>
<circle cx="438.1" cy="168.0" r="0.7" fill="#fff" opacity="0.53"/>
<circle cx="333.5" cy="102.6" r="0.5" fill="#fff" opacity="0.44"/>
<circle cx="337.2" cy="80.1" r="0.6" fill="#fff" opacity="0.59"/>
<circle cx="421.5" cy="169.5" r="0.5" fill="#fff" opacity="0.51"/>
<circle cx="407.9" cy="10.5" r="0.6" fill="#fff" opacity="0.89"/>
<circle cx="174.9" cy="14.6" r="0.7" fill="#fff" opacity="0.50"/>
<circle cx="297.0" cy="67.4" r="0.6" fill="#fff" opacity="0.57"/>
<circle cx="424.2" cy="151.6" r="0.5" fill="#fff" opacity="0.47"/>
<circle cx="311.1" cy="2.2" r="0.6" fill="#fff" opacity="0.80"/>
<circle cx="78.2" cy="111.9" r="0.6" fill="#fff" opacity="0.65"/>
<circle cx="433.5" cy="153.9" r="0.6" fill="#fff" opacity="0.72"/>
<circle cx="51.3" cy="84.2" r="0.5" fill="#fff" opacity="0.40"/>
<circle cx="380.3" cy="195.0" r="0.7" fill="#fff" opacity="0.55"/>
<circle cx="389.3" cy="42.1" r="0.6" fill="#fff" opacity="0.90"/>
<circle cx="264.9" cy="115.4" r="0.5" fill="#fff" opacity="0.89"/>
<circle cx="93.8" cy="51.7" r="0.7" fill="#fff" opacity="0.56"/>
<circle cx="130.4" cy="14.7" r="0.5" fill="#fff" opacity="0.50"/>
<circle cx="280.1" cy="3.1" r="0.6" fill="#fff" opacity="0.59"/>
<circle cx="199.4" cy="191.8" r="0.6" fill="#fff" opacity="0.82"/>
<circle cx="59.7" cy="77.2" r="0.7" fill="#fff" opacity="0.48"/>
<circle cx="399.7" cy="163.6" r="0.5" fill="#fff" opacity="0.76"/>
<circle cx="69.7" cy="125.8" r="0.7" fill="#fff" opacity="0.50"/>
<circle cx="418.1" cy="176.4" r="0.7" fill="#fff" opacity="0.44"/>
<circle cx="20.9" cy="21.8" r="0.7" fill="#fff" opacity="0.88"/>
<circle cx="104.9" cy="140.9" r="0.6" fill="#fff" opacity="0.61"/>
<circle cx="398.1" cy="98.2" r="0.7" fill="#fff" opacity="0.49"/>
<circle cx="317.0" cy="13.8" r="0.5" fill="#fff" opacity="0.64"/>
<circle cx="287.5" cy="123.2" r="0.5" fill="#fff" opacity="0.54"/>
<circle cx="403.6" cy="40.8" r="0.5" fill="#fff" opacity="0.43"/>
<circle cx="181.0" cy="49.8" r="0.5" fill="#fff" opacity="0.49"/>
<circle cx="162.3" cy="114.4" r="0.5" fill="#fff" opacity="0.45"/>
<circle cx="60.9" cy="90.1" r="0.6" fill="#fff" opacity="0.73"/>
<circle cx="304.1" cy="116.9" r="0.5" fill="#fff" opacity="0.69"/>
<circle cx="406.4" cy="95.0" r="0.6" fill="#fff" opacity="0.75"/>
<circle cx="423.6" cy="4.3" r="0.7" fill="#fff" opacity="0.44"/>
<circle cx="29.6" cy="62.2" r="0.5" fill="#fff" opacity="0.90"/>
<circle cx="33.1" cy="109.2" r="0.7" fill="#fff" opacity="0.42"/>
<circle cx="411.9" cy="147.4" r="0.5" fill="#fff" opacity="0.80"/>
<circle cx="402.6" cy="70.4" r="0.7" fill="#fff" opacity="0.64"/>
<circle cx="34.2" cy="171.5" r="0.5" fill="#fff" opacity="0.83"/>
<circle cx="252.0" cy="125.0" r="0.6" fill="#fff" opacity="0.59"/>
<circle cx="5.5" cy="14.4" r="0.5" fill="#fff" opacity="0.72"/>
<circle cx="437.1" cy="176.0" r="0.7" fill="#fff" opacity="0.57"/>
<circle cx="411.1" cy="138.8" r="0.6" fill="#fff" opacity="0.62"/>
<circle cx="368.9" cy="16.8" r="0.7" fill="#fff" opacity="0.41"/>
<circle cx="264.6" cy="96.2" r="0.5" fill="#fff" opacity="0.88"/>
<circle cx="49.7" cy="156.0" r="0.7" fill="#fff" opacity="0.86"/>
<circle cx="112.6" cy="2.3" r="0.6" fill="#fff" opacity="0.47"/>
<circle cx="269.2" cy="103.7" r="0.6" fill="#fff" opacity="0.73"/>
<circle cx="194.5" cy="178.3" r="0.6" fill="#fff" opacity="0.60"/>
<circle cx="110.3" cy="126.8" r="0.5" fill="#fff" opacity="0.84"/>
<circle cx="169.1" cy="116.6" r="0.6" fill="#fff" opacity="0.50"/>
<circle cx="59.2" cy="70.1" r="0.5" fill="#fff" opacity="0.76"/>
<circle cx="418.0" cy="55.4" r="0.5" fill="#fff" opacity="0.46"/>
<circle cx="207.4" cy="185.1" r="0.6" fill="#fff" opacity="0.59"/>
<circle cx="228.8" cy="134.4" r="0.7" fill="#fff" opacity="0.82"/>
<circle cx="432.1" cy="90.5" r="0.5" fill="#fff" opacity="0.81"/>
<circle cx="122.4" cy="121.5" r="0.7" fill="#fff" opacity="0.75"/>
<circle cx="251.1" cy="61.8" r="0.7" fill="#fff" opacity="0.41"/>
<circle cx="59.8" cy="91.0" r="0.5" fill="#fff" opacity="0.78"/>
</svg>
<div style="left:23px;top:73px;width:487px;height:220px;border:1px solid #7f9db9;border-width:1px"></div>
<div style="left:492px;top:74px;width:17px;height:200px;background:#f8f8f4"></div>
<div class="sbb" style="left:493px;top:75px"></div><div class="sbb dn" style="left:493px;top:258px"></div>
<div style="left:493px;top:128px;width:15px;height:64px;border:1px solid #b4c3ee;border-radius:2px;background:linear-gradient(90deg,#c9d7fc,#b9c9f5)"><i style="left:4px;top:26px;width:6px;height:1px;background:#eef4fe;box-shadow:0 2px #eef4fe,0 4px #eef4fe,0 6px #eef4fe,0 1px #8ca4e0,0 3px #8ca4e0,0 5px #8ca4e0"></i></div>
<div style="left:24px;top:275px;width:485px;height:17px;background:#f8f8f4"></div>
<div class="sbb lf" style="left:25px;top:276px"></div><div class="sbb rt" style="left:476px;top:276px"></div>
<div style="left:162px;top:276px;width:262px;height:15px;border:1px solid #b4c3ee;border-radius:2px;background:linear-gradient(#c9d7fc,#b9c9f5)"><i style="left:126px;top:4px;width:1px;height:6px;background:#eef4fe;box-shadow:2px 0 #eef4fe,4px 0 #eef4fe,6px 0 #eef4fe,1px 0 #8ca4e0,3px 0 #8ca4e0,5px 0 #8ca4e0"></i></div>
<div style="left:492px;top:275px;width:17px;height:17px;background:#ece9d8"></div>
<span class="lbl" style="left:23px;top:303px">(289,305) 13783</span><span class="lbl" style="left:481px;top:303px">100%</span>
<div style="left:20px;top:334px;width:495px;height:8px;border-radius:4px;background:linear-gradient(#a8a8a0,#d8d8d2 40%,#c0c0b8);border:1px solid #8f8f88"></div>
<div style="left:11px;top:342px;width:513px;height:76px;border:1px solid #b8c4d0;background:#f8f8f4"></div>
<svg class="abs" style="left:11px;top:343px" width="496" height="59" viewBox="522 493 496 59">
<rect x="522" y="493" width="496" height="59" fill="#a0a0a4"/>
<polygon points="538,535 539,528 540,521 541,517 542,515 543,512 544,510 545,511 546,507 547,505 548,503 549,500 550,497 551,495 552,499 553,502 554,498 555,495 556,496 557,504 558,514 559,526 560,533 561,535" fill="#ececf8" stroke="#000" stroke-width="1.7"/>
<line x1="538" y1="535.5" x2="1003" y2="535.5" stroke="#000" stroke-width="1.4"/>
<rect x="630" y="534" width="2" height="1" fill="#000"/>
<rect x="676" y="534" width="1" height="1" fill="#000"/>
<rect x="701" y="534" width="2" height="1" fill="#000"/>
<rect x="687" y="534" width="2" height="1" fill="#000"/>
<rect x="640" y="534" width="2" height="1" fill="#000"/>
<rect x="852" y="534" width="3" height="1" fill="#000"/>
<rect x="612" y="534" width="3" height="1" fill="#000"/>
<rect x="701" y="534" width="2" height="1" fill="#000"/>
<rect x="637" y="534" width="1" height="1" fill="#000"/>
<rect x="799" y="534" width="3" height="1" fill="#000"/>
<rect x="697" y="534" width="2" height="1" fill="#000"/>
<rect x="709" y="534" width="3" height="1" fill="#000"/>
<rect x="649" y="534" width="1" height="1" fill="#000"/>
<rect x="699" y="534" width="1" height="1" fill="#000"/>
<rect x="638" y="534" width="3" height="1" fill="#000"/>
<rect x="711" y="534" width="1" height="1" fill="#000"/>
<rect x="663" y="534" width="3" height="1" fill="#000"/>
<rect x="909" y="534" width="3" height="1" fill="#000"/>
<rect x="736" y="534" width="3" height="1" fill="#000"/>
<rect x="659" y="534" width="3" height="1" fill="#000"/>
<rect x="596" y="534" width="3" height="1" fill="#000"/>
<rect x="713" y="534" width="3" height="1" fill="#000"/>
<rect x="935" y="534" width="2" height="1" fill="#000"/>
<rect x="826" y="534" width="2" height="1" fill="#000"/>
<rect x="821" y="534" width="1" height="1" fill="#000"/>
<rect x="649" y="534" width="3" height="1" fill="#000"/>
<rect x="598" y="534" width="1" height="1" fill="#000"/>
<rect x="772" y="534" width="1" height="1" fill="#000"/>
<rect x="675" y="534" width="3" height="1" fill="#000"/>
<rect x="965" y="534" width="1" height="1" fill="#000"/>
<rect x="677" y="534" width="3" height="1" fill="#000"/>
<rect x="706" y="534" width="3" height="1" fill="#000"/>
<rect x="734" y="534" width="1" height="1" fill="#000"/>
<rect x="673" y="534" width="1" height="1" fill="#000"/>
<rect x="608" y="534" width="3" height="1" fill="#000"/>
<rect x="854" y="534" width="2" height="1" fill="#000"/>
<rect x="881" y="534" width="3" height="1" fill="#000"/>
<rect x="698" y="534" width="3" height="1" fill="#000"/>
<rect x="792" y="534" width="3" height="1" fill="#000"/>
<rect x="848" y="534" width="1" height="1" fill="#000"/>
<rect x="600" y="534" width="1" height="1" fill="#000"/>
<rect x="744" y="534" width="3" height="1" fill="#000"/>
<rect x="864" y="534" width="1" height="1" fill="#000"/>
<rect x="930" y="534" width="2" height="1" fill="#000"/>
<rect x="810" y="534" width="1" height="1" fill="#000"/>
<rect x="685" y="534" width="2" height="1" fill="#000"/>
<rect x="642" y="534" width="3" height="1" fill="#000"/>
<rect x="617" y="534" width="3" height="1" fill="#000"/>
<rect x="706" y="534" width="3" height="1" fill="#000"/>
<rect x="670" y="534" width="3" height="1" fill="#000"/>
<rect x="695" y="534" width="2" height="1" fill="#000"/>
<rect x="664" y="534" width="2" height="1" fill="#000"/>
<rect x="747" y="534" width="2" height="1" fill="#000"/>
<rect x="656" y="534" width="1" height="1" fill="#000"/>
<rect x="716" y="534" width="3" height="1" fill="#000"/>
<rect x="647" y="534" width="2" height="1" fill="#000"/>
<rect x="860" y="534" width="3" height="1" fill="#000"/>
<rect x="727" y="534" width="2" height="1" fill="#000"/>
<rect x="880" y="534" width="1" height="1" fill="#000"/>
<rect x="764" y="534" width="3" height="1" fill="#000"/>
<rect x="665" y="534" width="3" height="1" fill="#000"/>
<rect x="652" y="534" width="2" height="1" fill="#000"/>
<rect x="928" y="534" width="1" height="1" fill="#000"/>
<rect x="939" y="534" width="2" height="1" fill="#000"/>
<rect x="802" y="534" width="2" height="1" fill="#000"/>
<rect x="823" y="534" width="3" height="1" fill="#000"/>
<rect x="714" y="534" width="1" height="1" fill="#000"/>
<rect x="934" y="534" width="1" height="1" fill="#000"/>
<rect x="801" y="534" width="1" height="1" fill="#000"/>
<rect x="939" y="534" width="2" height="1" fill="#000"/>
<rect x="720" y="534" width="3" height="1" fill="#000"/>
<rect x="712" y="534" width="1" height="1" fill="#000"/>
<rect x="649" y="534" width="1" height="1" fill="#000"/>
<rect x="739" y="534" width="2" height="1" fill="#000"/>
<rect x="806" y="534" width="3" height="1" fill="#000"/>
<rect x="683" y="534" width="2" height="1" fill="#000"/>
<rect x="689" y="534" width="3" height="1" fill="#000"/>
<rect x="829" y="534" width="2" height="1" fill="#000"/>
<rect x="748" y="534" width="1" height="1" fill="#000"/>
<rect x="717" y="534" width="3" height="1" fill="#000"/>
<rect x="715" y="534" width="2" height="1" fill="#000"/>
<rect x="599" y="534" width="3" height="1" fill="#000"/>
<rect x="605" y="534" width="3" height="1" fill="#000"/>
<rect x="657" y="534" width="2" height="1" fill="#000"/>
<rect x="639" y="534" width="2" height="1" fill="#000"/>
<rect x="943" y="534" width="3" height="1" fill="#000"/>
<rect x="645" y="534" width="3" height="1" fill="#000"/>
<rect x="672" y="534" width="2" height="1" fill="#000"/>
<rect x="724" y="534" width="1" height="1" fill="#000"/>
<rect x="974" y="534" width="3" height="1" fill="#000"/>
<rect x="702" y="534" width="1" height="1" fill="#000"/>
<rect x="907" y="534" width="3" height="1" fill="#000"/>
<rect x="684" y="534" width="1" height="1" fill="#000"/>
<rect x="641" y="534" width="2" height="1" fill="#000"/>
<rect x="771" y="534" width="2" height="1" fill="#000"/>
<line x1="548.5" y1="493" x2="548.5" y2="536" stroke="#f01010" stroke-width="1.2"/><polygon points="549.5,535.5 549.5,552 532,552" fill="#f81010"/>
<line x1="580.5" y1="493" x2="580.5" y2="536" stroke="#10d010" stroke-width="1.2"/><polygon points="580,535.5 580,552 597,552" fill="#10e010"/>
</svg>
<div class="sbb " style="left:508px;top:344px;background:#f0efe8;border-color:#d8d8d0;opacity:.75"></div><div class="sbb dn" style="left:508px;top:385px;background:#f0efe8;border-color:#d8d8d0;opacity:.75"></div><div class="sbb lf" style="left:12px;top:402px;background:#f0efe8;border-color:#d8d8d0;opacity:.75"></div><div class="sbb rt" style="left:491px;top:402px;background:#f0efe8;border-color:#d8d8d0;opacity:.75"></div>
<div style="left:507px;top:402px;width:16px;height:16px;background:#ece9d8"></div>
<div style="left:55px;top:433px;width:24px;height:1px;background:#c8c5b5"></div>
<span class="lbl" style="left:11px;top:426px;color:#1548c0;letter-spacing:-.7px">Minimum</span>
<div class="fld" style="left:11px;top:439px;width:67px;height:18px;line-height:16px;padding-left:2px">12890.08<div class="spin sp" style="height:14px;width:14px"><i style="top:2px;transform:rotate(45deg) scale(.65)"></i><i style="top:6px;transform:rotate(225deg) scale(.65)"></i></div></div>
<div style="left:505px;top:433px;width:20px;height:1px;background:#c8c5b5"></div>
<span class="lbl" style="left:459px;top:426px;color:#1548c0;letter-spacing:-.45px">Maximum</span>
<div class="fld" style="left:458px;top:439px;width:67px;height:18px;line-height:16px;padding-left:2px">16332.51<div class="spin sp" style="height:14px;width:14px"><i style="top:2px;transform:rotate(45deg) scale(.65)"></i><i style="top:6px;transform:rotate(225deg) scale(.65)"></i></div></div>
<span class="lbl" style="left:462px;top:464px;font-size:11.5px">Method</span>
<div class="fld" style="left:463px;top:484px;width:62px;height:19px;line-height:17px;padding-left:3px">Custom<div class="dd" style="height:15px;width:15px"></div></div>
<div class="hb" style="left:12px"><svg class="abs" style="left:9px;top:11px" width="21" height="16" viewBox="0 0 21 16"><g fill="#b040c8"><rect x="0" y="11" width="2" height="4"/><rect x="3" y="9" width="2" height="6"/><rect x="6" y="7" width="2" height="8"/><rect x="9" y="5" width="2" height="10"/><rect x="12" y="1" width="2" height="14"/><rect x="15" y="6" width="2" height="9"/><rect x="18" y="9" width="2" height="6"/></g><rect x="8" y="8" width="4" height="6" fill="#4a80e0" opacity=".8"/></svg></div>
<div class="hb" style="left:58px"><svg class="abs" style="left:9px;top:11px" width="21" height="16" viewBox="0 0 21 16"><g fill="#b040c8"><rect x="0" y="11" width="2" height="4"/><rect x="3" y="9" width="2" height="6"/><rect x="6" y="7" width="2" height="8"/><rect x="9" y="5" width="2" height="10"/><rect x="12" y="1" width="2" height="14"/><rect x="15" y="6" width="2" height="9"/><rect x="18" y="9" width="2" height="6"/></g><rect x="14" y="8" width="4" height="6" fill="#e0e0f0" opacity=".8"/></svg></div>
<div class="hb" style="left:104px"><svg class="abs" style="left:9px;top:11px" width="21" height="16" viewBox="0 0 21 16"><g fill="#b040c8"><rect x="0" y="11" width="2" height="4"/><rect x="3" y="9" width="2" height="6"/><rect x="6" y="7" width="2" height="8"/><rect x="9" y="5" width="2" height="10"/><rect x="12" y="1" width="2" height="14"/><rect x="15" y="6" width="2" height="9"/><rect x="18" y="9" width="2" height="6"/></g><rect x="14" y="8" width="4" height="6" fill="#e0e0f0" opacity=".8"/></svg></div>
<div class="hb" style="left:150px"><svg class="abs" style="left:9px;top:11px" width="21" height="16" viewBox="0 0 21 16"><g fill="#b040c8"><rect x="0" y="11" width="2" height="4"/><rect x="3" y="9" width="2" height="6"/><rect x="6" y="7" width="2" height="8"/><rect x="9" y="5" width="2" height="10"/><rect x="12" y="1" width="2" height="14"/><rect x="15" y="6" width="2" height="9"/><rect x="18" y="9" width="2" height="6"/></g><rect x="13" y="8" width="4" height="6" fill="#e8d0f0" opacity=".8"/></svg></div>
<div class="hb" style="left:196px"><svg class="abs" style="left:9px;top:11px" width="21" height="16" viewBox="0 0 21 16"><g fill="#b040c8"><rect x="0" y="11" width="2" height="4"/><rect x="3" y="9" width="2" height="6"/><rect x="6" y="7" width="2" height="8"/><rect x="9" y="5" width="2" height="10"/><rect x="12" y="1" width="2" height="14"/><rect x="15" y="6" width="2" height="9"/><rect x="18" y="9" width="2" height="6"/></g><rect x="13" y="8" width="4" height="6" fill="#f0e0f0" opacity=".8"/></svg></div>
<div class="hb" style="left:242px"><svg class="abs" style="left:9px;top:11px" width="21" height="16" viewBox="0 0 21 16"><g fill="#b040c8"><rect x="0" y="11" width="2" height="4"/><rect x="3" y="9" width="2" height="6"/><rect x="6" y="7" width="2" height="8"/><rect x="9" y="5" width="2" height="10"/><rect x="12" y="1" width="2" height="14"/><rect x="15" y="6" width="2" height="9"/><rect x="18" y="9" width="2" height="6"/></g><rect x="14" y="8" width="4" height="6" fill="#e8d820" opacity=".8"/></svg></div>
<svg class="abs" style="left:521px;top:499px" width="13" height="13" viewBox="0 0 13 13"><g fill="#b8b5a5"><rect x="9" y="1" width="2" height="2"/><rect x="5" y="5" width="2" height="2"/><rect x="9" y="5" width="2" height="2"/><rect x="1" y="9" width="2" height="2"/><rect x="5" y="9" width="2" height="2"/><rect x="9" y="9" width="2" height="2"/></g></svg>
</div></div>
<div id="status">
<span style="left:324px">FOV: 75°</span><span style="left:379px">7/28/2013</span><span style="left:441px;letter-spacing:-.25px">2:41:28 AM DST</span><span style="left:531px">Scope Alt: +36° 34' 57"</span><span style="left:656px;letter-spacing:-.1px">HA: -03h 39m 15.0s</span><span style="left:764px;letter-spacing:-.19px">Scope RA: 01h 37m 26.65s</span><span style="left:906px">Scope Dec: +15° 51' 09.67"</span><span style="left:1052px">LST: 21:58:12</span>
<i style="left:1132px;top:3px;width:1px;height:14px;background:#c5c2b0"></i><i style="left:1133px;top:3px;width:1px;height:14px;background:#fff"></i>
<svg class="abs" style="left:1138px;top:5px" width="13" height="13" viewBox="0 0 13 13"><g fill="#b8b5a5"><rect x="9" y="1" width="2" height="2"/><rect x="5" y="5" width="2" height="2"/><rect x="9" y="5" width="2" height="2"/><rect x="1" y="9" width="2" height="2"/><rect x="5" y="9" width="2" height="2"/><rect x="9" y="9" width="2" height="2"/></g></svg>
</div>
<div id="task">
<div style="left:0;top:0;width:97px;height:30px;border-radius:0 12px 12px 0;background:linear-gradient(#5eae5a 0,#3d9c3d 4px,#3a973a 10px,#2f8a2f 22px,#287a28 30px);box-shadow:inset -3px 0 4px #2a7a2a,2px 0 3px #1a3c9a"></div>
<svg class="abs" style="left:10px;top:5px" width="19" height="19" viewBox="0 0 19 19"><g transform="skewX(-8) translate(2 0)"><path d="M2 3 C4 1.5 6 1.5 8 3 L7.4 9 C5.5 7.6 3.5 7.6 1.4 9 Z" fill="#e8502a"/><path d="M9.5 3 C11.5 4.5 13.5 4.5 15.5 3 L15 9 C13 10.4 11 10.4 9 9 Z" fill="#6cc04a"/><path d="M1.2 10.4 C3.3 9 5.3 9 7.2 10.4 L6.6 16.4 C4.7 15 2.7 15 0.6 16.4 Z" fill="#3c86e8"/><path d="M8.8 10.4 C10.8 11.8 12.8 11.8 14.8 10.4 L14.2 16.4 C12.2 17.8 10.2 17.8 8.2 16.4 Z" fill="#f4c428"/></g></svg>
<span style="left:34px;top:3px;color:#fff;font-size:18px;font-weight:bold;font-style:italic;letter-spacing:-.6px;text-shadow:1px 1px 2px #1a4a1a">start</span>
<!-- quick launch -->
<svg class="abs" style="left:107px;top:5px" width="90" height="20" viewBox="107 839 90 20">
<rect x="108" y="841" width="16" height="16" fill="#0c1470"/><path d="M110 856 L121 843" stroke="#c8d0f8" stroke-width="1.2"/><circle cx="119" cy="846" r="2" fill="#e8e8ff"/><path d="M109 850 L123 853" stroke="#3848c0" stroke-width=".8"/>
<circle cx="141" cy="849" r="8" fill="#e8c020"/><path d="M141 849 L134 845 A8 8 0 0 1 148 845 Z" fill="#e04030"/><path d="M141 849 L141 857 A8 8 0 0 1 134 845 Z" fill="#30a048"/><path d="M133.5 845 A8 8 0 0 1 148.5 845 L141 845 Z" fill="#e04030"/><circle cx="141" cy="849" r="3.6" fill="#fff"/><circle cx="141" cy="849" r="2.8" fill="#3c80e8"/>
<rect x="154" y="842" width="14" height="14" rx="2" fill="#4a9ae8"/><rect x="156" y="844" width="10" height="10" rx="1" fill="#e8f0ff"/><path d="M158 850 A3 3 0 1 1 164 850" fill="none" stroke="#2a60b0" stroke-width="1.4"/><path d="M163 843 L168 841 L166 846Z" fill="#e8a020"/>
<path d="M182 842 L185 845 L182 848 M186.5 842 L189.5 845 L186.5 848" fill="none" stroke="#b8d0f8" stroke-width="1.3"/>
</svg>
<!-- task buttons -->
<div style="left:199px;top:4px;width:158px;height:23px;border-radius:3px;background:linear-gradient(#1a48b4,#1e52c4 50%,#2058cc);box-shadow:inset 1px 1px 2px #0e2e80;border:1px solid #163c9c"></div>
<svg class="abs" style="left:208px;top:8px" width="17" height="14" viewBox="0 0 16 14"><path d="M0.5 1.5 L4.5 1 L8 5 L12 1 L15.5 1.5 L10 7 L15.5 12 L11.5 12.5 L8 9 L4.5 12.5 L0.5 12 L6 7 Z" fill="#0a0a14"/></svg>
<span style="left:229px;top:8px;color:#fff;font-size:11px">ok_1Feb2013* - The...</span>
<div style="left:359px;top:4px;width:158px;height:23px;border-radius:3px;background:linear-gradient(#5a96f8,#3c82f2 30%,#3a7ef0 70%,#3070e0);border:1px solid #2a5cc8"></div>
<svg class="abs" style="left:367px;top:6px" width="17" height="17" viewBox="0 0 17 17"><rect x="0" y="0" width="17" height="17" fill="#0c1470"/><path d="M2 16 L14 2" stroke="#c8d0f8" stroke-width="1.2"/><circle cx="11.5" cy="5" r="2.2" fill="#e8e8ff"/><path d="M1 9 L16 12" stroke="#3848c0" stroke-width=".8"/></svg>
<span style="left:387px;top:8px;color:#fff;font-size:11px">Astrometrica</span>
<!-- tray -->
<span style="left:982px;top:9px;color:#fff;font-size:11px">IT</span>
<div style="left:1004px;top:0;width:148px;height:30px;background:linear-gradient(#1aa0f0 0,#1290e8 4px,#0f88e4 14px,#0f86e0 24px,#0c6cc8 30px);border-left:1px solid #0a50b0;box-shadow:inset 1px 0 0 #38b0f8"></div>
<div style="left:996px;top:7px;width:17px;height:17px;border-radius:9px;background:radial-gradient(circle at 40% 35%,#5ab8f8,#1a78e0 70%);border:1px solid #b8dcf8"></div>
<svg class="abs" style="left:1000px;top:10px" width="10" height="11" viewBox="0 0 10 11"><path d="M6.5 1.5 L2.5 5.5 L6.5 9.5" fill="none" stroke="#fff" stroke-width="2"/></svg>
<svg class="abs" style="left:1016px;top:5px" width="75" height="20" viewBox="1016 839 75 20">
<rect x="1018" y="842" width="13" height="9" fill="#d8d8d8"/><rect x="1017" y="851" width="8" height="6" fill="#c8c8c8"/><rect x="1025" y="849" width="7" height="8" fill="#18d838"/><rect x="1019" y="843" width="6" height="4" fill="#f8f8f8"/>
<rect x="1035" y="841" width="9" height="8" fill="#6aa8f0" stroke="#2a50a0" stroke-width=".8"/><rect x="1039" y="847" width="9" height="8" fill="#6aa8f0" stroke="#2a50a0" stroke-width=".8"/><rect x="1034" y="855" width="8" height="2" fill="#c8d8f0"/>
<circle cx="1058" cy="848" r="6.5" fill="#c8c8c8" stroke="#505050" stroke-width="1"/><circle cx="1058" cy="848" r="3.4" fill="#3a4a5a"/><circle cx="1057" cy="847" r="1.2" fill="#a8c8e8"/><path d="M1052 857 H1064 L1061 854 H1055Z" fill="#606060"/>
<rect x="1069" y="841" width="17" height="15" rx="2" fill="#e8c820" stroke="#8a7008" stroke-width=".8"/><ellipse cx="1077.500" cy="848.500" rx="6" ry="3.6" fill="#f8f0c0" stroke="#2a2008" stroke-width="1"/><circle cx="1077.500" cy="848.500" r="2.2" fill="#2a2008"/>
</svg>
<span style="left:1095px;top:8px;color:#fff;font-size:11px">2:41 AM</span>
</div>
</body></html>
